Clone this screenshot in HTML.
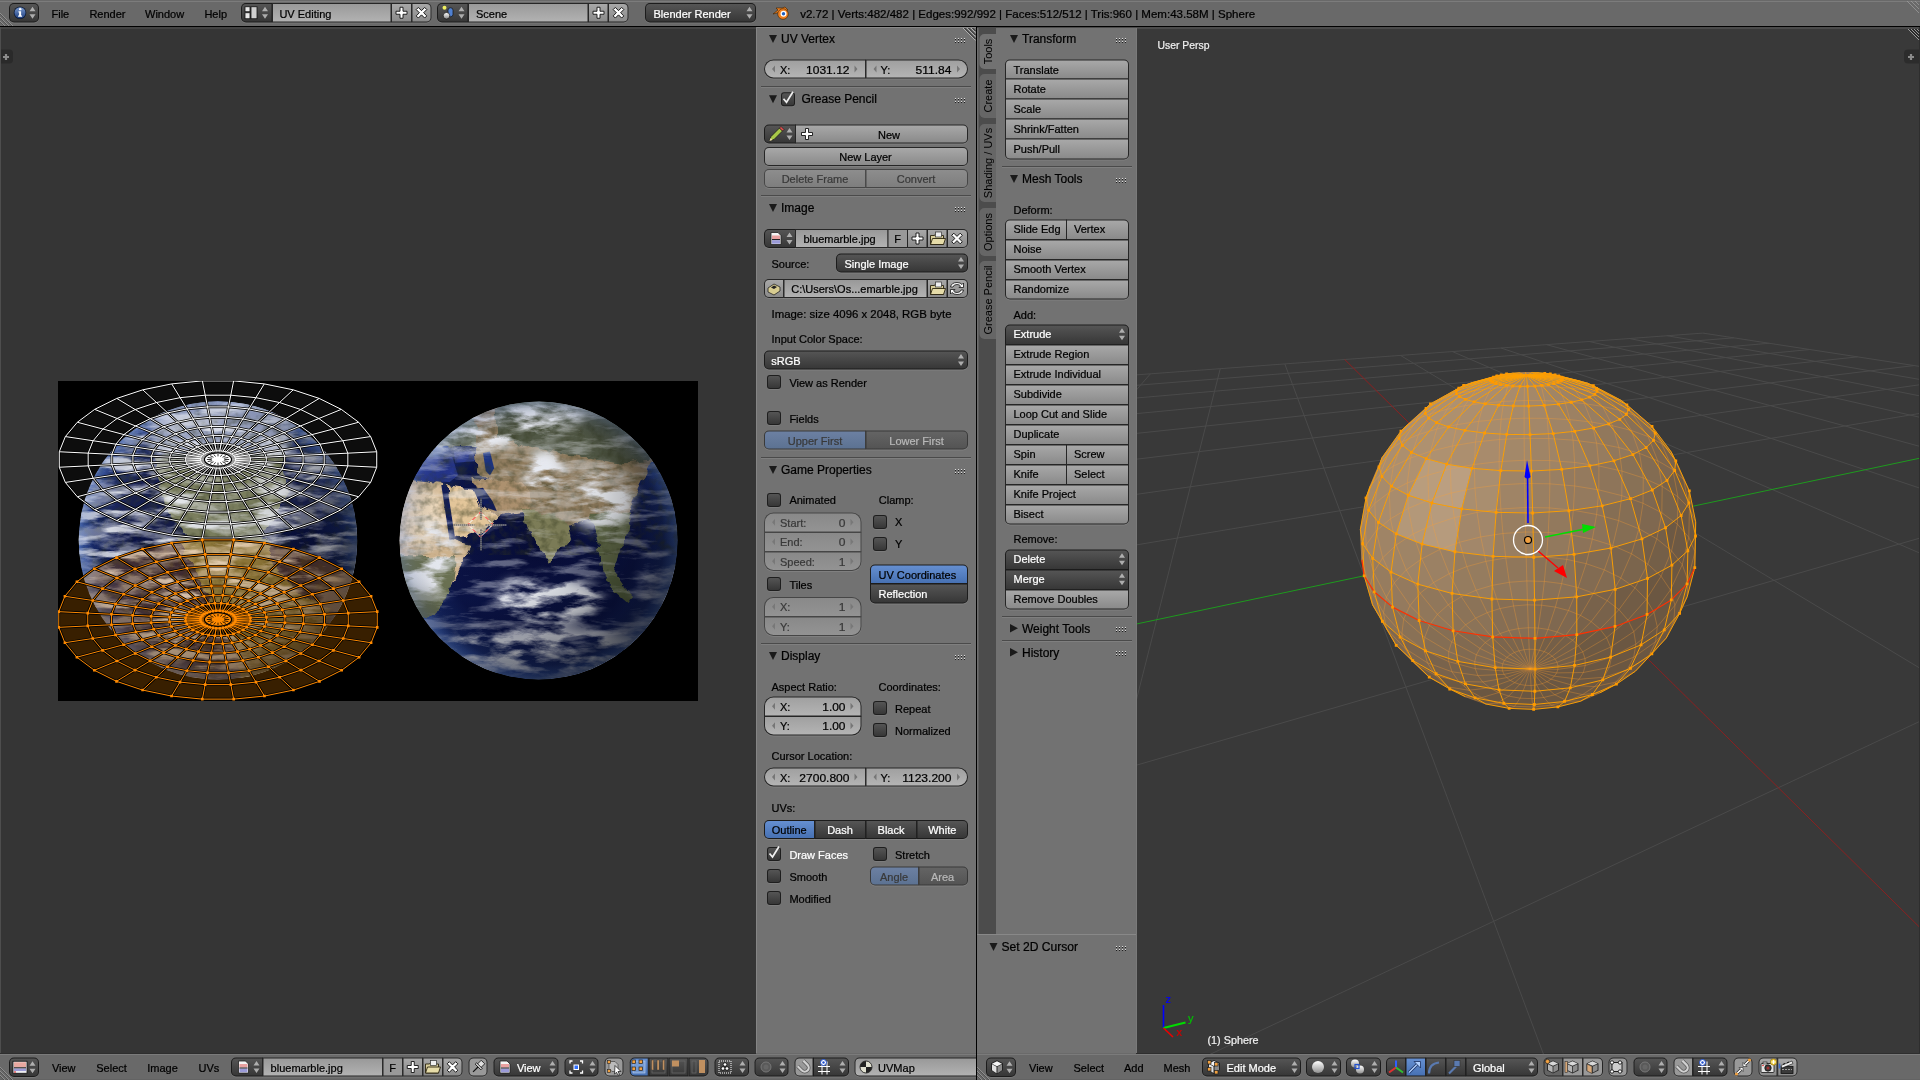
<!DOCTYPE html>
<html><head><meta charset="utf-8"><title>Blender UV Editing</title>
<style>
html,body{margin:0;padding:0;background:#000;overflow:hidden;width:1920px;height:1080px}
svg{display:block;font-family:"Liberation Sans",sans-serif;will-change:transform}
text{font-family:"Liberation Sans",sans-serif}
</style></head>
<body>
<svg width="1920" height="1080" viewBox="0 0 1920 1080">
<defs>

<radialGradient id="oceanR" cx="0.5" cy="0.5" r="0.5">
  <stop offset="0" stop-color="#070c36"/>
  <stop offset="0.7" stop-color="#0b1448"/>
  <stop offset="0.9" stop-color="#16286a"/>
  <stop offset="0.97" stop-color="#2c4a98"/>
  <stop offset="1" stop-color="#4060a8"/>
</radialGradient>
<radialGradient id="limb" cx="0.5" cy="0.5" r="0.5">
  <stop offset="0" stop-color="#000" stop-opacity="0"/>
  <stop offset="0.8" stop-color="#000" stop-opacity="0"/>
  <stop offset="0.95" stop-color="#4a68b8" stop-opacity="0.15"/>
  <stop offset="1" stop-color="#6a88d0" stop-opacity="0.3"/>
</radialGradient>
<radialGradient id="eshade" cx="0.34" cy="0.34" r="0.78" fx="0.3" fy="0.3">
  <stop offset="0" stop-color="#000" stop-opacity="0"/>
  <stop offset="0.5" stop-color="#000" stop-opacity="0.05"/>
  <stop offset="0.8" stop-color="#000" stop-opacity="0.4"/>
  <stop offset="1" stop-color="#000" stop-opacity="0.75"/>
</radialGradient>
<filter id="coast" x="-10%" y="-10%" width="120%" height="120%">
  <feTurbulence type="fractalNoise" baseFrequency="0.08" numOctaves="3" seed="5" result="t"/>
  <feDisplacementMap in="SourceGraphic" in2="t" scale="10" xChannelSelector="R" yChannelSelector="G" result="d"/>
  <feGaussianBlur in="d" stdDeviation="0.7"/>
</filter>
<filter id="cloudsA" x="0" y="0" width="1" height="1" color-interpolation-filters="sRGB">
  <feTurbulence type="fractalNoise" baseFrequency="0.025 0.07" numOctaves="5" seed="7" result="n"/>
  <feColorMatrix in="n" type="matrix" values="0 0 0 0 0.93  0 0 0 0 0.94  0 0 0 0 0.97  4.6 0 0 0 -1.95"/>
</filter>
<filter id="cloudsB" x="0" y="0" width="1" height="1" color-interpolation-filters="sRGB">
  <feTurbulence type="fractalNoise" baseFrequency="0.02 0.1" numOctaves="5" seed="21" result="n"/>
  <feColorMatrix in="n" type="matrix" values="0 0 0 0 0.93  0 0 0 0 0.94  0 0 0 0 0.97  5.0 0 0 0 -2.55"/>
</filter>
<filter id="landtex" x="0" y="0" width="1" height="1" color-interpolation-filters="sRGB">
  <feTurbulence type="fractalNoise" baseFrequency="0.12" numOctaves="3" seed="11" result="n"/>
  <feColorMatrix in="n" type="matrix" values="0 0 0 0 0.2  0 0 0 0 0.22  0 0 0 0 0.12  2.2 0 0 0 -0.9"/>
</filter>
<filter id="blur3"><feGaussianBlur stdDeviation="4"/></filter>
<filter id="blur8"><feGaussianBlur stdDeviation="6"/></filter>
<clipPath id="clipR"><circle cx="538.6" cy="540.5" r="139"/></clipPath>
<clipPath id="clipL"><circle cx="218" cy="540.5" r="139.3"/></clipPath>
<clipPath id="clipImg"><rect x="58" y="381" width="640" height="320"/></clipPath>
<mask id="cmaskR" maskUnits="userSpaceOnUse" x="399" y="401" width="280" height="280">
  <g filter="url(#blur8)">
   <ellipse cx="505" cy="428" rx="80" ry="20" fill="#fff" fill-opacity="1" transform="rotate(-12 505 428)"/>
   <ellipse cx="545" cy="478" rx="22" ry="30" fill="#fff" fill-opacity="1"/>
   <ellipse cx="602" cy="498" rx="34" ry="32" fill="#fff" fill-opacity="0.95"/>
   <ellipse cx="428" cy="560" rx="32" ry="38" fill="#fff" fill-opacity="1"/>
   <ellipse cx="548" cy="600" rx="55" ry="24" fill="#fff" fill-opacity="1"/>
   <ellipse cx="540" cy="650" rx="115" ry="24" fill="#fff" fill-opacity="0.9"/>
   <ellipse cx="660" cy="600" rx="25" ry="50" fill="#fff" fill-opacity="0.5"/>
  </g>
</mask>

<linearGradient id="lg1" x1="0" y1="0" x2="0" y2="1"><stop offset="0" stop-color="#a8a8a8"/><stop offset="1" stop-color="#8a8a8a"/></linearGradient>
<linearGradient id="lg2" x1="0" y1="0" x2="0" y2="1"><stop offset="0" stop-color="#555555"/><stop offset="1" stop-color="#373737"/></linearGradient>
<linearGradient id="lg3" x1="0" y1="0" x2="0" y2="1"><stop offset="0" stop-color="#a0a0a0"/><stop offset="1" stop-color="#b4b4b4"/></linearGradient>
<linearGradient id="lg4" x1="0" y1="0" x2="0" y2="1"><stop offset="0" stop-color="#8d8d8d"/><stop offset="1" stop-color="#7e7e7e"/></linearGradient>
<linearGradient id="lg5" x1="0" y1="0" x2="0" y2="1"><stop offset="0" stop-color="#999999"/><stop offset="1" stop-color="#b2b2b2"/></linearGradient>
<linearGradient id="lg6" x1="0" y1="0" x2="0" y2="1"><stop offset="0" stop-color="#999999"/><stop offset="1" stop-color="#999999"/></linearGradient>
<linearGradient id="lg7" x1="0" y1="0" x2="0" y2="1"><stop offset="0" stop-color="#6c80a2"/><stop offset="1" stop-color="#5c7292"/></linearGradient>
<linearGradient id="lg8" x1="0" y1="0" x2="0" y2="1"><stop offset="0" stop-color="#646464"/><stop offset="1" stop-color="#545454"/></linearGradient>
<linearGradient id="lg9" x1="0" y1="0" x2="0" y2="1"><stop offset="0" stop-color="#898989"/><stop offset="1" stop-color="#939393"/></linearGradient>
<linearGradient id="lg10" x1="0" y1="0" x2="0" y2="1"><stop offset="0" stop-color="#658fd1"/><stop offset="1" stop-color="#4771b3"/></linearGradient>
<linearGradient id="lg11" x1="0" y1="0" x2="0" y2="1"><stop offset="0" stop-color="#7a9ad0"/><stop offset="1" stop-color="#1e3f80"/></linearGradient>
<linearGradient id="lg12" x1="0" y1="0" x2="0" y2="1"><stop offset="0" stop-color="#ffffff"/><stop offset="1" stop-color="#888888"/></linearGradient>
<linearGradient id="lg13" x1="0" y1="0" x2="0" y2="1"><stop offset="0" stop-color="#ffffff"/><stop offset="1" stop-color="#909090"/></linearGradient>
<linearGradient id="lg14" x1="0" y1="0" x2="0" y2="1"><stop offset="0" stop-color="#646464"/><stop offset="1" stop-color="#646464"/></linearGradient>
</defs>
<rect x="0" y="0" width="1920" height="1080" fill="#000000" />
<rect x="0" y="0" width="1920" height="26" fill="#696969" />
<rect x="0" y="1" width="1920" height="1" fill="#7c7c7c" />
<rect x="0" y="26" width="1920" height="1" fill="#000000" />
<rect x="0" y="27" width="976" height="1027" fill="#353535" />
<rect x="0" y="27" width="756" height="2" fill="#444444" />
<rect x="756" y="27" width="220" height="1027" fill="#727272" />
<rect x="756" y="27" width="220" height="1" fill="#8a8a8a" />
<rect x="756" y="27" width="1" height="1027" fill="#858585" />
<rect x="976" y="27" width="1" height="1053" fill="#000000" />
<rect x="977" y="27" width="943" height="1027" fill="#393939" />
<rect x="977" y="27" width="943" height="2" fill="#4b4b4b" />
<rect x="0" y="1054" width="976" height="26" fill="#696969" />
<rect x="0" y="1053" width="976" height="1" fill="#2e2e2e" />
<rect x="0" y="1054" width="976" height="1" fill="#7b7b7b" />
<rect x="0" y="1079" width="976" height="1" fill="#636363" />
<rect x="977" y="1054" width="943" height="26" fill="#696969" />
<rect x="977" y="1053" width="943" height="1" fill="#2e2e2e" />
<rect x="977" y="1054" width="943" height="1" fill="#7b7b7b" />
<rect x="977" y="1079" width="943" height="1" fill="#636363" />
<rect x="756" y="1053" width="220" height="1" fill="#6a6a6a" />
<g clip-path="url(#clipImg)">
<rect x="58" y="381" width="640" height="320" fill="#000" />
<g clip-path="url(#clipL)">
<circle cx="218" cy="540.5" r="139.3" fill="url(#oceanR)"/>
<g filter="url(#coast)">
<path d="M155.3,454.1 L280.7,451.3 L287.6,491.7 L273.7,519.6 L259.8,540.5 L238.9,554.4 L218.0,557.2 L190.1,540.5 L169.2,512.6 L155.3,477.8 Z" fill="#767a58" />
<path d="M141.4,394.2 L301.6,394.2 L287.6,454.1 L155.3,456.9 Z" fill="#9aa4c4" filter="url(#blur3)"/>
<path d="M176.2,537.7 L266.8,537.7 L273.7,568.4 L294.6,589.3 L329.4,610.1 L322.5,651.9 L287.6,686.8 L245.9,686.8 L225.0,624.1 L204.1,589.3 L190.1,561.4 Z" fill="#72744e" />
</g>
<rect x="78.69999999999999" y="401.2" width="278.6" height="278.6" filter="url(#landtex)" opacity="0.45"/>
<rect x="78.69999999999999" y="401.2" width="278.6" height="278.6" filter="url(#cloudsB)" opacity="0.85" transform="translate(0,0)"/>
<rect x="78.69999999999999" y="401.2" width="278.6" height="278.6" filter="url(#cloudsA)" opacity="0.45"/>
<circle cx="218" cy="540.5" r="139.3" fill="url(#limb)"/>
<circle cx="218" cy="540.5" r="139.3" fill="url(#eshade)"/>
</g>
<g clip-path="url(#clipR)">
<circle cx="538.6" cy="540.5" r="139" fill="url(#oceanR)"/>
<g filter="url(#coast)">
<path d="M392.6,394.5 L510.8,394.5 L503.9,448.8 L473.3,446.0 L455.2,446.0 L424.6,448.8 L392.6,457.1 Z" fill="#7a8272" />
<path d="M476.1,394.5 L684.6,394.5 L684.6,443.2 L649.8,464.1 L635.9,491.9 L627.6,515.5 L622.0,537.7 L608.1,533.5 L591.4,519.6 L577.5,523.8 L562.2,526.6 L545.6,515.5 L524.7,509.9 L510.8,498.8 L496.9,484.9 L476.1,471.0 Z" fill="#927e60" />
<path d="M496.9,394.5 L684.6,394.5 L684.6,454.3 L622.0,464.1 L566.4,454.3 L496.9,440.4 Z" fill="#525a46" />
<path d="M473.3,477.9 L524.7,482.1 L531.6,509.9 L498.3,516.9 L490.0,509.9 L480.2,498.8 Z" fill="#ae9270" />
<path d="M392.6,477.9 L424.6,482.1 L442.7,484.9 L452.4,540.5 L470.5,546.1 L462.2,561.4 L452.4,582.2 L430.2,617.0 L392.6,623.9 Z" fill="#d4b892" />
<path d="M392.6,482.1 L438.5,487.7 L446.9,526.6 L427.4,543.3 L392.6,547.5 Z" fill="#f0dcc0" filter="url(#blur3)"/>
<path d="M392.6,554.4 L455.2,557.2 L452.4,582.2 L434.4,617.0 L392.6,623.9 Z" fill="#6e7454" />
<path d="M446.9,484.9 L473.3,489.1 L480.2,505.8 L490.0,509.9 L498.3,516.9 L485.8,529.4 L469.1,534.9 L452.4,539.1 L448.2,512.7 Z" fill="#e6c89c" />
<path d="M520.5,507.1 L563.6,518.3 L569.2,537.7 L555.3,554.4 L549.7,564.1 L541.4,551.6 L527.5,529.4 Z" fill="#80805a" />
<path d="M591.4,512.7 L630.3,512.7 L627.6,533.5 L619.2,554.4 L615.1,575.2 L624.8,589.1 L615.1,593.3 L601.1,568.3 L597.0,540.5 Z" fill="#5e6846" />
<path d="M608.1,571.1 L633.1,596.1 L627.6,603.0 L603.9,582.2 Z" fill="#56623f" />
</g>
<path d="M392.6,457.1 L452.4,457.1 L458.0,475.2 L449.6,482.1 L424.6,480.7 L392.6,476.6 Z" fill="#26368e" />
<path d="M453.8,451.5 L473.3,451.5 L474.7,461.3 L455.2,462.7 Z" fill="#2a3a90" />
<path d="M483.0,452.9 L490.0,451.5 L494.1,468.2 L490.0,475.2 L485.8,471.0 Z" fill="#1c3480" />
<path d="M441.3,484.9 L446.9,484.9 L455.2,539.1 L449.6,540.5 Z" fill="#101c5a" />
<path d="M473.3,489.1 L483.0,487.7 L492.7,501.6 L496.9,511.3 L488.6,508.5 L478.8,501.6 Z" fill="#101c5a" />
<rect x="399.6" y="401.5" width="278" height="152.9" filter="url(#landtex)" opacity="0.5"/>
<g mask="url(#cmaskR)"><rect x="399.6" y="401.5" width="278" height="278" filter="url(#cloudsA)"/></g>
<rect x="399.6" y="401.5" width="278" height="278" filter="url(#cloudsB)" opacity="0.4"/>
<circle cx="538.6" cy="540.5" r="139" fill="url(#limb)"/>
<circle cx="538.6" cy="540.5" r="139" fill="url(#eshade)"/>
</g>
<path d="M376.73,467.24 L370.63,482.43 L358.67,496.74 L341.30,509.62 L319.19,520.57 L293.19,529.17 L264.30,535.10 L233.63,538.12 L202.37,538.12 L171.70,535.10 L142.81,529.17 L116.81,520.57 L94.70,509.62 L77.33,496.74 L65.37,482.43 L59.27,467.24 L59.27,451.76 L65.37,436.57 L77.33,422.26 L94.70,409.38 L116.81,398.43 L142.81,389.83 L171.70,383.90 L202.37,380.88 L233.63,380.88 L264.30,383.90 L293.19,389.83 L319.19,398.43 L341.30,409.38 L358.67,422.26 L370.63,436.57 L376.73,451.76 Z" fill="#ffffff" fill-opacity="0.05"/>
<path d="M376.73,467.24 L370.63,482.43 L358.67,496.74 L341.30,509.62 L319.19,520.57 L293.19,529.17 L264.30,535.10 L233.63,538.12 L202.37,538.12 L171.70,535.10 L142.81,529.17 L116.81,520.57 L94.70,509.62 L77.33,496.74 L65.37,482.43 L59.27,467.24 L59.27,451.76 L65.37,436.57 L77.33,422.26 L94.70,409.38 L116.81,398.43 L142.81,389.83 L171.70,383.90 L202.37,380.88 L233.63,380.88 L264.30,383.90 L293.19,389.83 L319.19,398.43 L341.30,409.38 L358.67,422.26 L370.63,436.57 L376.73,451.76 Z M347.84,465.83 L342.85,478.26 L333.07,489.96 L318.86,500.50 L300.77,509.45 L279.50,516.49 L255.87,521.34 L230.79,523.81 L205.21,523.81 L180.13,521.34 L156.50,516.49 L135.23,509.45 L117.14,500.50 L102.93,489.96 L93.15,478.26 L88.16,465.83 L88.16,453.17 L93.15,440.74 L102.93,429.04 L117.14,418.50 L135.23,409.55 L156.50,402.51 L180.13,397.66 L205.21,395.19 L230.79,395.19 L255.87,397.66 L279.50,402.51 L300.77,409.55 L318.86,418.50 L333.07,429.04 L342.85,440.74 L347.84,453.17 Z M324.19,464.68 L320.11,474.84 L312.11,484.41 L300.48,493.03 L285.69,500.35 L268.30,506.11 L248.97,510.08 L228.46,512.10 L207.54,512.10 L187.03,510.08 L167.70,506.11 L150.31,500.35 L135.52,493.03 L123.89,484.41 L115.89,474.84 L111.81,464.68 L111.81,454.32 L115.89,444.16 L123.89,434.59 L135.52,425.97 L150.31,418.65 L167.70,412.89 L187.03,408.92 L207.54,406.90 L228.46,406.90 L248.97,408.92 L268.30,412.89 L285.69,418.65 L300.48,425.97 L312.11,434.59 L320.11,444.16 L324.19,454.32 Z M303.08,463.65 L299.81,471.79 L293.40,479.46 L284.09,486.36 L272.24,492.23 L258.30,496.84 L242.82,500.02 L226.38,501.64 L209.62,501.64 L193.18,500.02 L177.70,496.84 L163.76,492.23 L151.91,486.36 L142.60,479.46 L136.19,471.79 L132.92,463.65 L132.92,455.35 L136.19,447.21 L142.60,439.54 L151.91,432.64 L163.76,426.77 L177.70,422.16 L193.18,418.98 L209.62,417.36 L226.38,417.36 L242.82,418.98 L258.30,422.16 L272.24,426.77 L284.09,432.64 L293.40,439.54 L299.81,447.21 L303.08,455.35 Z M284.67,462.75 L282.11,469.13 L277.08,475.14 L269.78,480.55 L260.50,485.15 L249.58,488.76 L237.45,491.25 L224.57,492.52 L211.43,492.52 L198.55,491.25 L186.42,488.76 L175.50,485.15 L166.22,480.55 L158.92,475.14 L153.89,469.13 L151.33,462.75 L151.33,456.25 L153.89,449.87 L158.92,443.86 L166.22,438.45 L175.50,433.85 L186.42,430.24 L198.55,427.75 L211.43,426.48 L224.57,426.48 L237.45,427.75 L249.58,430.24 L260.50,433.85 L269.78,438.45 L277.08,443.86 L282.11,449.87 L284.67,456.25 Z M266.25,461.85 L264.40,466.47 L260.76,470.82 L255.48,474.74 L248.76,478.06 L240.86,480.68 L232.08,482.48 L222.75,483.40 L213.25,483.40 L203.92,482.48 L195.14,480.68 L187.24,478.06 L180.52,474.74 L175.24,470.82 L171.60,466.47 L169.75,461.85 L169.75,457.15 L171.60,452.53 L175.24,448.18 L180.52,444.26 L187.24,440.94 L195.14,438.32 L203.92,436.52 L213.25,435.60 L222.75,435.60 L232.08,436.52 L240.86,438.32 L248.76,440.94 L255.48,444.26 L260.76,448.18 L264.40,452.53 L266.25,457.15 Z M250.38,461.08 L249.14,464.18 L246.70,467.10 L243.15,469.72 L238.64,471.96 L233.34,473.71 L227.45,474.92 L221.19,475.54 L214.81,475.54 L208.55,474.92 L202.66,473.71 L197.36,471.96 L192.85,469.72 L189.30,467.10 L186.86,464.18 L185.62,461.08 L185.62,457.92 L186.86,454.82 L189.30,451.90 L192.85,449.28 L197.36,447.04 L202.66,445.29 L208.55,444.08 L214.81,443.46 L221.19,443.46 L227.45,444.08 L233.34,445.29 L238.64,447.04 L243.15,449.28 L246.70,451.90 L249.14,454.82 L250.38,457.92 Z M235.46,460.35 L234.79,462.02 L233.47,463.60 L231.56,465.01 L229.13,466.22 L226.27,467.16 L223.09,467.82 L219.72,468.15 L216.28,468.15 L212.91,467.82 L209.73,467.16 L206.87,466.22 L204.44,465.01 L202.53,463.60 L201.21,462.02 L200.54,460.35 L200.54,458.65 L201.21,456.98 L202.53,455.40 L204.44,453.99 L206.87,452.78 L209.73,451.84 L212.91,451.18 L216.28,450.85 L219.72,450.85 L223.09,451.18 L226.27,451.84 L229.13,452.78 L231.56,453.99 L233.47,455.40 L234.79,456.98 L235.46,458.65 Z M376.73,467.24 L235.46,460.35 M370.63,482.43 L234.79,462.02 M358.67,496.74 L233.47,463.60 M341.30,509.62 L231.56,465.01 M319.19,520.57 L229.13,466.22 M293.19,529.17 L226.27,467.16 M264.30,535.10 L223.09,467.82 M233.63,538.12 L219.72,468.15 M202.37,538.12 L216.28,468.15 M171.70,535.10 L212.91,467.82 M142.81,529.17 L209.73,467.16 M116.81,520.57 L206.87,466.22 M94.70,509.62 L204.44,465.01 M77.33,496.74 L202.53,463.60 M65.37,482.43 L201.21,462.02 M59.27,467.24 L200.54,460.35 M59.27,451.76 L200.54,458.65 M65.37,436.57 L201.21,456.98 M77.33,422.26 L202.53,455.40 M94.70,409.38 L204.44,453.99 M116.81,398.43 L206.87,452.78 M142.81,389.83 L209.73,451.84 M171.70,383.90 L212.91,451.18 M202.37,380.88 L216.28,450.85 M233.63,380.88 L219.72,450.85 M264.30,383.90 L223.09,451.18 M293.19,389.83 L226.27,451.84 M319.19,398.43 L229.13,452.78 M341.30,409.38 L231.56,453.99 M358.67,422.26 L233.47,455.40 M370.63,436.57 L234.79,456.98 M376.73,451.76 L235.46,458.65 M249.90,459.50 L230.76,459.50 M249.75,461.05 L230.70,460.12 M249.29,462.58 L230.51,460.73 M248.53,464.09 L230.21,461.33 M247.47,465.55 L229.79,461.92 M246.13,466.95 L229.25,462.48 M244.52,468.28 L228.61,463.01 M242.66,469.52 L227.86,463.51 M240.56,470.67 L227.02,463.97 M238.24,471.71 L226.09,464.39 M235.72,472.64 L225.09,464.75 M233.04,473.43 L224.02,465.07 M230.21,474.10 L222.88,465.34 M227.26,474.62 L221.70,465.55 M224.22,475.00 L220.49,465.70 M221.13,475.22 L219.25,465.79 M218.00,475.30 L218.00,465.82 M214.87,475.22 L216.75,465.79 M211.78,475.00 L215.51,465.70 M208.74,474.62 L214.30,465.55 M205.79,474.10 L213.12,465.34 M202.96,473.43 L211.98,465.07 M200.28,472.64 L210.91,464.75 M197.76,471.71 L209.91,464.39 M195.44,470.67 L208.98,463.97 M193.34,469.52 L208.14,463.51 M191.48,468.28 L207.39,463.01 M189.87,466.95 L206.75,462.48 M188.53,465.55 L206.21,461.92 M187.47,464.09 L205.79,461.33 M186.71,462.58 L205.49,460.73 M186.25,461.05 L205.30,460.12 M186.10,459.50 L205.24,459.50 M186.25,457.95 L205.30,458.88 M186.71,456.42 L205.49,458.27 M187.47,454.91 L205.79,457.67 M188.53,453.45 L206.21,457.08 M189.87,452.05 L206.75,456.52 M191.48,450.72 L207.39,455.99 M193.34,449.48 L208.14,455.49 M195.44,448.33 L208.98,455.03 M197.76,447.29 L209.91,454.61 M200.28,446.36 L210.91,454.25 M202.96,445.57 L211.98,453.93 M205.79,444.90 L213.12,453.66 M208.74,444.38 L214.30,453.45 M211.78,444.00 L215.51,453.30 M214.87,443.78 L216.75,453.21 M218.00,443.70 L218.00,453.18 M221.13,443.78 L219.25,453.21 M224.22,444.00 L220.49,453.30 M227.26,444.38 L221.70,453.45 M230.21,444.90 L222.88,453.66 M233.04,445.57 L224.02,453.93 M235.72,446.36 L225.09,454.25 M238.24,447.29 L226.09,454.61 M240.56,448.33 L227.02,455.03 M242.66,449.48 L227.86,455.49 M244.52,450.72 L228.61,455.99 M246.13,452.05 L229.25,456.52 M247.47,453.45 L229.79,457.08 M248.53,454.91 L230.21,457.67 M249.29,456.42 L230.51,458.27 M249.75,457.95 L230.70,458.88" fill="none" stroke="#000" stroke-width="2.6" stroke-linejoin="round"/>
<path d="M376.73,467.24 L370.63,482.43 L358.67,496.74 L341.30,509.62 L319.19,520.57 L293.19,529.17 L264.30,535.10 L233.63,538.12 L202.37,538.12 L171.70,535.10 L142.81,529.17 L116.81,520.57 L94.70,509.62 L77.33,496.74 L65.37,482.43 L59.27,467.24 L59.27,451.76 L65.37,436.57 L77.33,422.26 L94.70,409.38 L116.81,398.43 L142.81,389.83 L171.70,383.90 L202.37,380.88 L233.63,380.88 L264.30,383.90 L293.19,389.83 L319.19,398.43 L341.30,409.38 L358.67,422.26 L370.63,436.57 L376.73,451.76 Z M347.84,465.83 L342.85,478.26 L333.07,489.96 L318.86,500.50 L300.77,509.45 L279.50,516.49 L255.87,521.34 L230.79,523.81 L205.21,523.81 L180.13,521.34 L156.50,516.49 L135.23,509.45 L117.14,500.50 L102.93,489.96 L93.15,478.26 L88.16,465.83 L88.16,453.17 L93.15,440.74 L102.93,429.04 L117.14,418.50 L135.23,409.55 L156.50,402.51 L180.13,397.66 L205.21,395.19 L230.79,395.19 L255.87,397.66 L279.50,402.51 L300.77,409.55 L318.86,418.50 L333.07,429.04 L342.85,440.74 L347.84,453.17 Z M324.19,464.68 L320.11,474.84 L312.11,484.41 L300.48,493.03 L285.69,500.35 L268.30,506.11 L248.97,510.08 L228.46,512.10 L207.54,512.10 L187.03,510.08 L167.70,506.11 L150.31,500.35 L135.52,493.03 L123.89,484.41 L115.89,474.84 L111.81,464.68 L111.81,454.32 L115.89,444.16 L123.89,434.59 L135.52,425.97 L150.31,418.65 L167.70,412.89 L187.03,408.92 L207.54,406.90 L228.46,406.90 L248.97,408.92 L268.30,412.89 L285.69,418.65 L300.48,425.97 L312.11,434.59 L320.11,444.16 L324.19,454.32 Z M303.08,463.65 L299.81,471.79 L293.40,479.46 L284.09,486.36 L272.24,492.23 L258.30,496.84 L242.82,500.02 L226.38,501.64 L209.62,501.64 L193.18,500.02 L177.70,496.84 L163.76,492.23 L151.91,486.36 L142.60,479.46 L136.19,471.79 L132.92,463.65 L132.92,455.35 L136.19,447.21 L142.60,439.54 L151.91,432.64 L163.76,426.77 L177.70,422.16 L193.18,418.98 L209.62,417.36 L226.38,417.36 L242.82,418.98 L258.30,422.16 L272.24,426.77 L284.09,432.64 L293.40,439.54 L299.81,447.21 L303.08,455.35 Z M284.67,462.75 L282.11,469.13 L277.08,475.14 L269.78,480.55 L260.50,485.15 L249.58,488.76 L237.45,491.25 L224.57,492.52 L211.43,492.52 L198.55,491.25 L186.42,488.76 L175.50,485.15 L166.22,480.55 L158.92,475.14 L153.89,469.13 L151.33,462.75 L151.33,456.25 L153.89,449.87 L158.92,443.86 L166.22,438.45 L175.50,433.85 L186.42,430.24 L198.55,427.75 L211.43,426.48 L224.57,426.48 L237.45,427.75 L249.58,430.24 L260.50,433.85 L269.78,438.45 L277.08,443.86 L282.11,449.87 L284.67,456.25 Z M266.25,461.85 L264.40,466.47 L260.76,470.82 L255.48,474.74 L248.76,478.06 L240.86,480.68 L232.08,482.48 L222.75,483.40 L213.25,483.40 L203.92,482.48 L195.14,480.68 L187.24,478.06 L180.52,474.74 L175.24,470.82 L171.60,466.47 L169.75,461.85 L169.75,457.15 L171.60,452.53 L175.24,448.18 L180.52,444.26 L187.24,440.94 L195.14,438.32 L203.92,436.52 L213.25,435.60 L222.75,435.60 L232.08,436.52 L240.86,438.32 L248.76,440.94 L255.48,444.26 L260.76,448.18 L264.40,452.53 L266.25,457.15 Z M250.38,461.08 L249.14,464.18 L246.70,467.10 L243.15,469.72 L238.64,471.96 L233.34,473.71 L227.45,474.92 L221.19,475.54 L214.81,475.54 L208.55,474.92 L202.66,473.71 L197.36,471.96 L192.85,469.72 L189.30,467.10 L186.86,464.18 L185.62,461.08 L185.62,457.92 L186.86,454.82 L189.30,451.90 L192.85,449.28 L197.36,447.04 L202.66,445.29 L208.55,444.08 L214.81,443.46 L221.19,443.46 L227.45,444.08 L233.34,445.29 L238.64,447.04 L243.15,449.28 L246.70,451.90 L249.14,454.82 L250.38,457.92 Z M235.46,460.35 L234.79,462.02 L233.47,463.60 L231.56,465.01 L229.13,466.22 L226.27,467.16 L223.09,467.82 L219.72,468.15 L216.28,468.15 L212.91,467.82 L209.73,467.16 L206.87,466.22 L204.44,465.01 L202.53,463.60 L201.21,462.02 L200.54,460.35 L200.54,458.65 L201.21,456.98 L202.53,455.40 L204.44,453.99 L206.87,452.78 L209.73,451.84 L212.91,451.18 L216.28,450.85 L219.72,450.85 L223.09,451.18 L226.27,451.84 L229.13,452.78 L231.56,453.99 L233.47,455.40 L234.79,456.98 L235.46,458.65 Z M376.73,467.24 L235.46,460.35 M370.63,482.43 L234.79,462.02 M358.67,496.74 L233.47,463.60 M341.30,509.62 L231.56,465.01 M319.19,520.57 L229.13,466.22 M293.19,529.17 L226.27,467.16 M264.30,535.10 L223.09,467.82 M233.63,538.12 L219.72,468.15 M202.37,538.12 L216.28,468.15 M171.70,535.10 L212.91,467.82 M142.81,529.17 L209.73,467.16 M116.81,520.57 L206.87,466.22 M94.70,509.62 L204.44,465.01 M77.33,496.74 L202.53,463.60 M65.37,482.43 L201.21,462.02 M59.27,467.24 L200.54,460.35 M59.27,451.76 L200.54,458.65 M65.37,436.57 L201.21,456.98 M77.33,422.26 L202.53,455.40 M94.70,409.38 L204.44,453.99 M116.81,398.43 L206.87,452.78 M142.81,389.83 L209.73,451.84 M171.70,383.90 L212.91,451.18 M202.37,380.88 L216.28,450.85 M233.63,380.88 L219.72,450.85 M264.30,383.90 L223.09,451.18 M293.19,389.83 L226.27,451.84 M319.19,398.43 L229.13,452.78 M341.30,409.38 L231.56,453.99 M358.67,422.26 L233.47,455.40 M370.63,436.57 L234.79,456.98 M376.73,451.76 L235.46,458.65" fill="none" stroke="#ffffff" stroke-width="1" stroke-linejoin="round"/>
<path d="M249.90,459.50 L230.76,459.50 M249.75,461.05 L230.70,460.12 M249.29,462.58 L230.51,460.73 M248.53,464.09 L230.21,461.33 M247.47,465.55 L229.79,461.92 M246.13,466.95 L229.25,462.48 M244.52,468.28 L228.61,463.01 M242.66,469.52 L227.86,463.51 M240.56,470.67 L227.02,463.97 M238.24,471.71 L226.09,464.39 M235.72,472.64 L225.09,464.75 M233.04,473.43 L224.02,465.07 M230.21,474.10 L222.88,465.34 M227.26,474.62 L221.70,465.55 M224.22,475.00 L220.49,465.70 M221.13,475.22 L219.25,465.79 M218.00,475.30 L218.00,465.82 M214.87,475.22 L216.75,465.79 M211.78,475.00 L215.51,465.70 M208.74,474.62 L214.30,465.55 M205.79,474.10 L213.12,465.34 M202.96,473.43 L211.98,465.07 M200.28,472.64 L210.91,464.75 M197.76,471.71 L209.91,464.39 M195.44,470.67 L208.98,463.97 M193.34,469.52 L208.14,463.51 M191.48,468.28 L207.39,463.01 M189.87,466.95 L206.75,462.48 M188.53,465.55 L206.21,461.92 M187.47,464.09 L205.79,461.33 M186.71,462.58 L205.49,460.73 M186.25,461.05 L205.30,460.12 M186.10,459.50 L205.24,459.50 M186.25,457.95 L205.30,458.88 M186.71,456.42 L205.49,458.27 M187.47,454.91 L205.79,457.67 M188.53,453.45 L206.21,457.08 M189.87,452.05 L206.75,456.52 M191.48,450.72 L207.39,455.99 M193.34,449.48 L208.14,455.49 M195.44,448.33 L208.98,455.03 M197.76,447.29 L209.91,454.61 M200.28,446.36 L210.91,454.25 M202.96,445.57 L211.98,453.93 M205.79,444.90 L213.12,453.66 M208.74,444.38 L214.30,453.45 M211.78,444.00 L215.51,453.30 M214.87,443.78 L216.75,453.21 M218.00,443.70 L218.00,453.18 M221.13,443.78 L219.25,453.21 M224.22,444.00 L220.49,453.30 M227.26,444.38 L221.70,453.45 M230.21,444.90 L222.88,453.66 M233.04,445.57 L224.02,453.93 M235.72,446.36 L225.09,454.25 M238.24,447.29 L226.09,454.61 M240.56,448.33 L227.02,455.03 M242.66,449.48 L227.86,455.49 M244.52,450.72 L228.61,455.99 M246.13,452.05 L229.25,456.52 M247.47,453.45 L229.79,457.08 M248.53,454.91 L230.21,457.67 M249.29,456.42 L230.51,458.27 M249.75,457.95 L230.70,458.88" fill="none" stroke="#ffffff" stroke-width="0.6"/>
<ellipse cx="218" cy="459.5" rx="13.557500000000001" ry="6.715000000000001" fill="#ffffff" stroke="#000" stroke-width="1.2"/>
<path d="M229.16,459.50 L224.38,459.50 M228.32,461.62 L223.89,460.71 M225.89,463.41 L222.51,461.73 M222.27,464.61 L220.44,462.42 M218.00,465.03 L218.00,462.66 M213.73,464.61 L215.56,462.42 M210.11,463.41 L213.49,461.73 M207.68,461.62 L212.11,460.71 M206.84,459.50 L211.62,459.50 M207.68,457.38 L212.11,458.29 M210.11,455.59 L213.49,457.27 M213.73,454.39 L215.56,456.58 M218.00,453.97 L218.00,456.34 M222.27,454.39 L220.44,456.58 M225.89,455.59 L222.51,457.27 M228.32,457.38 L223.89,458.29" stroke="#000" stroke-width="0.8"/>
<path d="M377.23,627.34 L371.11,642.72 L359.11,657.21 L341.68,670.25 L319.50,681.34 L293.42,690.05 L264.45,696.06 L233.68,699.11 L202.32,699.11 L171.55,696.06 L142.58,690.05 L116.50,681.34 L94.32,670.25 L76.89,657.21 L64.89,642.72 L58.77,627.34 L58.77,611.66 L64.89,596.28 L76.89,581.79 L94.32,568.75 L116.50,557.66 L142.58,548.95 L171.55,542.94 L202.32,539.89 L233.68,539.89 L264.45,542.94 L293.42,548.95 L319.50,557.66 L341.68,568.75 L359.11,581.79 L371.11,596.28 L377.23,611.66 Z" fill="#ff8c00" fill-opacity="0.22"/>
<path d="M377.23,627.34 L371.11,642.72 L359.11,657.21 L341.68,670.25 L319.50,681.34 L293.42,690.05 L264.45,696.06 L233.68,699.11 L202.32,699.11 L171.55,696.06 L142.58,690.05 L116.50,681.34 L94.32,670.25 L76.89,657.21 L64.89,642.72 L58.77,627.34 L58.77,611.66 L64.89,596.28 L76.89,581.79 L94.32,568.75 L116.50,557.66 L142.58,548.95 L171.55,542.94 L202.32,539.89 L233.68,539.89 L264.45,542.94 L293.42,548.95 L319.50,557.66 L341.68,568.75 L359.11,581.79 L371.11,596.28 L377.23,611.66 Z M348.25,625.91 L343.24,638.50 L333.43,650.35 L319.17,661.01 L301.03,670.09 L279.70,677.21 L255.99,682.12 L230.83,684.62 L205.17,684.62 L180.01,682.12 L156.30,677.21 L134.97,670.09 L116.83,661.01 L102.57,650.35 L92.76,638.50 L87.75,625.91 L87.75,613.09 L92.76,600.50 L102.57,588.65 L116.83,577.99 L134.97,568.91 L156.30,561.79 L180.01,556.88 L205.17,554.38 L230.83,554.38 L255.99,556.88 L279.70,561.79 L301.03,568.91 L319.17,577.99 L333.43,588.65 L343.24,600.50 L348.25,613.09 Z M324.52,624.75 L320.43,635.04 L312.40,644.73 L300.74,653.45 L285.91,660.87 L268.46,666.70 L249.07,670.72 L228.49,672.76 L207.51,672.76 L186.93,670.72 L167.54,666.70 L150.09,660.87 L135.26,653.45 L123.60,644.73 L115.57,635.04 L111.48,624.75 L111.48,614.25 L115.57,603.96 L123.60,594.27 L135.26,585.55 L150.09,578.13 L167.54,572.30 L186.93,568.28 L207.51,566.24 L228.49,566.24 L249.07,568.28 L268.46,572.30 L285.91,578.13 L300.74,585.55 L312.40,594.27 L320.43,603.96 L324.52,614.25 Z M303.35,623.70 L300.07,631.95 L293.63,639.71 L284.29,646.70 L272.41,652.65 L258.43,657.32 L242.89,660.53 L226.41,662.17 L209.59,662.17 L193.11,660.53 L177.57,657.32 L163.59,652.65 L151.71,646.70 L142.37,639.71 L135.93,631.95 L132.65,623.70 L132.65,615.30 L135.93,607.05 L142.37,599.29 L151.71,592.30 L163.59,586.35 L177.57,581.68 L193.11,578.47 L209.59,576.83 L226.41,576.83 L242.89,578.47 L258.43,581.68 L272.41,586.35 L284.29,592.30 L293.63,599.29 L300.07,607.05 L303.35,615.30 Z M284.88,622.79 L282.31,629.25 L277.27,635.34 L269.95,640.82 L260.63,645.47 L249.68,649.13 L237.51,651.65 L224.59,652.94 L211.41,652.94 L198.49,651.65 L186.32,649.13 L175.37,645.47 L166.05,640.82 L158.73,635.34 L153.69,629.25 L151.12,622.79 L151.12,616.21 L153.69,609.75 L158.73,603.66 L166.05,598.18 L175.37,593.53 L186.32,589.87 L198.49,587.35 L211.41,586.06 L224.59,586.06 L237.51,587.35 L249.68,589.87 L260.63,593.53 L269.95,598.18 L277.27,603.66 L282.31,609.75 L284.88,616.21 Z M266.41,621.88 L264.55,626.56 L260.90,630.96 L255.60,634.93 L248.86,638.30 L240.93,640.95 L232.12,642.77 L222.77,643.70 L213.23,643.70 L203.88,642.77 L195.07,640.95 L187.14,638.30 L180.40,634.93 L175.10,630.96 L171.45,626.56 L169.59,621.88 L169.59,617.12 L171.45,612.44 L175.10,608.04 L180.40,604.07 L187.14,600.70 L195.07,598.05 L203.88,596.23 L213.23,595.30 L222.77,595.30 L232.12,596.23 L240.93,598.05 L248.86,600.70 L255.60,604.07 L260.90,608.04 L264.55,612.44 L266.41,617.12 Z M250.48,621.10 L249.23,624.24 L246.79,627.19 L243.23,629.85 L238.71,632.12 L233.39,633.89 L227.47,635.12 L221.20,635.74 L214.80,635.74 L208.53,635.12 L202.61,633.89 L197.29,632.12 L192.77,629.85 L189.21,627.19 L186.77,624.24 L185.52,621.10 L185.52,617.90 L186.77,614.76 L189.21,611.81 L192.77,609.15 L197.29,606.88 L202.61,605.11 L208.53,603.88 L214.80,603.26 L221.20,603.26 L227.47,603.88 L233.39,605.11 L238.71,606.88 L243.23,609.15 L246.79,611.81 L249.23,614.76 L250.48,617.90 Z M235.52,620.36 L234.84,622.05 L233.52,623.65 L231.60,625.08 L229.17,626.30 L226.30,627.26 L223.11,627.92 L219.73,628.26 L216.27,628.26 L212.89,627.92 L209.70,627.26 L206.83,626.30 L204.40,625.08 L202.48,623.65 L201.16,622.05 L200.48,620.36 L200.48,618.64 L201.16,616.95 L202.48,615.35 L204.40,613.92 L206.83,612.70 L209.70,611.74 L212.89,611.08 L216.27,610.74 L219.73,610.74 L223.11,611.08 L226.30,611.74 L229.17,612.70 L231.60,613.92 L233.52,615.35 L234.84,616.95 L235.52,618.64 Z M377.23,627.34 L235.52,620.36 M371.11,642.72 L234.84,622.05 M359.11,657.21 L233.52,623.65 M341.68,670.25 L231.60,625.08 M319.50,681.34 L229.17,626.30 M293.42,690.05 L226.30,627.26 M264.45,696.06 L223.11,627.92 M233.68,699.11 L219.73,628.26 M202.32,699.11 L216.27,628.26 M171.55,696.06 L212.89,627.92 M142.58,690.05 L209.70,627.26 M116.50,681.34 L206.83,626.30 M94.32,670.25 L204.40,625.08 M76.89,657.21 L202.48,623.65 M64.89,642.72 L201.16,622.05 M58.77,627.34 L200.48,620.36 M58.77,611.66 L200.48,618.64 M64.89,596.28 L201.16,616.95 M76.89,581.79 L202.48,615.35 M94.32,568.75 L204.40,613.92 M116.50,557.66 L206.83,612.70 M142.58,548.95 L209.70,611.74 M171.55,542.94 L212.89,611.08 M202.32,539.89 L216.27,610.74 M233.68,539.89 L219.73,610.74 M264.45,542.94 L223.11,611.08 M293.42,548.95 L226.30,611.74 M319.50,557.66 L229.17,612.70 M341.68,568.75 L231.60,613.92 M359.11,581.79 L233.52,615.35 M371.11,596.28 L234.84,616.95 M377.23,611.66 L235.52,618.64 M250.00,619.50 L230.80,619.50 M249.85,621.07 L230.74,620.13 M249.39,622.62 L230.55,620.75 M248.62,624.14 L230.25,621.36 M247.56,625.62 L229.83,621.95 M246.22,627.04 L229.29,622.52 M244.61,628.39 L228.64,623.06 M242.74,629.65 L227.89,623.56 M240.63,630.81 L227.05,624.03 M238.30,631.87 L226.12,624.45 M235.78,632.80 L225.11,624.82 M233.08,633.61 L224.03,625.14 M230.25,634.28 L222.90,625.41 M227.29,634.81 L221.72,625.62 M224.24,635.19 L220.50,625.78 M221.14,635.42 L219.25,625.87 M218.00,635.50 L218.00,625.90 M214.86,635.42 L216.75,625.87 M211.76,635.19 L215.50,625.78 M208.71,634.81 L214.28,625.62 M205.75,634.28 L213.10,625.41 M202.92,633.61 L211.97,625.14 M200.22,632.80 L210.89,624.82 M197.70,631.87 L209.88,624.45 M195.37,630.81 L208.95,624.03 M193.26,629.65 L208.11,623.56 M191.39,628.39 L207.36,623.06 M189.78,627.04 L206.71,622.52 M188.44,625.62 L206.17,621.95 M187.38,624.14 L205.75,621.36 M186.61,622.62 L205.45,620.75 M186.15,621.07 L205.26,620.13 M186.00,619.50 L205.20,619.50 M186.15,617.93 L205.26,618.87 M186.61,616.38 L205.45,618.25 M187.38,614.86 L205.75,617.64 M188.44,613.38 L206.17,617.05 M189.78,611.96 L206.71,616.48 M191.39,610.61 L207.36,615.94 M193.26,609.35 L208.11,615.44 M195.37,608.19 L208.95,614.97 M197.70,607.13 L209.88,614.55 M200.22,606.20 L210.89,614.18 M202.92,605.39 L211.97,613.86 M205.75,604.72 L213.10,613.59 M208.71,604.19 L214.28,613.38 M211.76,603.81 L215.50,613.22 M214.86,603.58 L216.75,613.13 M218.00,603.50 L218.00,613.10 M221.14,603.58 L219.25,613.13 M224.24,603.81 L220.50,613.22 M227.29,604.19 L221.72,613.38 M230.25,604.72 L222.90,613.59 M233.08,605.39 L224.03,613.86 M235.78,606.20 L225.11,614.18 M238.30,607.13 L226.12,614.55 M240.63,608.19 L227.05,614.97 M242.74,609.35 L227.89,615.44 M244.61,610.61 L228.64,615.94 M246.22,611.96 L229.29,616.48 M247.56,613.38 L229.83,617.05 M248.62,614.86 L230.25,617.64 M249.39,616.38 L230.55,618.25 M249.85,617.93 L230.74,618.87" fill="none" stroke="#000" stroke-width="2.6" stroke-linejoin="round"/>
<path d="M377.23,627.34 L371.11,642.72 L359.11,657.21 L341.68,670.25 L319.50,681.34 L293.42,690.05 L264.45,696.06 L233.68,699.11 L202.32,699.11 L171.55,696.06 L142.58,690.05 L116.50,681.34 L94.32,670.25 L76.89,657.21 L64.89,642.72 L58.77,627.34 L58.77,611.66 L64.89,596.28 L76.89,581.79 L94.32,568.75 L116.50,557.66 L142.58,548.95 L171.55,542.94 L202.32,539.89 L233.68,539.89 L264.45,542.94 L293.42,548.95 L319.50,557.66 L341.68,568.75 L359.11,581.79 L371.11,596.28 L377.23,611.66 Z M348.25,625.91 L343.24,638.50 L333.43,650.35 L319.17,661.01 L301.03,670.09 L279.70,677.21 L255.99,682.12 L230.83,684.62 L205.17,684.62 L180.01,682.12 L156.30,677.21 L134.97,670.09 L116.83,661.01 L102.57,650.35 L92.76,638.50 L87.75,625.91 L87.75,613.09 L92.76,600.50 L102.57,588.65 L116.83,577.99 L134.97,568.91 L156.30,561.79 L180.01,556.88 L205.17,554.38 L230.83,554.38 L255.99,556.88 L279.70,561.79 L301.03,568.91 L319.17,577.99 L333.43,588.65 L343.24,600.50 L348.25,613.09 Z M324.52,624.75 L320.43,635.04 L312.40,644.73 L300.74,653.45 L285.91,660.87 L268.46,666.70 L249.07,670.72 L228.49,672.76 L207.51,672.76 L186.93,670.72 L167.54,666.70 L150.09,660.87 L135.26,653.45 L123.60,644.73 L115.57,635.04 L111.48,624.75 L111.48,614.25 L115.57,603.96 L123.60,594.27 L135.26,585.55 L150.09,578.13 L167.54,572.30 L186.93,568.28 L207.51,566.24 L228.49,566.24 L249.07,568.28 L268.46,572.30 L285.91,578.13 L300.74,585.55 L312.40,594.27 L320.43,603.96 L324.52,614.25 Z M303.35,623.70 L300.07,631.95 L293.63,639.71 L284.29,646.70 L272.41,652.65 L258.43,657.32 L242.89,660.53 L226.41,662.17 L209.59,662.17 L193.11,660.53 L177.57,657.32 L163.59,652.65 L151.71,646.70 L142.37,639.71 L135.93,631.95 L132.65,623.70 L132.65,615.30 L135.93,607.05 L142.37,599.29 L151.71,592.30 L163.59,586.35 L177.57,581.68 L193.11,578.47 L209.59,576.83 L226.41,576.83 L242.89,578.47 L258.43,581.68 L272.41,586.35 L284.29,592.30 L293.63,599.29 L300.07,607.05 L303.35,615.30 Z M284.88,622.79 L282.31,629.25 L277.27,635.34 L269.95,640.82 L260.63,645.47 L249.68,649.13 L237.51,651.65 L224.59,652.94 L211.41,652.94 L198.49,651.65 L186.32,649.13 L175.37,645.47 L166.05,640.82 L158.73,635.34 L153.69,629.25 L151.12,622.79 L151.12,616.21 L153.69,609.75 L158.73,603.66 L166.05,598.18 L175.37,593.53 L186.32,589.87 L198.49,587.35 L211.41,586.06 L224.59,586.06 L237.51,587.35 L249.68,589.87 L260.63,593.53 L269.95,598.18 L277.27,603.66 L282.31,609.75 L284.88,616.21 Z M266.41,621.88 L264.55,626.56 L260.90,630.96 L255.60,634.93 L248.86,638.30 L240.93,640.95 L232.12,642.77 L222.77,643.70 L213.23,643.70 L203.88,642.77 L195.07,640.95 L187.14,638.30 L180.40,634.93 L175.10,630.96 L171.45,626.56 L169.59,621.88 L169.59,617.12 L171.45,612.44 L175.10,608.04 L180.40,604.07 L187.14,600.70 L195.07,598.05 L203.88,596.23 L213.23,595.30 L222.77,595.30 L232.12,596.23 L240.93,598.05 L248.86,600.70 L255.60,604.07 L260.90,608.04 L264.55,612.44 L266.41,617.12 Z M250.48,621.10 L249.23,624.24 L246.79,627.19 L243.23,629.85 L238.71,632.12 L233.39,633.89 L227.47,635.12 L221.20,635.74 L214.80,635.74 L208.53,635.12 L202.61,633.89 L197.29,632.12 L192.77,629.85 L189.21,627.19 L186.77,624.24 L185.52,621.10 L185.52,617.90 L186.77,614.76 L189.21,611.81 L192.77,609.15 L197.29,606.88 L202.61,605.11 L208.53,603.88 L214.80,603.26 L221.20,603.26 L227.47,603.88 L233.39,605.11 L238.71,606.88 L243.23,609.15 L246.79,611.81 L249.23,614.76 L250.48,617.90 Z M235.52,620.36 L234.84,622.05 L233.52,623.65 L231.60,625.08 L229.17,626.30 L226.30,627.26 L223.11,627.92 L219.73,628.26 L216.27,628.26 L212.89,627.92 L209.70,627.26 L206.83,626.30 L204.40,625.08 L202.48,623.65 L201.16,622.05 L200.48,620.36 L200.48,618.64 L201.16,616.95 L202.48,615.35 L204.40,613.92 L206.83,612.70 L209.70,611.74 L212.89,611.08 L216.27,610.74 L219.73,610.74 L223.11,611.08 L226.30,611.74 L229.17,612.70 L231.60,613.92 L233.52,615.35 L234.84,616.95 L235.52,618.64 Z M377.23,627.34 L235.52,620.36 M371.11,642.72 L234.84,622.05 M359.11,657.21 L233.52,623.65 M341.68,670.25 L231.60,625.08 M319.50,681.34 L229.17,626.30 M293.42,690.05 L226.30,627.26 M264.45,696.06 L223.11,627.92 M233.68,699.11 L219.73,628.26 M202.32,699.11 L216.27,628.26 M171.55,696.06 L212.89,627.92 M142.58,690.05 L209.70,627.26 M116.50,681.34 L206.83,626.30 M94.32,670.25 L204.40,625.08 M76.89,657.21 L202.48,623.65 M64.89,642.72 L201.16,622.05 M58.77,627.34 L200.48,620.36 M58.77,611.66 L200.48,618.64 M64.89,596.28 L201.16,616.95 M76.89,581.79 L202.48,615.35 M94.32,568.75 L204.40,613.92 M116.50,557.66 L206.83,612.70 M142.58,548.95 L209.70,611.74 M171.55,542.94 L212.89,611.08 M202.32,539.89 L216.27,610.74 M233.68,539.89 L219.73,610.74 M264.45,542.94 L223.11,611.08 M293.42,548.95 L226.30,611.74 M319.50,557.66 L229.17,612.70 M341.68,568.75 L231.60,613.92 M359.11,581.79 L233.52,615.35 M371.11,596.28 L234.84,616.95 M377.23,611.66 L235.52,618.64" fill="none" stroke="#ff8a00" stroke-width="1" stroke-linejoin="round"/>
<path d="M250.00,619.50 L230.80,619.50 M249.85,621.07 L230.74,620.13 M249.39,622.62 L230.55,620.75 M248.62,624.14 L230.25,621.36 M247.56,625.62 L229.83,621.95 M246.22,627.04 L229.29,622.52 M244.61,628.39 L228.64,623.06 M242.74,629.65 L227.89,623.56 M240.63,630.81 L227.05,624.03 M238.30,631.87 L226.12,624.45 M235.78,632.80 L225.11,624.82 M233.08,633.61 L224.03,625.14 M230.25,634.28 L222.90,625.41 M227.29,634.81 L221.72,625.62 M224.24,635.19 L220.50,625.78 M221.14,635.42 L219.25,625.87 M218.00,635.50 L218.00,625.90 M214.86,635.42 L216.75,625.87 M211.76,635.19 L215.50,625.78 M208.71,634.81 L214.28,625.62 M205.75,634.28 L213.10,625.41 M202.92,633.61 L211.97,625.14 M200.22,632.80 L210.89,624.82 M197.70,631.87 L209.88,624.45 M195.37,630.81 L208.95,624.03 M193.26,629.65 L208.11,623.56 M191.39,628.39 L207.36,623.06 M189.78,627.04 L206.71,622.52 M188.44,625.62 L206.17,621.95 M187.38,624.14 L205.75,621.36 M186.61,622.62 L205.45,620.75 M186.15,621.07 L205.26,620.13 M186.00,619.50 L205.20,619.50 M186.15,617.93 L205.26,618.87 M186.61,616.38 L205.45,618.25 M187.38,614.86 L205.75,617.64 M188.44,613.38 L206.17,617.05 M189.78,611.96 L206.71,616.48 M191.39,610.61 L207.36,615.94 M193.26,609.35 L208.11,615.44 M195.37,608.19 L208.95,614.97 M197.70,607.13 L209.88,614.55 M200.22,606.20 L210.89,614.18 M202.92,605.39 L211.97,613.86 M205.75,604.72 L213.10,613.59 M208.71,604.19 L214.28,613.38 M211.76,603.81 L215.50,613.22 M214.86,603.58 L216.75,613.13 M218.00,603.50 L218.00,613.10 M221.14,603.58 L219.25,613.13 M224.24,603.81 L220.50,613.22 M227.29,604.19 L221.72,613.38 M230.25,604.72 L222.90,613.59 M233.08,605.39 L224.03,613.86 M235.78,606.20 L225.11,614.18 M238.30,607.13 L226.12,614.55 M240.63,608.19 L227.05,614.97 M242.74,609.35 L227.89,615.44 M244.61,610.61 L228.64,615.94 M246.22,611.96 L229.29,616.48 M247.56,613.38 L229.83,617.05 M248.62,614.86 L230.25,617.64 M249.39,616.38 L230.55,618.25 M249.85,617.93 L230.74,618.87" fill="none" stroke="#ff8a00" stroke-width="0.6"/>
<ellipse cx="218" cy="619.5" rx="13.600000000000001" ry="6.800000000000001" fill="#ff8a00" stroke="#000" stroke-width="1.2"/>
<path d="M229.20,619.50 L224.40,619.50 M228.35,621.64 L223.91,620.72 M225.92,623.46 L222.53,621.76 M222.29,624.67 L220.45,622.46 M218.00,625.10 L218.00,622.70 M213.71,624.67 L215.55,622.46 M210.08,623.46 L213.47,621.76 M207.65,621.64 L212.09,620.72 M206.80,619.50 L211.60,619.50 M207.65,617.36 L212.09,618.28 M210.08,615.54 L213.47,617.24 M213.71,614.33 L215.55,616.54 M218.00,613.90 L218.00,616.30 M222.29,614.33 L220.45,616.54 M225.92,615.54 L222.53,617.24 M228.35,617.36 L223.91,618.28" stroke="#000" stroke-width="0.8"/>
<path d="M375.93,626.04 h2.6 v2.6 h-2.6 Z M369.81,641.42 h2.6 v2.6 h-2.6 Z M357.81,655.91 h2.6 v2.6 h-2.6 Z M340.38,668.95 h2.6 v2.6 h-2.6 Z M318.20,680.04 h2.6 v2.6 h-2.6 Z M292.12,688.75 h2.6 v2.6 h-2.6 Z M263.15,694.76 h2.6 v2.6 h-2.6 Z M232.38,697.81 h2.6 v2.6 h-2.6 Z M201.02,697.81 h2.6 v2.6 h-2.6 Z M170.25,694.76 h2.6 v2.6 h-2.6 Z M141.28,688.75 h2.6 v2.6 h-2.6 Z M115.20,680.04 h2.6 v2.6 h-2.6 Z M93.02,668.95 h2.6 v2.6 h-2.6 Z M75.59,655.91 h2.6 v2.6 h-2.6 Z M63.59,641.42 h2.6 v2.6 h-2.6 Z M57.47,626.04 h2.6 v2.6 h-2.6 Z M57.47,610.36 h2.6 v2.6 h-2.6 Z M63.59,594.98 h2.6 v2.6 h-2.6 Z M75.59,580.49 h2.6 v2.6 h-2.6 Z M93.02,567.45 h2.6 v2.6 h-2.6 Z M115.20,556.36 h2.6 v2.6 h-2.6 Z M141.28,547.65 h2.6 v2.6 h-2.6 Z M170.25,541.64 h2.6 v2.6 h-2.6 Z M201.02,538.59 h2.6 v2.6 h-2.6 Z M232.38,538.59 h2.6 v2.6 h-2.6 Z M263.15,541.64 h2.6 v2.6 h-2.6 Z M292.12,547.65 h2.6 v2.6 h-2.6 Z M318.20,556.36 h2.6 v2.6 h-2.6 Z M340.38,567.45 h2.6 v2.6 h-2.6 Z M357.81,580.49 h2.6 v2.6 h-2.6 Z M369.81,594.98 h2.6 v2.6 h-2.6 Z M375.93,610.36 h2.6 v2.6 h-2.6 Z M346.95,624.61 h2.6 v2.6 h-2.6 Z M341.94,637.20 h2.6 v2.6 h-2.6 Z M332.13,649.05 h2.6 v2.6 h-2.6 Z M317.87,659.71 h2.6 v2.6 h-2.6 Z M299.73,668.79 h2.6 v2.6 h-2.6 Z M278.40,675.91 h2.6 v2.6 h-2.6 Z M254.69,680.82 h2.6 v2.6 h-2.6 Z M229.53,683.32 h2.6 v2.6 h-2.6 Z M203.87,683.32 h2.6 v2.6 h-2.6 Z M178.71,680.82 h2.6 v2.6 h-2.6 Z M155.00,675.91 h2.6 v2.6 h-2.6 Z M133.67,668.79 h2.6 v2.6 h-2.6 Z M115.53,659.71 h2.6 v2.6 h-2.6 Z M101.27,649.05 h2.6 v2.6 h-2.6 Z M91.46,637.20 h2.6 v2.6 h-2.6 Z M86.45,624.61 h2.6 v2.6 h-2.6 Z M86.45,611.79 h2.6 v2.6 h-2.6 Z M91.46,599.20 h2.6 v2.6 h-2.6 Z M101.27,587.35 h2.6 v2.6 h-2.6 Z M115.53,576.69 h2.6 v2.6 h-2.6 Z M133.67,567.61 h2.6 v2.6 h-2.6 Z M155.00,560.49 h2.6 v2.6 h-2.6 Z M178.71,555.58 h2.6 v2.6 h-2.6 Z M203.87,553.08 h2.6 v2.6 h-2.6 Z M229.53,553.08 h2.6 v2.6 h-2.6 Z M254.69,555.58 h2.6 v2.6 h-2.6 Z M278.40,560.49 h2.6 v2.6 h-2.6 Z M299.73,567.61 h2.6 v2.6 h-2.6 Z M317.87,576.69 h2.6 v2.6 h-2.6 Z M332.13,587.35 h2.6 v2.6 h-2.6 Z M341.94,599.20 h2.6 v2.6 h-2.6 Z M346.95,611.79 h2.6 v2.6 h-2.6 Z M323.22,623.45 h2.6 v2.6 h-2.6 Z M319.13,633.74 h2.6 v2.6 h-2.6 Z M311.10,643.43 h2.6 v2.6 h-2.6 Z M299.44,652.15 h2.6 v2.6 h-2.6 Z M284.61,659.57 h2.6 v2.6 h-2.6 Z M267.16,665.40 h2.6 v2.6 h-2.6 Z M247.77,669.42 h2.6 v2.6 h-2.6 Z M227.19,671.46 h2.6 v2.6 h-2.6 Z M206.21,671.46 h2.6 v2.6 h-2.6 Z M185.63,669.42 h2.6 v2.6 h-2.6 Z M166.24,665.40 h2.6 v2.6 h-2.6 Z M148.79,659.57 h2.6 v2.6 h-2.6 Z M133.96,652.15 h2.6 v2.6 h-2.6 Z M122.30,643.43 h2.6 v2.6 h-2.6 Z M114.27,633.74 h2.6 v2.6 h-2.6 Z M110.18,623.45 h2.6 v2.6 h-2.6 Z M110.18,612.95 h2.6 v2.6 h-2.6 Z M114.27,602.66 h2.6 v2.6 h-2.6 Z M122.30,592.97 h2.6 v2.6 h-2.6 Z M133.96,584.25 h2.6 v2.6 h-2.6 Z M148.79,576.83 h2.6 v2.6 h-2.6 Z M166.24,571.00 h2.6 v2.6 h-2.6 Z M185.63,566.98 h2.6 v2.6 h-2.6 Z M206.21,564.94 h2.6 v2.6 h-2.6 Z M227.19,564.94 h2.6 v2.6 h-2.6 Z M247.77,566.98 h2.6 v2.6 h-2.6 Z M267.16,571.00 h2.6 v2.6 h-2.6 Z M284.61,576.83 h2.6 v2.6 h-2.6 Z M299.44,584.25 h2.6 v2.6 h-2.6 Z M311.10,592.97 h2.6 v2.6 h-2.6 Z M319.13,602.66 h2.6 v2.6 h-2.6 Z M323.22,612.95 h2.6 v2.6 h-2.6 Z M302.05,622.40 h2.6 v2.6 h-2.6 Z M298.77,630.65 h2.6 v2.6 h-2.6 Z M292.33,638.41 h2.6 v2.6 h-2.6 Z M282.99,645.40 h2.6 v2.6 h-2.6 Z M271.11,651.35 h2.6 v2.6 h-2.6 Z M257.13,656.02 h2.6 v2.6 h-2.6 Z M241.59,659.23 h2.6 v2.6 h-2.6 Z M225.11,660.87 h2.6 v2.6 h-2.6 Z M208.29,660.87 h2.6 v2.6 h-2.6 Z M191.81,659.23 h2.6 v2.6 h-2.6 Z M176.27,656.02 h2.6 v2.6 h-2.6 Z M162.29,651.35 h2.6 v2.6 h-2.6 Z M150.41,645.40 h2.6 v2.6 h-2.6 Z M141.07,638.41 h2.6 v2.6 h-2.6 Z M134.63,630.65 h2.6 v2.6 h-2.6 Z M131.35,622.40 h2.6 v2.6 h-2.6 Z M131.35,614.00 h2.6 v2.6 h-2.6 Z M134.63,605.75 h2.6 v2.6 h-2.6 Z M141.07,597.99 h2.6 v2.6 h-2.6 Z M150.41,591.00 h2.6 v2.6 h-2.6 Z M162.29,585.05 h2.6 v2.6 h-2.6 Z M176.27,580.38 h2.6 v2.6 h-2.6 Z M191.81,577.17 h2.6 v2.6 h-2.6 Z M208.29,575.53 h2.6 v2.6 h-2.6 Z M225.11,575.53 h2.6 v2.6 h-2.6 Z M241.59,577.17 h2.6 v2.6 h-2.6 Z M257.13,580.38 h2.6 v2.6 h-2.6 Z M271.11,585.05 h2.6 v2.6 h-2.6 Z M282.99,591.00 h2.6 v2.6 h-2.6 Z M292.33,597.99 h2.6 v2.6 h-2.6 Z M298.77,605.75 h2.6 v2.6 h-2.6 Z M302.05,614.00 h2.6 v2.6 h-2.6 Z M283.58,621.49 h2.6 v2.6 h-2.6 Z M281.01,627.95 h2.6 v2.6 h-2.6 Z M275.97,634.04 h2.6 v2.6 h-2.6 Z M268.65,639.52 h2.6 v2.6 h-2.6 Z M259.33,644.17 h2.6 v2.6 h-2.6 Z M248.38,647.83 h2.6 v2.6 h-2.6 Z M236.21,650.35 h2.6 v2.6 h-2.6 Z M223.29,651.64 h2.6 v2.6 h-2.6 Z M210.11,651.64 h2.6 v2.6 h-2.6 Z M197.19,650.35 h2.6 v2.6 h-2.6 Z M185.02,647.83 h2.6 v2.6 h-2.6 Z M174.07,644.17 h2.6 v2.6 h-2.6 Z M164.75,639.52 h2.6 v2.6 h-2.6 Z M157.43,634.04 h2.6 v2.6 h-2.6 Z M152.39,627.95 h2.6 v2.6 h-2.6 Z M149.82,621.49 h2.6 v2.6 h-2.6 Z M149.82,614.91 h2.6 v2.6 h-2.6 Z M152.39,608.45 h2.6 v2.6 h-2.6 Z M157.43,602.36 h2.6 v2.6 h-2.6 Z M164.75,596.88 h2.6 v2.6 h-2.6 Z M174.07,592.23 h2.6 v2.6 h-2.6 Z M185.02,588.57 h2.6 v2.6 h-2.6 Z M197.19,586.05 h2.6 v2.6 h-2.6 Z M210.11,584.76 h2.6 v2.6 h-2.6 Z M223.29,584.76 h2.6 v2.6 h-2.6 Z M236.21,586.05 h2.6 v2.6 h-2.6 Z M248.38,588.57 h2.6 v2.6 h-2.6 Z M259.33,592.23 h2.6 v2.6 h-2.6 Z M268.65,596.88 h2.6 v2.6 h-2.6 Z M275.97,602.36 h2.6 v2.6 h-2.6 Z M281.01,608.45 h2.6 v2.6 h-2.6 Z M283.58,614.91 h2.6 v2.6 h-2.6 Z M265.11,620.58 h2.6 v2.6 h-2.6 Z M263.25,625.26 h2.6 v2.6 h-2.6 Z M259.60,629.66 h2.6 v2.6 h-2.6 Z M254.30,633.63 h2.6 v2.6 h-2.6 Z M247.56,637.00 h2.6 v2.6 h-2.6 Z M239.63,639.65 h2.6 v2.6 h-2.6 Z M230.82,641.47 h2.6 v2.6 h-2.6 Z M221.47,642.40 h2.6 v2.6 h-2.6 Z M211.93,642.40 h2.6 v2.6 h-2.6 Z M202.58,641.47 h2.6 v2.6 h-2.6 Z M193.77,639.65 h2.6 v2.6 h-2.6 Z M185.84,637.00 h2.6 v2.6 h-2.6 Z M179.10,633.63 h2.6 v2.6 h-2.6 Z M173.80,629.66 h2.6 v2.6 h-2.6 Z M170.15,625.26 h2.6 v2.6 h-2.6 Z M168.29,620.58 h2.6 v2.6 h-2.6 Z M168.29,615.82 h2.6 v2.6 h-2.6 Z M170.15,611.14 h2.6 v2.6 h-2.6 Z M173.80,606.74 h2.6 v2.6 h-2.6 Z M179.10,602.77 h2.6 v2.6 h-2.6 Z M185.84,599.40 h2.6 v2.6 h-2.6 Z M193.77,596.75 h2.6 v2.6 h-2.6 Z M202.58,594.93 h2.6 v2.6 h-2.6 Z M211.93,594.00 h2.6 v2.6 h-2.6 Z M221.47,594.00 h2.6 v2.6 h-2.6 Z M230.82,594.93 h2.6 v2.6 h-2.6 Z M239.63,596.75 h2.6 v2.6 h-2.6 Z M247.56,599.40 h2.6 v2.6 h-2.6 Z M254.30,602.77 h2.6 v2.6 h-2.6 Z M259.60,606.74 h2.6 v2.6 h-2.6 Z M263.25,611.14 h2.6 v2.6 h-2.6 Z M265.11,615.82 h2.6 v2.6 h-2.6 Z M249.18,619.80 h2.6 v2.6 h-2.6 Z M247.93,622.94 h2.6 v2.6 h-2.6 Z M245.49,625.89 h2.6 v2.6 h-2.6 Z M241.93,628.55 h2.6 v2.6 h-2.6 Z M237.41,630.82 h2.6 v2.6 h-2.6 Z M232.09,632.59 h2.6 v2.6 h-2.6 Z M226.17,633.82 h2.6 v2.6 h-2.6 Z M219.90,634.44 h2.6 v2.6 h-2.6 Z M213.50,634.44 h2.6 v2.6 h-2.6 Z M207.23,633.82 h2.6 v2.6 h-2.6 Z M201.31,632.59 h2.6 v2.6 h-2.6 Z M195.99,630.82 h2.6 v2.6 h-2.6 Z M191.47,628.55 h2.6 v2.6 h-2.6 Z M187.91,625.89 h2.6 v2.6 h-2.6 Z M185.47,622.94 h2.6 v2.6 h-2.6 Z M184.22,619.80 h2.6 v2.6 h-2.6 Z M184.22,616.60 h2.6 v2.6 h-2.6 Z M185.47,613.46 h2.6 v2.6 h-2.6 Z M187.91,610.51 h2.6 v2.6 h-2.6 Z M191.47,607.85 h2.6 v2.6 h-2.6 Z M195.99,605.58 h2.6 v2.6 h-2.6 Z M201.31,603.81 h2.6 v2.6 h-2.6 Z M207.23,602.58 h2.6 v2.6 h-2.6 Z M213.50,601.96 h2.6 v2.6 h-2.6 Z M219.90,601.96 h2.6 v2.6 h-2.6 Z M226.17,602.58 h2.6 v2.6 h-2.6 Z M232.09,603.81 h2.6 v2.6 h-2.6 Z M237.41,605.58 h2.6 v2.6 h-2.6 Z M241.93,607.85 h2.6 v2.6 h-2.6 Z M245.49,610.51 h2.6 v2.6 h-2.6 Z M247.93,613.46 h2.6 v2.6 h-2.6 Z M249.18,616.60 h2.6 v2.6 h-2.6 Z M234.22,619.06 h2.6 v2.6 h-2.6 Z M233.54,620.75 h2.6 v2.6 h-2.6 Z M232.22,622.35 h2.6 v2.6 h-2.6 Z M230.30,623.78 h2.6 v2.6 h-2.6 Z M227.87,625.00 h2.6 v2.6 h-2.6 Z M225.00,625.96 h2.6 v2.6 h-2.6 Z M221.81,626.62 h2.6 v2.6 h-2.6 Z M218.43,626.96 h2.6 v2.6 h-2.6 Z M214.97,626.96 h2.6 v2.6 h-2.6 Z M211.59,626.62 h2.6 v2.6 h-2.6 Z M208.40,625.96 h2.6 v2.6 h-2.6 Z M205.53,625.00 h2.6 v2.6 h-2.6 Z M203.10,623.78 h2.6 v2.6 h-2.6 Z M201.18,622.35 h2.6 v2.6 h-2.6 Z M199.86,620.75 h2.6 v2.6 h-2.6 Z M199.18,619.06 h2.6 v2.6 h-2.6 Z M199.18,617.34 h2.6 v2.6 h-2.6 Z M199.86,615.65 h2.6 v2.6 h-2.6 Z M201.18,614.05 h2.6 v2.6 h-2.6 Z M203.10,612.62 h2.6 v2.6 h-2.6 Z M205.53,611.40 h2.6 v2.6 h-2.6 Z M208.40,610.44 h2.6 v2.6 h-2.6 Z M211.59,609.78 h2.6 v2.6 h-2.6 Z M214.97,609.44 h2.6 v2.6 h-2.6 Z M218.43,609.44 h2.6 v2.6 h-2.6 Z M221.81,609.78 h2.6 v2.6 h-2.6 Z M225.00,610.44 h2.6 v2.6 h-2.6 Z M227.87,611.40 h2.6 v2.6 h-2.6 Z M230.30,612.62 h2.6 v2.6 h-2.6 Z M232.22,614.05 h2.6 v2.6 h-2.6 Z M233.54,615.65 h2.6 v2.6 h-2.6 Z M234.22,617.34 h2.6 v2.6 h-2.6 Z" fill="#ff8a00"/>
</g>
<path d="M480.5,512.0 L493.0,524.5 L480.5,537.0 L468.0,524.5 Z" fill="none" stroke="#ffffff" stroke-width="1"/>
<path d="M480.5,512.0 L493.0,524.5 L480.5,537.0 L468.0,524.5 Z" fill="none" stroke="#ff1010" stroke-width="1" stroke-dasharray="4.4,4.4" stroke-dashoffset="2.2"/>
<path d="M453.5,525.0 H474.5 M485.5,525.0 H506.5 M481.0,498.5 V519.5 M481.0,529.5 V550.5" stroke="#ffffff" stroke-width="1"/>
<path d="M453.5,525.0 H474.5 M485.5,525.0 H506.5 M481.0,498.5 V519.5 M481.0,529.5 V550.5" stroke="#000000" stroke-width="1.2" stroke-dasharray="1.3,0.7"/>
<rect x="0" y="27" width="1" height="1026" fill="#4e4e4e" />
<path d="M1,49.5 h8 a4,4 0 0 1 4,4 v6 a4,4 0 0 1 -4,4 h-8 Z" fill="#2a2a2a"/>
<path d="M3,57 h6 M6,54 v6" stroke="#8a8a8a" stroke-width="2.2"/>
<g>
<clipPath id="clip3d"><rect x="1137" y="28" width="783" height="1026"/></clipPath>
<g clip-path="url(#clip3d)">
<path d="M694.94,407.38 L1702.99,333.10 M694.94,407.38 L-38049.33,10540.16 M623.34,426.11 L1733.81,337.84 M803.67,399.37 L-31914.17,10463.43 M530.39,450.41 L1769.10,343.26 M902.37,392.10 L-25779.01,10386.69 M404.89,483.24 L1809.90,349.53 M992.36,385.46 L-19643.85,10309.96 M226.11,529.99 L1857.61,356.87 M1074.74,379.39 L-13508.70,10233.22 M-49.05,601.96 L1914.17,365.56 M1150.44,373.82 L-7373.54,10156.49 M-527.28,727.03 L1982.27,376.03 M1220.25,368.67 L-1238.38,10079.75 M-1564.78,998.37 L2065.85,388.88 M1284.81,363.91 L4896.78,10003.02 M-32339.25,10468.74 L2306.80,425.92 M1400.44,355.39 L17167.10,9849.54 M-18487.44,10295.49 L2489.63,454.03 M1452.40,351.56 L23302.26,9772.81 M-4635.62,10122.24 L2748.69,493.85 M1500.98,347.99 L29437.42,9696.07 M9216.19,9948.99 L3144.21,554.65 M1546.48,344.63 L35572.58,9619.34 M23068.01,9775.74 L3822.56,658.94 M1589.20,341.48 L41707.73,9542.60 M36919.82,9602.49 L5256.01,879.30 M1629.39,338.52 L47842.89,9465.87 M50771.64,9429.24 L10287.66,1652.80 M1667.25,335.73 L53978.05,9389.13 M1702.99,333.10 L60113.21,9312.40" stroke="#4a4a4a" stroke-width="1" fill="none"/>
<line x1="1344.72" y1="359.50" x2="11031.94" y2="9926.28" stroke="#8c2020" stroke-width="1"/>
<line x1="-5524.26" y1="2033.89" x2="2170.88" y2="405.03" stroke="#1e9a1e" stroke-width="1"/>
<path d="M1372.49,604.59 L1382.40,621.24 L1396.19,645.32 L1386.56,629.11 Z" fill="#7f6950" stroke="#7f6950" stroke-width="0.6"/><path d="M1396.19,645.32 L1412.76,660.56 L1429.24,677.18 L1414.34,663.43 Z" fill="#725d47" stroke="#725d47" stroke-width="0.6"/><path d="M1558.65,375.92 L1554.96,374.86 L1580.38,381.17 L1587.87,383.30 Z" fill="#957b5f" stroke="#957b5f" stroke-width="0.6"/><path d="M1430.46,403.94 L1426.03,408.49 L1400.96,431.17 L1407.41,424.66 Z" fill="#aa8d6d" stroke="#aa8d6d" stroke-width="0.6"/><path d="M1382.12,457.59 L1379.02,466.89 L1366.04,497.88 L1370.04,486.27 Z" fill="#a48869" stroke="#a48869" stroke-width="0.6"/><path d="M1496.89,375.84 L1493.50,377.03 L1463.67,385.46 L1470.63,383.06 Z" fill="#a68a6a" stroke="#a68a6a" stroke-width="0.6"/><path d="M1592.45,694.48 L1616.42,684.15 L1600.09,692.74 L1580.47,701.23 Z" fill="#6b5742" stroke="#6b5742" stroke-width="0.6"/><path d="M1360.39,529.39 L1362.68,543.77 L1364.20,575.78 L1361.85,559.87 Z" fill="#967c5f" stroke="#967c5f" stroke-width="0.6"/><path d="M1449.74,688.98 L1475.05,697.93 L1485.94,704.03 L1465.30,696.69 Z" fill="#6b5742" stroke="#6b5742" stroke-width="0.6"/><path d="M1655.27,433.17 L1652.01,426.39 L1671.11,451.80 L1675.78,460.84 Z" fill="#766049" stroke="#766049" stroke-width="0.6"/><path d="M1596.51,388.48 L1593.35,385.76 L1621.44,400.50 L1626.83,404.84 Z" fill="#8b7358" stroke="#8b7358" stroke-width="0.6"/><path d="M1561.19,377.12 L1558.65,375.92 L1587.87,383.30 L1593.35,385.76 Z" fill="#957b5f" stroke="#957b5f" stroke-width="0.6"/><path d="M1687.13,583.95 L1694.77,567.65 L1687.25,596.50 L1679.62,613.41 Z" fill="#6b5742" stroke="#6b5742" stroke-width="0.6"/><path d="M1688.84,503.02 L1689.33,490.90 L1695.67,521.75 L1695.50,536.00 Z" fill="#6b5742" stroke="#6b5742" stroke-width="0.6"/><path d="M1526.43,375.39 L1526.43,375.39 L1525.57,372.56 L1532.24,372.56 Z" fill="#a08566" stroke="#a08566" stroke-width="0.6"/><path d="M1526.43,375.39 L1526.43,375.39 L1518.93,372.79 L1525.57,372.56 Z" fill="#a08567" stroke="#a08567" stroke-width="0.6"/><path d="M1493.50,377.03 L1491.29,378.31 L1458.79,388.11 L1463.67,385.46 Z" fill="#a78b6c" stroke="#a78b6c" stroke-width="0.6"/><path d="M1526.43,375.39 L1526.43,375.39 L1532.24,372.56 L1538.72,372.80 Z" fill="#9f8466" stroke="#9f8466" stroke-width="0.6"/><path d="M1526.43,375.39 L1526.43,375.39 L1512.53,373.25 L1518.93,372.79 Z" fill="#a18667" stroke="#a18667" stroke-width="0.6"/><path d="M1458.79,388.11 L1456.33,390.94 L1426.03,408.49 L1430.46,403.94 Z" fill="#aa8e6e" stroke="#aa8e6e" stroke-width="0.6"/><path d="M1564.53,701.46 L1592.45,694.48 L1580.47,701.23 L1557.90,706.92 Z" fill="#6b5742" stroke="#6b5742" stroke-width="0.6"/><path d="M1526.43,375.39 L1526.43,375.39 L1538.72,372.80 L1544.81,373.28 Z" fill="#9f8466" stroke="#9f8466" stroke-width="0.6"/><path d="M1400.96,431.17 L1399.06,438.12 L1379.02,466.89 L1382.12,457.59 Z" fill="#a98d6d" stroke="#a98d6d" stroke-width="0.6"/><path d="M1526.43,375.39 L1526.43,375.39 L1506.59,373.92 L1512.53,373.25 Z" fill="#a28668" stroke="#a28668" stroke-width="0.6"/><path d="M1526.43,375.39 L1526.43,375.39 L1544.81,373.28 L1550.28,373.97 Z" fill="#9e8365" stroke="#9e8365" stroke-width="0.6"/><path d="M1475.05,697.93 L1503.84,703.26 L1509.16,708.37 L1485.94,704.03 Z" fill="#6b5742" stroke="#6b5742" stroke-width="0.6"/><path d="M1526.43,375.39 L1526.43,375.39 L1501.31,374.80 L1506.59,373.92 Z" fill="#a38768" stroke="#a38768" stroke-width="0.6"/><path d="M1630.46,668.24 L1651.84,653.89 L1635.27,671.30 L1616.42,684.15 Z" fill="#6b5742" stroke="#6b5742" stroke-width="0.6"/><path d="M1628.61,409.53 L1626.83,404.84 L1652.01,426.39 L1655.27,433.17 Z" fill="#826b52" stroke="#826b52" stroke-width="0.6"/><path d="M1526.43,375.39 L1526.43,375.39 L1550.28,373.97 L1554.96,374.86 Z" fill="#9e8365" stroke="#9e8365" stroke-width="0.6"/><path d="M1364.20,575.78 L1374.22,591.83 L1382.40,621.24 L1372.49,604.59 Z" fill="#8c7358" stroke="#8c7358" stroke-width="0.6"/><path d="M1526.43,375.39 L1526.43,375.39 L1496.89,375.84 L1501.31,374.80 Z" fill="#a38869" stroke="#a38869" stroke-width="0.6"/><path d="M1664.26,629.90 L1679.62,613.41 L1666.30,637.95 L1651.84,653.89 Z" fill="#6b5742" stroke="#6b5742" stroke-width="0.6"/><path d="M1366.04,497.88 L1368.54,510.09 L1362.68,543.77 L1360.39,529.39 Z" fill="#9f8466" stroke="#9f8466" stroke-width="0.6"/><path d="M1562.46,378.42 L1561.19,377.12 L1593.35,385.76 L1596.51,388.48 Z" fill="#967c5f" stroke="#967c5f" stroke-width="0.6"/><path d="M1534.34,704.48 L1564.53,701.46 L1557.90,706.92 L1533.65,709.36 Z" fill="#6b5742" stroke="#6b5742" stroke-width="0.6"/><path d="M1503.84,703.26 L1534.34,704.48 L1533.65,709.36 L1509.16,708.37 Z" fill="#6b5742" stroke="#6b5742" stroke-width="0.6"/><path d="M1526.43,375.39 L1526.43,375.39 L1554.96,374.86 L1558.65,375.92 Z" fill="#9e8365" stroke="#9e8365" stroke-width="0.6"/><path d="M1412.76,660.56 L1436.12,673.76 L1449.74,688.98 L1429.24,677.18 Z" fill="#705b45" stroke="#705b45" stroke-width="0.6"/><path d="M1526.43,375.39 L1526.43,375.39 L1493.50,377.03 L1496.89,375.84 Z" fill="#a48869" stroke="#a48869" stroke-width="0.6"/><path d="M1491.29,378.31 L1490.39,379.65 L1456.33,390.94 L1458.79,388.11 Z" fill="#a98d6c" stroke="#a98d6c" stroke-width="0.6"/><path d="M1426.03,408.49 L1425.33,413.27 L1399.06,438.12 L1400.96,431.17 Z" fill="#ac8f6f" stroke="#ac8f6f" stroke-width="0.6"/><path d="M1526.43,375.39 L1526.43,375.39 L1558.65,375.92 L1561.19,377.12 Z" fill="#9e8365" stroke="#9e8365" stroke-width="0.6"/><path d="M1674.68,470.49 L1675.78,460.84 L1689.33,490.90 L1688.84,503.02 Z" fill="#6d5944" stroke="#6d5944" stroke-width="0.6"/><path d="M1526.43,375.39 L1526.43,375.39 L1491.29,378.31 L1493.50,377.03 Z" fill="#a48969" stroke="#a48969" stroke-width="0.6"/><path d="M1382.40,621.24 L1400.11,637.02 L1412.76,660.56 L1396.19,645.32 Z" fill="#7f6850" stroke="#7f6850" stroke-width="0.6"/><path d="M1597.07,391.36 L1596.51,388.48 L1626.83,404.84 L1628.61,409.53 Z" fill="#8d7459" stroke="#8d7459" stroke-width="0.6"/><path d="M1526.43,375.39 L1526.43,375.39 L1561.19,377.12 L1562.46,378.42 Z" fill="#9e8365" stroke="#9e8365" stroke-width="0.6"/><path d="M1526.43,375.39 L1526.43,375.39 L1490.39,379.65 L1491.29,378.31 Z" fill="#a5896a" stroke="#a5896a" stroke-width="0.6"/><path d="M1687.84,550.74 L1695.50,536.00 L1694.77,567.65 L1687.13,583.95 Z" fill="#6b5742" stroke="#6b5742" stroke-width="0.6"/><path d="M1456.33,390.94 L1456.52,393.84 L1425.33,413.27 L1426.03,408.49 Z" fill="#ac8f6f" stroke="#ac8f6f" stroke-width="0.6"/><path d="M1562.35,379.77 L1562.46,378.42 L1596.51,388.48 L1597.07,391.36 Z" fill="#977d60" stroke="#977d60" stroke-width="0.6"/><path d="M1526.43,375.39 L1526.43,375.39 L1562.46,378.42 L1562.35,379.77 Z" fill="#9f8466" stroke="#9f8466" stroke-width="0.6"/><path d="M1526.43,375.39 L1526.43,375.39 L1490.87,381.00 L1490.39,379.65 Z" fill="#a5896a" stroke="#a5896a" stroke-width="0.6"/><path d="M1379.02,466.89 L1381.92,476.57 L1368.54,510.09 L1366.04,497.88 Z" fill="#a68a6a" stroke="#a68a6a" stroke-width="0.6"/><path d="M1490.39,379.65 L1490.87,381.00 L1456.52,393.84 L1456.33,390.94 Z" fill="#aa8d6d" stroke="#aa8d6d" stroke-width="0.6"/><path d="M1653.50,440.33 L1655.27,433.17 L1675.78,460.84 L1674.68,470.49 Z" fill="#79634c" stroke="#79634c" stroke-width="0.6"/><path d="M1526.43,375.39 L1526.43,375.39 L1562.35,379.77 L1560.84,381.13 Z" fill="#9f8466" stroke="#9f8466" stroke-width="0.6"/><path d="M1602.80,679.89 L1630.46,668.24 L1616.42,684.15 L1592.45,694.48 Z" fill="#6b5742" stroke="#6b5742" stroke-width="0.6"/><path d="M1526.43,375.39 L1526.43,375.39 L1492.77,382.30 L1490.87,381.00 Z" fill="#a58a6a" stroke="#a58a6a" stroke-width="0.6"/><path d="M1362.68,543.77 L1372.69,558.28 L1374.22,591.83 L1364.20,575.78 Z" fill="#967d60" stroke="#967d60" stroke-width="0.6"/><path d="M1526.43,375.39 L1526.43,375.39 L1560.84,381.13 L1557.93,382.43 Z" fill="#a08566" stroke="#a08566" stroke-width="0.6"/><path d="M1436.12,673.76 L1465.40,683.85 L1475.05,697.93 L1449.74,688.98 Z" fill="#6d5943" stroke="#6d5943" stroke-width="0.6"/><path d="M1526.43,375.39 L1526.43,375.39 L1496.04,383.50 L1492.77,382.30 Z" fill="#a68a6a" stroke="#a68a6a" stroke-width="0.6"/><path d="M1626.35,414.41 L1628.61,409.53 L1655.27,433.17 L1653.50,440.33 Z" fill="#856d54" stroke="#856d54" stroke-width="0.6"/><path d="M1560.84,381.13 L1562.35,379.77 L1597.07,391.36 L1594.83,394.31 Z" fill="#987e61" stroke="#987e61" stroke-width="0.6"/><path d="M1526.43,375.39 L1526.43,375.39 L1557.93,382.43 L1553.71,383.63 Z" fill="#a08567" stroke="#a08567" stroke-width="0.6"/><path d="M1399.06,438.12 L1402.35,445.25 L1381.92,476.57 L1379.02,466.89 Z" fill="#ab8e6e" stroke="#ab8e6e" stroke-width="0.6"/><path d="M1671.30,599.91 L1687.13,583.95 L1679.62,613.41 L1664.26,629.90 Z" fill="#6b5742" stroke="#6b5742" stroke-width="0.6"/><path d="M1526.43,375.39 L1526.43,375.39 L1500.60,384.55 L1496.04,383.50 Z" fill="#a58a6a" stroke="#a58a6a" stroke-width="0.6"/><path d="M1594.83,394.31 L1597.07,391.36 L1628.61,409.53 L1626.35,414.41 Z" fill="#8f765b" stroke="#8f765b" stroke-width="0.6"/><path d="M1490.87,381.00 L1492.77,382.30 L1459.54,396.71 L1456.52,393.84 Z" fill="#ab8e6e" stroke="#ab8e6e" stroke-width="0.6"/><path d="M1526.43,375.39 L1526.43,375.39 L1553.71,383.63 L1548.32,384.65 Z" fill="#a18667" stroke="#a18667" stroke-width="0.6"/><path d="M1681.14,515.52 L1688.84,503.02 L1695.50,536.00 L1687.84,550.74 Z" fill="#6b5742" stroke="#6b5742" stroke-width="0.6"/><path d="M1641.06,644.85 L1664.26,629.90 L1651.84,653.89 L1630.46,668.24 Z" fill="#6b5742" stroke="#6b5742" stroke-width="0.6"/><path d="M1526.43,375.39 L1526.43,375.39 L1506.27,385.38 L1500.60,384.55 Z" fill="#a5896a" stroke="#a5896a" stroke-width="0.6"/><path d="M1526.43,375.39 L1526.43,375.39 L1548.32,384.65 L1541.96,385.47 Z" fill="#a28668" stroke="#a28668" stroke-width="0.6"/><path d="M1425.33,413.27 L1428.76,418.08 L1402.35,445.25 L1399.06,438.12 Z" fill="#ad9070" stroke="#ad9070" stroke-width="0.6"/><path d="M1526.43,375.39 L1526.43,375.39 L1512.84,385.97 L1506.27,385.38 Z" fill="#a5896a" stroke="#a5896a" stroke-width="0.6"/><path d="M1456.52,393.84 L1459.54,396.71 L1428.76,418.08 L1425.33,413.27 Z" fill="#ad906f" stroke="#ad906f" stroke-width="0.6"/><path d="M1526.43,375.39 L1526.43,375.39 L1541.96,385.47 L1534.92,386.03 Z" fill="#a38768" stroke="#a38768" stroke-width="0.6"/><path d="M1526.43,375.39 L1526.43,375.39 L1520.02,386.29 L1512.84,385.97 Z" fill="#a48969" stroke="#a48969" stroke-width="0.6"/><path d="M1526.43,375.39 L1526.43,375.39 L1534.92,386.03 L1527.49,386.30 Z" fill="#a38869" stroke="#a38869" stroke-width="0.6"/><path d="M1526.43,375.39 L1526.43,375.39 L1527.49,386.30 L1520.02,386.29 Z" fill="#a48869" stroke="#a48869" stroke-width="0.6"/><path d="M1570.25,687.82 L1602.80,679.89 L1592.45,694.48 L1564.53,701.46 Z" fill="#6b5742" stroke="#6b5742" stroke-width="0.6"/><path d="M1374.22,591.83 L1392.53,607.10 L1400.11,637.02 L1382.40,621.24 Z" fill="#8b7358" stroke="#8b7358" stroke-width="0.6"/><path d="M1400.11,637.02 L1425.54,650.78 L1436.12,673.76 L1412.76,660.56 Z" fill="#7d664e" stroke="#7d664e" stroke-width="0.6"/><path d="M1465.40,683.85 L1499.04,689.89 L1503.84,703.26 L1475.05,697.93 Z" fill="#6b5742" stroke="#6b5742" stroke-width="0.6"/><path d="M1557.93,382.43 L1560.84,381.13 L1594.83,394.31 L1589.70,397.20 Z" fill="#9a7f62" stroke="#9a7f62" stroke-width="0.6"/><path d="M1368.54,510.09 L1378.44,522.34 L1372.69,558.28 L1362.68,543.77 Z" fill="#a08466" stroke="#a08466" stroke-width="0.6"/><path d="M1492.77,382.30 L1496.04,383.50 L1465.44,399.42 L1459.54,396.71 Z" fill="#ab8e6e" stroke="#ab8e6e" stroke-width="0.6"/><path d="M1667.03,480.37 L1674.68,470.49 L1688.84,503.02 L1681.14,515.52 Z" fill="#735e47" stroke="#735e47" stroke-width="0.6"/><path d="M1534.83,691.27 L1570.25,687.82 L1564.53,701.46 L1534.34,704.48 Z" fill="#6b5742" stroke="#6b5742" stroke-width="0.6"/><path d="M1499.04,689.89 L1534.83,691.27 L1534.34,704.48 L1503.84,703.26 Z" fill="#6b5742" stroke="#6b5742" stroke-width="0.6"/><path d="M1589.70,397.20 L1594.83,394.31 L1626.35,414.41 L1619.77,419.28 Z" fill="#92795d" stroke="#92795d" stroke-width="0.6"/><path d="M1553.71,383.63 L1557.93,382.43 L1589.70,397.20 L1581.75,399.89 Z" fill="#9c8163" stroke="#9c8163" stroke-width="0.6"/><path d="M1671.92,565.21 L1687.84,550.74 L1687.13,583.95 L1671.30,599.91 Z" fill="#6b5742" stroke="#6b5742" stroke-width="0.6"/><path d="M1646.14,447.58 L1653.50,440.33 L1674.68,470.49 L1667.03,480.37 Z" fill="#7e674f" stroke="#7e674f" stroke-width="0.6"/><path d="M1496.04,383.50 L1500.60,384.55 L1474.13,401.82 L1465.44,399.42 Z" fill="#ab8e6e" stroke="#ab8e6e" stroke-width="0.6"/><path d="M1381.92,476.57 L1391.53,486.20 L1378.44,522.34 L1368.54,510.09 Z" fill="#a78b6b" stroke="#a78b6b" stroke-width="0.6"/><path d="M1619.77,419.28 L1626.35,414.41 L1653.50,440.33 L1646.14,447.58 Z" fill="#887056" stroke="#887056" stroke-width="0.6"/><path d="M1459.54,396.71 L1465.44,399.42 L1436.55,422.71 L1428.76,418.08 Z" fill="#ae9170" stroke="#ae9170" stroke-width="0.6"/><path d="M1610.63,657.09 L1641.06,644.85 L1630.46,668.24 L1602.80,679.89 Z" fill="#6b5742" stroke="#6b5742" stroke-width="0.6"/><path d="M1372.69,558.28 L1391.06,572.08 L1392.53,607.10 L1374.22,591.83 Z" fill="#967c5f" stroke="#967c5f" stroke-width="0.6"/><path d="M1402.35,445.25 L1411.32,452.25 L1391.53,486.20 L1381.92,476.57 Z" fill="#ac8f6e" stroke="#ac8f6e" stroke-width="0.6"/><path d="M1428.76,418.08 L1436.55,422.71 L1411.32,452.25 L1402.35,445.25 Z" fill="#ae9170" stroke="#ae9170" stroke-width="0.6"/><path d="M1548.32,384.65 L1553.71,383.63 L1581.75,399.89 L1571.18,402.24 Z" fill="#9e8365" stroke="#9e8365" stroke-width="0.6"/><path d="M1647.05,614.47 L1671.30,599.91 L1664.26,629.90 L1641.06,644.85 Z" fill="#6b5742" stroke="#6b5742" stroke-width="0.6"/><path d="M1425.54,650.78 L1457.82,661.36 L1465.40,683.85 L1436.12,673.76 Z" fill="#79634c" stroke="#79634c" stroke-width="0.6"/><path d="M1500.60,384.55 L1506.27,385.38 L1485.34,403.79 L1474.13,401.82 Z" fill="#aa8d6d" stroke="#aa8d6d" stroke-width="0.6"/><path d="M1581.75,399.89 L1589.70,397.20 L1619.77,419.28 L1608.79,423.89 Z" fill="#957b5f" stroke="#957b5f" stroke-width="0.6"/><path d="M1392.53,607.10 L1419.13,620.48 L1425.54,650.78 L1400.11,637.02 Z" fill="#897156" stroke="#897156" stroke-width="0.6"/><path d="M1541.96,385.47 L1548.32,384.65 L1571.18,402.24 L1558.42,404.12 Z" fill="#a08566" stroke="#a08566" stroke-width="0.6"/><path d="M1665.56,527.75 L1681.14,515.52 L1687.84,550.74 L1671.92,565.21 Z" fill="#6d5944" stroke="#6d5944" stroke-width="0.6"/><path d="M1506.27,385.38 L1512.84,385.97 L1498.61,405.20 L1485.34,403.79 Z" fill="#a98d6d" stroke="#a98d6d" stroke-width="0.6"/><path d="M1465.44,399.42 L1474.13,401.82 L1448.71,426.92 L1436.55,422.71 Z" fill="#ad906f" stroke="#ad906f" stroke-width="0.6"/><path d="M1534.92,386.03 L1541.96,385.47 L1558.42,404.12 L1544.03,405.42 Z" fill="#a28768" stroke="#a28768" stroke-width="0.6"/><path d="M1512.84,385.97 L1520.02,386.29 L1513.32,405.97 L1498.61,405.20 Z" fill="#a88b6c" stroke="#a88b6c" stroke-width="0.6"/><path d="M1574.52,665.47 L1610.63,657.09 L1602.80,679.89 L1570.25,687.82 Z" fill="#6b5742" stroke="#6b5742" stroke-width="0.6"/><path d="M1527.49,386.30 L1534.92,386.03 L1544.03,405.42 L1528.73,406.05 Z" fill="#a48869" stroke="#a48869" stroke-width="0.6"/><path d="M1378.44,522.34 L1396.31,533.94 L1391.06,572.08 L1372.69,558.28 Z" fill="#9f8466" stroke="#9f8466" stroke-width="0.6"/><path d="M1520.02,386.29 L1527.49,386.30 L1528.73,406.05 L1513.32,405.97 Z" fill="#a68a6a" stroke="#a68a6a" stroke-width="0.6"/><path d="M1457.82,661.36 L1495.18,667.71 L1499.04,689.89 L1465.40,683.85 Z" fill="#756049" stroke="#756049" stroke-width="0.6"/><path d="M1608.79,423.89 L1619.77,419.28 L1646.14,447.58 L1632.91,454.54 Z" fill="#8d7459" stroke="#8d7459" stroke-width="0.6"/><path d="M1652.30,489.98 L1667.03,480.37 L1681.14,515.52 L1665.56,527.75 Z" fill="#78634b" stroke="#78634b" stroke-width="0.6"/><path d="M1632.91,454.54 L1646.14,447.58 L1667.03,480.37 L1652.30,489.98 Z" fill="#836c52" stroke="#836c52" stroke-width="0.6"/><path d="M1571.18,402.24 L1581.75,399.89 L1608.79,423.89 L1593.61,427.98 Z" fill="#987e61" stroke="#987e61" stroke-width="0.6"/><path d="M1647.51,578.43 L1671.92,565.21 L1671.30,599.91 L1647.05,614.47 Z" fill="#6b5742" stroke="#6b5742" stroke-width="0.6"/><path d="M1535.07,669.14 L1574.52,665.47 L1570.25,687.82 L1534.83,691.27 Z" fill="#6b5742" stroke="#6b5742" stroke-width="0.6"/><path d="M1436.55,422.71 L1448.71,426.92 L1426.17,458.70 L1411.32,452.25 Z" fill="#ae9170" stroke="#ae9170" stroke-width="0.6"/><path d="M1495.18,667.71 L1535.07,669.14 L1534.83,691.27 L1499.04,689.89 Z" fill="#6f5b45" stroke="#6f5b45" stroke-width="0.6"/><path d="M1391.53,486.20 L1408.26,495.23 L1396.31,533.94 L1378.44,522.34 Z" fill="#a88c6d" stroke="#a88c6d" stroke-width="0.6"/><path d="M1474.13,401.82 L1485.34,403.79 L1464.95,430.43 L1448.71,426.92 Z" fill="#ac8f6f" stroke="#ac8f6f" stroke-width="0.6"/><path d="M1615.02,626.45 L1647.05,614.47 L1641.06,644.85 L1610.63,657.09 Z" fill="#6b5742" stroke="#6b5742" stroke-width="0.6"/><path d="M1411.32,452.25 L1426.17,458.70 L1408.26,495.23 L1391.53,486.20 Z" fill="#ae9171" stroke="#ae9171" stroke-width="0.6"/><path d="M1391.06,572.08 L1417.81,584.16 L1419.13,620.48 L1392.53,607.10 Z" fill="#947a5e" stroke="#947a5e" stroke-width="0.6"/><path d="M1419.13,620.48 L1453.14,630.78 L1457.82,661.36 L1425.54,650.78 Z" fill="#856e54" stroke="#856e54" stroke-width="0.6"/><path d="M1558.42,404.12 L1571.18,402.24 L1593.61,427.98 L1574.78,431.28 Z" fill="#9c8163" stroke="#9c8163" stroke-width="0.6"/><path d="M1485.34,403.79 L1498.61,405.20 L1484.62,433.01 L1464.95,430.43 Z" fill="#ab8e6e" stroke="#ab8e6e" stroke-width="0.6"/><path d="M1593.61,427.98 L1608.79,423.89 L1632.91,454.54 L1613.92,460.79 Z" fill="#91785c" stroke="#91785c" stroke-width="0.6"/><path d="M1641.95,538.90 L1665.56,527.75 L1671.92,565.21 L1647.51,578.43 Z" fill="#745f48" stroke="#745f48" stroke-width="0.6"/><path d="M1448.71,426.92 L1464.95,430.43 L1446.65,464.20 L1426.17,458.70 Z" fill="#ae9170" stroke="#ae9170" stroke-width="0.6"/><path d="M1544.03,405.42 L1558.42,404.12 L1574.78,431.28 L1553.20,433.56 Z" fill="#9f8466" stroke="#9f8466" stroke-width="0.6"/><path d="M1576.82,634.69 L1615.02,626.45 L1610.63,657.09 L1574.52,665.47 Z" fill="#6d5943" stroke="#6d5943" stroke-width="0.6"/><path d="M1498.61,405.20 L1513.32,405.97 L1506.75,434.45 L1484.62,433.01 Z" fill="#a88c6c" stroke="#a88c6c" stroke-width="0.6"/><path d="M1396.31,533.94 L1422.11,544.04 L1417.81,584.16 L1391.06,572.08 Z" fill="#9e8466" stroke="#9e8466" stroke-width="0.6"/><path d="M1613.92,460.79 L1632.91,454.54 L1652.30,489.98 L1630.48,498.68 Z" fill="#887156" stroke="#887156" stroke-width="0.6"/><path d="M1630.48,498.68 L1652.30,489.98 L1665.56,527.75 L1641.95,538.90 Z" fill="#7f6850" stroke="#7f6850" stroke-width="0.6"/><path d="M1453.14,630.78 L1492.68,636.96 L1495.18,667.71 L1457.82,661.36 Z" fill="#816a51" stroke="#816a51" stroke-width="0.6"/><path d="M1528.73,406.05 L1544.03,405.42 L1553.20,433.56 L1530.07,434.64 Z" fill="#a38768" stroke="#a38768" stroke-width="0.6"/><path d="M1513.32,405.97 L1528.73,406.05 L1530.07,434.64 L1506.75,434.45 Z" fill="#a68a6a" stroke="#a68a6a" stroke-width="0.6"/><path d="M1615.24,589.32 L1647.51,578.43 L1647.05,614.47 L1615.02,626.45 Z" fill="#715c46" stroke="#715c46" stroke-width="0.6"/><path d="M1426.17,458.70 L1446.65,464.20 L1431.96,503.01 L1408.26,495.23 Z" fill="#b99d7d" stroke="#b99d7d" stroke-width="0.6"/><path d="M1408.26,495.23 L1431.96,503.01 L1422.11,544.04 L1396.31,533.94 Z" fill="#b39879" stroke="#b39879" stroke-width="0.6"/><path d="M1417.81,584.16 L1452.06,593.46 L1453.14,630.78 L1419.13,620.48 Z" fill="#90775b" stroke="#90775b" stroke-width="0.6"/><path d="M1534.98,638.32 L1576.82,634.69 L1574.52,665.47 L1535.07,669.14 Z" fill="#745f48" stroke="#745f48" stroke-width="0.6"/><path d="M1574.78,431.28 L1593.61,427.98 L1613.92,460.79 L1589.81,465.88 Z" fill="#967c5f" stroke="#967c5f" stroke-width="0.6"/><path d="M1492.68,636.96 L1534.98,638.32 L1535.07,669.14 L1495.18,667.71 Z" fill="#7b654d" stroke="#7b654d" stroke-width="0.6"/><path d="M1464.95,430.43 L1484.62,433.01 L1471.98,468.30 L1446.65,464.20 Z" fill="#ac8f6f" stroke="#ac8f6f" stroke-width="0.6"/><path d="M1610.93,548.07 L1641.95,538.90 L1647.51,578.43 L1615.24,589.32 Z" fill="#7b654d" stroke="#7b654d" stroke-width="0.6"/><path d="M1553.20,433.56 L1574.78,431.28 L1589.81,465.88 L1561.75,469.40 Z" fill="#9a8063" stroke="#9a8063" stroke-width="0.6"/><path d="M1589.81,465.88 L1613.92,460.79 L1630.48,498.68 L1602.22,505.81 Z" fill="#8e755a" stroke="#8e755a" stroke-width="0.6"/><path d="M1576.73,596.84 L1615.24,589.32 L1615.02,626.45 L1576.82,634.69 Z" fill="#78624b" stroke="#78624b" stroke-width="0.6"/><path d="M1422.11,544.04 L1454.96,551.77 L1452.06,593.46 L1417.81,584.16 Z" fill="#9b8164" stroke="#9b8164" stroke-width="0.6"/><path d="M1484.62,433.01 L1506.75,434.45 L1500.83,470.65 L1471.98,468.30 Z" fill="#a88b6c" stroke="#a88b6c" stroke-width="0.6"/><path d="M1602.22,505.81 L1630.48,498.68 L1641.95,538.90 L1610.93,548.07 Z" fill="#856e54" stroke="#856e54" stroke-width="0.6"/><path d="M1452.06,593.46 L1491.90,599.01 L1492.68,636.96 L1453.14,630.78 Z" fill="#8b7358" stroke="#8b7358" stroke-width="0.6"/><path d="M1446.65,464.20 L1471.98,468.30 L1461.78,508.91 L1431.96,503.01 Z" fill="#bb9f81" stroke="#bb9f81" stroke-width="0.6"/><path d="M1530.07,434.64 L1553.20,433.56 L1561.75,469.40 L1531.43,471.04 Z" fill="#9f8466" stroke="#9f8466" stroke-width="0.6"/><path d="M1506.75,434.45 L1530.07,434.64 L1531.43,471.04 L1500.83,470.65 Z" fill="#a38869" stroke="#a38869" stroke-width="0.6"/><path d="M1431.96,503.01 L1461.78,508.91 L1454.96,551.77 L1422.11,544.04 Z" fill="#b69b7d" stroke="#b69b7d" stroke-width="0.6"/><path d="M1534.55,600.19 L1576.73,596.84 L1576.82,634.69 L1534.98,638.32 Z" fill="#7f6850" stroke="#7f6850" stroke-width="0.6"/><path d="M1491.90,599.01 L1534.55,600.19 L1534.98,638.32 L1492.68,636.96 Z" fill="#866e54" stroke="#866e54" stroke-width="0.6"/><path d="M1561.75,469.40 L1589.81,465.88 L1602.22,505.81 L1568.92,510.73 Z" fill="#947a5e" stroke="#947a5e" stroke-width="0.6"/><path d="M1574.06,554.41 L1610.93,548.07 L1615.24,589.32 L1576.73,596.84 Z" fill="#826b52" stroke="#826b52" stroke-width="0.6"/><path d="M1471.98,468.30 L1500.83,470.65 L1496.12,512.36 L1461.78,508.91 Z" fill="#a98e6f" stroke="#a98e6f" stroke-width="0.6"/><path d="M1454.96,551.77 L1493.05,556.35 L1491.90,599.01 L1452.06,593.46 Z" fill="#957c5f" stroke="#957c5f" stroke-width="0.6"/><path d="M1568.92,510.73 L1602.22,505.81 L1610.93,548.07 L1574.06,554.41 Z" fill="#8c7359" stroke="#8c7359" stroke-width="0.6"/><path d="M1531.43,471.04 L1561.75,469.40 L1568.92,510.73 L1532.70,512.99 Z" fill="#997f62" stroke="#997f62" stroke-width="0.6"/><path d="M1461.78,508.91 L1496.12,512.36 L1493.05,556.35 L1454.96,551.77 Z" fill="#a2876a" stroke="#a2876a" stroke-width="0.6"/><path d="M1500.83,470.65 L1531.43,471.04 L1532.70,512.99 L1496.12,512.36 Z" fill="#9f8466" stroke="#9f8466" stroke-width="0.6"/><path d="M1533.77,557.27 L1574.06,554.41 L1576.73,596.84 L1534.55,600.19 Z" fill="#897157" stroke="#897157" stroke-width="0.6"/><path d="M1493.05,556.35 L1533.77,557.27 L1534.55,600.19 L1491.90,599.01 Z" fill="#90775b" stroke="#90775b" stroke-width="0.6"/><path d="M1532.70,512.99 L1568.92,510.73 L1574.06,554.41 L1533.77,557.27 Z" fill="#92795d" stroke="#92795d" stroke-width="0.6"/><path d="M1496.12,512.36 L1532.70,512.99 L1533.77,557.27 L1493.05,556.35 Z" fill="#987e61" stroke="#987e61" stroke-width="0.6"/>
<path d="M1574.63,462.43 L1549.66,460.55 M1657.31,626.78 L1635.86,644.15 M1557.90,706.92 L1550.83,705.19 M1547.98,629.48 L1539.53,650.22 M1532.83,707.00 L1531.94,698.65 M1582.72,651.85 L1557.03,662.31 M1514.73,682.68 L1530.10,668.76 M1573.06,440.13 L1574.63,462.43 M1621.79,495.65 L1618.65,520.61 M1461.28,596.67 L1475.62,618.13 M1485.94,704.03 L1497.37,703.06 M1396.19,645.32 L1414.34,663.43 M1396.22,544.96 L1406.29,569.95 M1646.31,599.41 L1635.03,587.82 M1544.71,400.68 L1547.14,418.33 M1583.31,672.50 L1556.65,672.88 M1603.69,677.31 L1579.15,679.24 M1506.89,657.39 L1530.10,668.76 M1550.83,705.19 L1543.67,697.49 M1661.58,443.63 L1648.10,436.52 M1695.67,521.75 L1689.43,508.54 M1450.45,468.99 L1451.14,493.06 M1449.21,573.68 L1433.45,582.60 M1448.69,661.65 L1475.19,668.61 M1518.47,628.56 L1524.00,649.70 M1647.81,564.06 L1635.03,587.82 M1599.97,629.08 L1591.16,621.60 M1524.00,649.70 L1530.10,668.76 M1489.68,687.81 L1510.32,680.39 M1475.55,442.03 L1474.36,464.48 M1481.81,697.59 L1498.49,692.60 M1643.30,477.95 L1643.00,503.28 M1407.29,482.92 L1389.31,492.34 M1566.76,559.40 L1561.64,583.62 M1549.66,460.55 L1549.84,483.83 M1601.87,393.31 L1588.71,390.60 M1492.03,637.64 L1510.29,654.69 M1508.79,696.13 L1520.12,698.18 M1655.63,641.78 L1633.75,657.10 M1477.09,512.36 L1480.77,536.91 M1569.84,419.63 L1573.06,440.13 M1610.53,647.09 L1585.02,658.53 M1677.39,524.14 L1661.81,512.78 M1633.77,631.65 L1627.95,620.05 M1439.62,549.59 L1421.66,558.83 M1474.72,661.61 L1502.11,667.37 M1587.87,383.30 L1580.38,381.17 M1635.03,587.82 L1618.94,609.65 M1485.25,642.62 L1506.89,657.39 M1451.14,493.06 L1428.73,499.84 M1528.35,627.72 L1529.20,649.24 M1410.59,458.04 L1407.29,482.92 M1525.30,685.32 L1530.10,668.76 M1573.35,510.22 L1570.68,534.82 M1648.10,436.52 L1657.74,460.77 M1477.09,512.36 L1454.22,517.64 M1526.16,556.57 L1505.78,558.01 M1557.14,632.03 L1544.30,651.64 M1476.36,654.80 L1474.72,661.61 M1627.95,620.05 L1606.56,637.65 M1491.10,388.32 L1475.49,390.27 M1524.12,418.19 L1501.15,419.19 M1588.71,390.60 L1573.96,388.54 M1448.29,686.93 L1465.30,696.69 M1437.37,614.39 L1429.37,625.32 M1514.73,682.68 L1519.79,684.35 M1573.06,440.13 L1548.77,438.53 M1682.25,564.70 L1671.60,550.88 M1573.35,510.22 L1549.37,507.92 M1556.65,672.88 L1557.86,669.36 M1544.39,581.40 L1526.83,580.96 M1502.94,533.48 L1505.78,558.01 M1512.61,377.08 L1500.69,377.96 M1364.82,515.77 L1360.39,529.39 M1598.89,465.94 L1574.63,462.43 M1594.68,686.58 L1572.84,685.39 M1414.34,663.43 L1429.24,677.18 M1661.05,576.18 L1646.31,599.41 M1474.36,464.48 L1474.92,488.08 M1564.88,401.67 L1569.84,419.63 M1394.25,582.82 L1386.36,597.23 M1389.31,492.34 L1390.41,518.86 M1677.91,496.72 L1662.22,486.50 M1482.73,682.01 L1506.75,677.58 M1647.81,564.06 L1631.47,553.80 M1457.02,424.62 L1436.78,429.06 M1503.76,401.41 L1483.78,403.13 M1671.11,451.80 L1661.58,443.63 M1418.46,434.62 L1410.59,458.04 M1508.93,630.52 L1500.02,633.57 M1505.78,558.01 L1509.33,582.28 M1635.27,671.30 L1648.37,656.88 M1438.13,399.75 L1417.69,418.76 M1579.15,679.24 L1583.31,672.50 M1564.88,401.67 L1544.71,400.68 M1591.79,422.08 L1596.60,443.13 M1646.31,599.41 L1627.95,620.05 M1544.30,651.64 L1530.10,668.76 M1571.23,379.40 L1560.76,378.05 M1410.59,458.04 L1393.31,466.17 M1661.58,443.63 L1672.73,469.54 M1541.43,386.43 L1544.71,400.68 M1604.34,569.87 L1586.15,563.68 M1543.67,697.49 L1554.73,694.78 M1627.11,669.96 L1603.69,677.31 M1497.37,703.06 L1514.68,706.27 M1541.61,605.20 L1538.29,628.03 M1510.29,654.69 L1530.10,668.76 M1360.39,529.39 L1361.85,559.87 M1682.25,564.70 L1670.40,590.01 M1607.29,600.68 L1591.16,621.60 M1491.10,388.32 L1483.78,403.13 M1508.79,696.13 L1519.79,684.35 M1525.58,531.98 L1526.16,556.57 M1542.08,683.71 L1530.10,668.76 M1556.65,672.88 L1530.10,668.76 M1502.94,533.48 L1480.77,536.91 M1593.53,593.30 L1580.52,615.37 M1591.16,621.60 L1572.70,640.24 M1549.32,377.13 L1558.05,387.15 M1475.19,668.61 L1477.86,675.51 M1564.60,690.67 L1546.96,681.75 M1558.05,387.15 L1564.88,401.67 M1403.68,619.08 L1424.72,637.30 M1520.12,698.18 L1525.30,685.32 M1546.96,681.75 L1530.10,668.76 M1510.32,680.39 L1514.73,682.68 M1448.67,651.55 L1448.69,661.65 M1436.78,429.06 L1430.50,451.30 M1612.77,545.50 L1604.34,569.87 M1615.82,682.08 L1594.68,686.58 M1561.64,583.62 L1544.39,581.40 M1544.81,373.28 L1560.76,378.05 M1633.14,414.75 L1648.10,436.52 M1394.25,582.82 L1410.01,605.50 M1526.16,556.57 L1526.83,580.96 M1396.22,544.96 L1382.72,557.79 M1382.12,457.59 L1370.04,486.27 M1633.77,631.65 L1610.53,647.09 M1611.54,657.10 L1585.26,665.50 M1457.46,632.91 L1479.94,648.40 M1587.87,383.30 L1612.95,396.62 M1501.15,419.19 L1499.64,439.48 M1549.37,507.92 L1548.29,532.43 M1612.95,396.62 L1633.14,414.75 M1489.49,379.27 L1479.36,380.98 M1567.68,700.98 L1582.53,694.63 M1524.12,418.19 L1524.17,438.32 M1438.13,399.75 L1430.46,403.94 M1506.89,657.39 L1504.33,660.47 M1503.76,401.41 L1501.15,419.19 M1560.76,378.05 L1573.96,388.54 M1635.86,644.15 L1633.77,631.65 M1580.52,615.37 L1568.46,610.52 M1554.73,694.78 L1542.08,683.71 M1524.21,400.59 L1503.76,401.41 M1465.30,696.69 L1485.94,704.03 M1466.85,566.58 L1449.21,573.68 M1506.75,677.58 L1530.10,668.76 M1499.14,461.57 L1474.36,464.48 M1549.37,507.92 L1525.08,507.51 M1413.15,533.95 L1421.66,558.83 M1544.30,651.64 L1539.53,650.22 M1644.39,420.20 L1661.58,443.63 M1541.43,386.43 L1524.47,386.39 M1643.00,503.28 L1621.79,495.65 M1512.61,377.08 L1507.56,387.02 M1414.34,663.43 L1435.58,675.42 M1507.56,387.02 L1503.76,401.41 M1374.82,503.33 L1364.82,515.77 M1405.28,648.64 L1414.34,663.43 M1448.53,396.03 L1431.08,413.60 M1386.36,597.23 L1383.51,612.84 M1644.39,420.20 L1633.14,414.75 M1555.08,659.05 L1530.10,668.76 M1510.29,654.69 L1506.89,657.39 M1662.22,486.50 L1643.30,477.95 M1514.68,706.27 L1532.83,707.00 M1476.14,590.17 L1487.23,612.64 M1633.75,657.10 L1635.86,644.15 M1386.56,629.11 L1405.28,648.64 M1531.94,698.65 L1543.67,697.49 M1557.86,669.36 L1557.97,665.79 M1485.86,561.35 L1466.85,566.58 M1555.36,607.11 L1547.98,629.48 M1648.37,656.88 L1655.63,641.78 M1370.04,486.27 L1364.82,515.77 M1458.72,681.47 L1468.75,690.24 M1478.64,421.34 L1457.02,424.62 M1525.57,372.56 L1524.92,376.65 M1546.96,681.75 L1551.11,679.21 M1369.84,588.01 L1372.49,604.59 M1547.14,418.33 L1524.12,418.19 M1538.29,628.03 L1528.35,627.72 M1459.50,542.28 L1466.85,566.58 M1487.23,612.64 L1475.62,618.13 M1549.84,483.83 L1549.37,507.92 M1620.82,577.93 L1604.34,569.87 M1361.85,559.87 L1369.84,588.01 M1565.47,635.65 L1557.14,632.03 M1573.96,388.54 L1584.28,403.58 M1479.36,380.98 L1461.15,392.85 M1585.26,665.50 L1585.02,658.53 M1612.95,396.62 L1601.87,393.31 M1550.28,373.97 L1571.23,379.40 M1401.89,633.63 L1405.28,648.64 M1423.95,649.98 L1448.69,661.65 M1631.50,430.53 L1612.52,425.72 M1524.21,400.59 L1524.12,418.19 M1390.32,448.99 L1379.48,475.62 M1474.92,488.08 L1451.14,493.06 M1492.30,585.36 L1500.01,608.55 M1550.83,705.19 L1567.68,700.98 M1427.90,475.13 L1407.29,482.92 M1661.05,576.18 L1647.81,564.06 M1468.75,690.24 L1489.68,687.81 M1502.71,663.84 L1502.11,667.37 M1689.43,508.54 L1688.81,537.25 M1657.74,460.77 L1662.22,486.50 M1688.81,537.25 L1682.25,564.70 M1506.75,677.58 L1510.32,680.39 M1430.50,451.30 L1427.90,475.13 M1427.48,662.88 L1452.01,671.78 M1578.16,587.59 L1561.64,583.62 M1574.63,462.43 L1574.70,485.96 M1475.62,618.13 L1492.03,637.64 M1572.84,685.39 L1579.15,679.24 M1479.94,648.40 L1476.36,654.80 M1527.56,604.80 L1513.57,605.93 M1548.29,532.43 L1546.62,557.03 M1643.00,503.28 L1638.96,528.75 M1656.87,538.86 L1647.81,564.06 M1596.60,443.13 L1573.06,440.13 M1557.03,662.31 L1530.10,668.76 M1437.37,614.39 L1457.46,632.91 M1465.56,624.93 L1485.25,642.62 M1687.82,580.05 L1674.95,605.25 M1555.08,659.05 L1552.23,656.13 M1580.38,381.17 L1571.23,379.40 M1544.39,581.40 L1541.61,605.20 M1612.52,425.72 L1591.79,422.08 M1386.56,629.11 L1396.19,645.32 M1695.67,521.75 L1694.98,551.89 M1653.98,612.50 L1646.31,599.41 M1568.46,610.52 L1557.14,632.03 M1694.98,551.89 L1687.82,580.05 M1390.41,518.86 L1396.22,544.96 M1594.68,686.58 L1603.69,677.31 M1461.15,392.85 L1446.95,409.24 M1448.19,604.78 L1437.37,614.39 M1670.40,590.01 L1653.98,612.50 M1513.57,605.93 L1518.47,628.56 M1687.82,580.05 L1682.25,564.70 M1369.84,588.01 L1383.51,612.84 M1502.11,667.37 L1530.10,668.76 M1407.41,424.66 L1390.32,448.99 M1585.02,658.53 L1557.97,665.79 M1621.97,471.10 L1598.89,465.94 M1459.50,542.28 L1439.62,549.59 M1499.64,439.48 L1499.14,461.57 M1549.84,483.83 L1524.67,483.48 M1465.30,696.69 L1481.81,697.59 M1524.92,376.65 L1524.47,386.39 M1529.20,649.24 L1530.10,668.76 M1573.96,388.54 L1558.05,387.15 M1579.15,679.24 L1554.38,676.21 M1405.28,648.64 L1427.48,662.88 M1525.58,531.98 L1502.94,533.48 M1621.79,495.65 L1598.84,489.89 M1542.08,683.71 L1546.96,681.75 M1498.49,692.60 L1508.79,696.13 M1451.70,641.86 L1448.67,651.55 M1586.15,563.68 L1578.16,587.59 M1618.94,609.65 L1607.29,600.68 M1574.70,485.96 L1573.35,510.22 M1533.65,709.36 L1532.83,707.00 M1633.14,414.75 L1618.96,410.14 M1474.92,488.08 L1477.09,512.36 M1666.30,637.95 L1648.37,656.88 M1572.70,640.24 L1565.47,635.65 M1558.05,387.15 L1541.43,386.43 M1408.25,508.45 L1390.41,518.86 M1448.67,651.55 L1474.72,661.61 M1476.36,654.80 L1502.71,663.84 M1502.71,663.84 L1530.10,668.76 M1657.74,460.77 L1639.55,453.44 M1688.81,537.25 L1677.39,524.14 M1430.50,451.30 L1410.59,458.04 M1662.22,486.50 L1661.81,512.78 M1689.33,490.90 L1683.61,479.64 M1448.29,686.93 L1468.75,690.24 M1524.00,649.70 L1519.00,650.79 M1500.69,377.96 L1489.49,379.27 M1600.09,692.74 L1615.82,682.08 M1500.02,633.57 L1514.37,652.47 M1548.29,532.43 L1525.58,531.98 M1514.37,652.47 L1530.10,668.76 M1596.60,443.13 L1598.89,465.94 M1546.62,557.03 L1526.16,556.57 M1506.59,373.92 L1489.49,379.27 M1390.41,518.86 L1376.06,531.03 M1672.73,469.54 L1677.91,496.72 M1565.47,635.65 L1548.59,653.63 M1670.40,590.01 L1661.05,576.18 M1413.15,533.95 L1396.22,544.96 M1591.16,621.60 L1580.52,615.37 M1525.30,685.32 L1531.02,685.53 M1429.37,625.32 L1424.72,637.30 M1509.33,582.28 L1492.30,585.36 M1502.11,667.37 L1502.58,670.93 M1448.53,396.03 L1438.13,399.75 M1514.68,706.27 L1520.12,698.18 M1407.29,482.92 L1408.25,508.45 M1379.48,475.62 L1370.04,486.27 M1499.64,439.48 L1475.55,442.03 M1481.81,697.59 L1497.37,703.06 M1582.53,694.63 L1564.60,690.67 M1524.36,460.27 L1499.14,461.57 M1519.79,684.35 L1525.30,685.32 M1446.95,409.24 L1431.08,413.60 M1480.77,536.91 L1459.50,542.28 M1526.83,580.96 L1509.33,582.28 M1452.01,671.78 L1458.72,681.47 M1499.14,461.57 L1499.56,484.90 M1504.14,674.38 L1530.10,668.76 M1532.24,372.56 L1537.26,376.66 M1584.28,403.58 L1591.79,422.08 M1666.30,637.95 L1673.84,621.45 M1408.25,508.45 L1413.15,533.95 M1525.57,372.56 L1518.93,372.79 M1477.86,675.51 L1504.14,674.38 M1485.25,642.62 L1479.94,648.40 M1500.85,508.99 L1502.94,533.48 M1584.28,403.58 L1564.88,401.67 M1631.47,553.80 L1612.77,545.50 M1547.98,629.48 L1538.29,628.03 M1514.37,652.47 L1510.29,654.69 M1420.16,593.26 L1410.01,605.50 M1583.31,672.50 L1585.26,665.50 M1598.84,489.89 L1596.60,514.44 M1648.37,656.88 L1627.11,669.96 M1598.89,465.94 L1598.84,489.89 M1537.26,376.66 L1524.92,376.65 M1402.72,441.29 L1390.32,448.99 M1656.87,538.86 L1638.96,528.75 M1599.97,629.08 L1578.53,645.69 M1534.44,649.41 L1530.10,668.76 M1671.60,550.88 L1661.05,576.18 M1410.01,605.50 L1429.37,625.32 M1569.84,419.63 L1547.14,418.33 M1383.51,612.84 L1386.56,629.11 M1474.72,661.61 L1475.19,668.61 M1500.01,608.55 L1487.23,612.64 M1677.91,496.72 L1677.39,524.14 M1364.82,515.77 L1366.18,544.80 M1461.15,392.85 L1448.53,396.03 M1366.18,544.80 L1373.59,572.24 M1557.03,662.31 L1555.08,659.05 M1603.69,677.31 L1609.31,667.32 M1671.11,451.80 L1683.61,479.64 M1635.86,644.15 L1611.54,657.10 M1508.93,630.52 L1519.00,650.79 M1543.67,697.49 L1536.69,684.99 M1379.48,475.62 L1374.82,503.33 M1532.83,707.00 L1550.83,705.19 M1635.27,671.30 L1615.82,682.08 M1621.44,400.50 L1644.39,420.20 M1446.95,409.24 L1436.78,429.06 M1466.85,566.58 L1476.14,590.17 M1536.69,684.99 L1530.10,668.76 M1557.97,665.79 L1530.10,668.76 M1694.98,551.89 L1688.81,537.25 M1519.79,684.35 L1530.10,668.76 M1480.77,536.91 L1485.86,561.35 M1606.56,637.65 L1582.72,651.85 M1502.58,670.93 L1530.10,668.76 M1457.02,424.62 L1452.35,445.96 M1382.72,557.79 L1394.25,582.82 M1532.24,372.56 L1525.57,372.56 M1600.09,692.74 L1582.53,694.63 M1449.21,573.68 L1461.28,596.67 M1452.35,445.96 L1450.45,468.99 M1499.56,484.90 L1500.85,508.99 M1580.47,701.23 L1600.09,692.74 M1406.29,569.95 L1420.16,593.26 M1609.31,667.32 L1583.31,672.50 M1546.62,557.03 L1544.39,581.40 M1468.75,690.24 L1481.81,697.59 M1374.82,503.33 L1376.06,531.03 M1479.94,648.40 L1504.33,660.47 M1612.77,545.50 L1592.33,539.17 M1524.17,438.32 L1524.36,460.27 M1557.14,632.03 L1547.98,629.48 M1448.69,661.65 L1452.01,671.78 M1604.34,569.87 L1593.53,593.30 M1627.95,620.05 L1618.94,609.65 M1373.59,572.24 L1386.36,597.23 M1570.68,534.82 L1566.76,559.40 M1529.20,649.24 L1524.00,649.70 M1531.94,698.65 L1531.02,685.53 M1382.72,557.79 L1373.59,572.24 M1485.86,561.35 L1492.30,585.36 M1500.85,508.99 L1477.09,512.36 M1424.72,637.30 L1423.95,649.98 M1631.47,553.80 L1620.82,577.93 M1567.68,700.98 L1554.73,694.78 M1687.25,596.50 L1673.84,621.45 M1525.08,507.51 L1525.58,531.98 M1612.52,425.72 L1618.95,447.56 M1618.95,447.56 L1621.97,471.10 M1574.70,485.96 L1549.84,483.83 M1465.56,624.93 L1457.46,632.91 M1541.61,605.20 L1527.56,604.80 M1653.98,612.50 L1633.77,631.65 M1478.64,421.34 L1475.55,442.03 M1524.36,460.27 L1524.67,483.48 M1598.84,489.89 L1574.70,485.96 M1373.59,572.24 L1369.84,588.01 M1602.48,406.41 L1584.28,403.58 M1657.31,626.78 L1653.98,612.50 M1610.53,647.09 L1606.56,637.65 M1694.77,567.65 L1694.98,551.89 M1461.28,596.67 L1448.19,604.78 M1547.14,418.33 L1548.77,438.53 M1674.95,605.25 L1657.31,626.78 M1538.29,628.03 L1534.44,649.41 M1475.19,668.61 L1502.58,670.93 M1687.25,596.50 L1687.82,580.05 M1474.36,464.48 L1450.45,468.99 M1525.08,507.51 L1500.85,508.99 M1620.82,577.93 L1607.29,600.68 M1433.45,582.60 L1420.16,593.26 M1524.47,386.39 L1524.21,400.59 M1534.44,649.41 L1529.20,649.24 M1561.64,583.62 L1555.36,607.11 M1482.73,682.01 L1489.68,687.81 M1383.51,612.84 L1401.89,633.63 M1631.50,430.53 L1639.55,453.44 M1418.46,434.62 L1402.72,441.29 M1450.45,468.99 L1427.90,475.13 M1507.56,387.02 L1491.10,388.32 M1366.18,544.80 L1361.85,559.87 M1435.58,675.42 L1448.29,686.93 M1588.71,390.60 L1602.48,406.41 M1596.60,514.44 L1573.35,510.22 M1498.49,692.60 L1514.73,682.68 M1552.23,656.13 L1548.59,653.63 M1417.69,418.76 L1407.41,424.66 M1591.79,422.08 L1569.84,419.63 M1643.30,477.95 L1621.97,471.10 M1618.94,609.65 L1599.97,629.08 M1489.68,687.81 L1498.49,692.60 M1566.76,559.40 L1546.62,557.03 M1421.66,558.83 L1433.45,582.60 M1557.97,665.79 L1557.03,662.31 M1672.73,469.54 L1657.74,460.77 M1578.53,645.69 L1572.70,640.24 M1492.03,637.64 L1485.25,642.62 M1655.63,641.78 L1657.31,626.78 M1458.72,681.47 L1482.73,682.01 M1428.73,499.84 L1432.71,524.83 M1452.35,445.96 L1430.50,451.30 M1499.56,484.90 L1474.92,488.08 M1406.29,569.95 L1394.25,582.82 M1551.11,679.21 L1554.38,676.21 M1504.14,674.38 L1506.75,677.58 M1464.69,405.75 L1446.95,409.24 M1528.35,627.72 L1518.47,628.56 M1570.68,534.82 L1548.29,532.43 M1593.53,593.30 L1578.16,587.59 M1564.60,690.67 L1572.84,685.39 M1618.96,410.14 L1602.48,406.41 M1548.77,438.53 L1549.66,460.55 M1633.75,657.10 L1609.31,667.32 M1448.19,604.78 L1465.56,624.93 M1618.95,447.56 L1596.60,443.13 M1602.48,406.41 L1612.52,425.72 M1430.46,403.94 L1407.41,424.66 M1548.59,653.63 L1530.10,668.76 M1571.23,379.40 L1588.71,390.60 M1536.69,684.99 L1542.08,683.71 M1674.95,605.25 L1670.40,590.01 M1519.00,650.79 L1514.37,652.47 M1689.43,508.54 L1677.91,496.72 M1580.47,701.23 L1567.68,700.98 M1509.33,582.28 L1513.57,605.93 M1436.78,429.06 L1418.46,434.62 M1527.56,604.80 L1528.35,627.72 M1661.81,512.78 L1656.87,538.86 M1393.31,466.17 L1389.31,492.34 M1475.49,390.27 L1464.69,405.75 M1683.61,479.64 L1689.43,508.54 M1518.47,628.56 L1508.93,630.52 M1512.53,373.25 L1500.69,377.96 M1596.60,514.44 L1592.33,539.17 M1554.38,676.21 L1530.10,668.76 M1580.52,615.37 L1565.47,635.65 M1572.70,640.24 L1552.23,656.13 M1552.23,656.13 L1530.10,668.76 M1401.89,633.63 L1423.95,649.98 M1538.72,372.80 L1549.32,377.13 M1427.90,475.13 L1428.73,499.84 M1376.06,531.03 L1366.18,544.80 M1457.46,632.91 L1451.70,641.86 M1497.37,703.06 L1508.79,696.13 M1417.69,418.76 L1402.72,441.29 M1500.69,377.96 L1491.10,388.32 M1424.72,637.30 L1448.67,651.55 M1428.73,499.84 L1408.25,508.45 M1585.26,665.50 L1557.86,669.36 M1578.16,587.59 L1568.46,610.52 M1464.69,405.75 L1457.02,424.62 M1671.60,550.88 L1656.87,538.86 M1433.45,582.60 L1448.19,604.78 M1572.84,685.39 L1551.11,679.21 M1551.11,679.21 L1530.10,668.76 M1489.49,379.27 L1475.49,390.27 M1452.01,671.78 L1477.86,675.51 M1618.96,410.14 L1631.50,430.53 M1611.54,657.10 L1610.53,647.09 M1621.44,400.50 L1612.95,396.62 M1524.67,483.48 L1499.56,484.90 M1420.16,593.26 L1437.37,614.39 M1476.14,590.17 L1461.28,596.67 M1451.70,641.86 L1476.36,654.80 M1580.38,381.17 L1601.87,393.31 M1470.63,383.06 L1463.67,385.46 M1601.87,393.31 L1618.96,410.14 M1548.77,438.53 L1524.17,438.32 M1502.58,670.93 L1504.14,674.38 M1537.26,376.66 L1541.43,386.43 M1607.29,600.68 L1593.53,593.30 M1592.33,539.17 L1586.15,563.68 M1677.39,524.14 L1671.60,550.88 M1432.71,524.83 L1439.62,549.59 M1548.59,653.63 L1544.30,651.64 M1483.78,403.13 L1478.64,421.34 M1487.23,612.64 L1500.02,633.57 M1524.17,438.32 L1499.64,439.48 M1519.00,650.79 L1530.10,668.76 M1639.55,453.44 L1618.95,447.56 M1661.81,512.78 L1643.00,503.28 M1513.57,605.93 L1500.01,608.55 M1393.31,466.17 L1379.48,475.62 M1549.32,377.13 L1537.26,376.66 M1504.33,660.47 L1530.10,668.76 M1475.49,390.27 L1461.15,392.85 M1683.61,479.64 L1672.73,469.54 M1389.31,492.34 L1374.82,503.33 M1432.71,524.83 L1413.15,533.95 M1652.01,426.39 L1644.39,420.20 M1673.84,621.45 L1674.95,605.25 M1479.36,380.98 L1470.63,383.06 M1483.78,403.13 L1464.69,405.75 M1615.82,682.08 L1627.11,669.96 M1386.36,597.23 L1403.68,619.08 M1526.83,580.96 L1527.56,604.80 M1582.72,651.85 L1578.53,645.69 M1554.38,676.21 L1556.65,672.88 M1539.53,650.22 L1530.10,668.76 M1429.24,677.18 L1448.29,686.93 M1505.78,558.01 L1485.86,561.35 M1557.86,669.36 L1530.10,668.76 M1531.02,685.53 L1536.69,684.99 M1463.67,385.46 L1438.13,399.75 M1492.30,585.36 L1476.14,590.17 M1500.01,608.55 L1508.93,630.52 M1376.06,531.03 L1382.72,557.79 M1524.47,386.39 L1507.56,387.02 M1549.66,460.55 L1524.36,460.27 M1427.48,662.88 L1435.58,675.42 M1560.76,378.05 L1549.32,377.13 M1618.65,520.61 L1596.60,514.44 M1554.73,694.78 L1564.60,690.67 M1501.31,374.80 L1479.36,380.98 M1609.31,667.32 L1611.54,657.10 M1635.03,587.82 L1620.82,577.93 M1431.08,413.60 L1418.46,434.62 M1627.11,669.96 L1633.75,657.10 M1518.93,372.79 L1512.61,377.08 M1410.01,605.50 L1403.68,619.08 M1524.67,483.48 L1525.08,507.51 M1648.10,436.52 L1631.50,430.53 M1402.72,441.29 L1393.31,466.17 M1421.66,558.83 L1406.29,569.95 M1431.08,413.60 L1417.69,418.76 M1544.71,400.68 L1524.21,400.59 M1592.33,539.17 L1570.68,534.82 M1509.16,708.37 L1514.68,706.27 M1403.68,619.08 L1401.89,633.63 M1520.12,698.18 L1531.94,698.65 M1429.37,625.32 L1451.70,641.86 M1639.55,453.44 L1643.30,477.95 M1585.02,658.53 L1582.72,651.85 M1475.62,618.13 L1465.56,624.93 M1477.86,675.51 L1482.73,682.01 M1475.55,442.03 L1452.35,445.96 M1454.22,517.64 L1459.50,542.28 M1504.33,660.47 L1502.71,663.84 M1435.58,675.42 L1458.72,681.47 M1524.92,376.65 L1512.61,377.08 M1673.84,621.45 L1655.63,641.78 M1501.15,419.19 L1478.64,421.34 M1638.96,528.75 L1631.47,553.80 M1539.53,650.22 L1534.44,649.41 M1586.15,563.68 L1566.76,559.40 M1470.63,383.06 L1448.53,396.03 M1439.62,549.59 L1449.21,573.68 M1578.53,645.69 L1555.08,659.05 M1531.02,685.53 L1530.10,668.76 M1454.22,517.64 L1432.71,524.83 M1582.53,694.63 L1594.68,686.58 M1500.02,633.57 L1492.03,637.64 M1568.46,610.52 L1555.36,607.11 M1618.65,520.61 L1612.77,545.50 M1451.14,493.06 L1454.22,517.64 M1423.95,649.98 L1427.48,662.88 M1390.32,448.99 L1382.12,457.59 M1638.96,528.75 L1618.65,520.61 M1621.97,471.10 L1621.79,495.65 M1510.32,680.39 L1530.10,668.76 M1555.36,607.11 L1541.61,605.20 M1372.49,604.59 L1386.56,629.11 M1606.56,637.65 L1599.97,629.08" stroke="#ffa030" stroke-opacity="0.45" stroke-width="0.7" fill="none"/>
<path d="M1671.92,565.21 L1671.30,599.91 M1526.43,375.39 L1501.31,374.80 M1426.17,458.70 L1408.26,495.23 M1608.79,423.89 L1632.91,454.54 M1372.49,604.59 L1382.40,621.24 M1675.78,460.84 L1689.33,490.90 M1458.79,388.11 L1456.33,390.94 M1626.83,404.84 L1652.01,426.39 M1619.77,419.28 L1626.35,414.41 M1689.33,490.90 L1695.67,521.75 M1592.45,694.48 L1616.42,684.15 M1526.43,375.39 L1550.28,373.97 M1364.20,575.78 L1372.49,604.59 M1399.06,438.12 L1379.02,466.89 M1366.04,497.88 L1368.54,510.09 M1446.65,464.20 L1471.98,468.30 M1602.80,679.89 L1592.45,694.48 M1520.02,386.29 L1513.32,405.97 M1602.22,505.81 L1630.48,498.68 M1564.53,701.46 L1592.45,694.48 M1695.50,536.00 L1695.67,521.75 M1655.27,433.17 L1652.01,426.39 M1399.06,438.12 L1402.35,445.25 M1674.68,470.49 L1688.84,503.02 M1533.65,709.36 L1557.90,706.92 M1560.84,381.13 L1562.35,379.77 M1548.32,384.65 L1553.71,383.63 M1630.46,668.24 L1651.84,653.89 M1425.33,413.27 L1428.76,418.08 M1533.77,557.27 L1574.06,554.41 M1558.42,404.12 L1571.18,402.24 M1526.43,375.39 L1493.50,377.03 M1498.61,405.20 L1513.32,405.97 M1496.12,512.36 L1532.70,512.99 M1396.19,645.32 L1412.76,660.56 M1362.68,543.77 L1364.20,575.78 M1526.43,375.39 L1553.71,383.63 M1526.43,375.39 L1506.59,373.92 M1396.31,533.94 L1422.11,544.04 M1626.83,404.84 L1621.44,400.50 M1501.31,374.80 L1496.89,375.84 M1544.81,373.28 L1538.72,372.80 M1491.90,599.01 L1534.55,600.19 M1531.43,471.04 L1561.75,469.40 M1641.95,538.90 L1647.51,578.43 M1419.13,620.48 L1425.54,650.78 M1530.07,434.64 L1531.43,471.04 M1520.02,386.29 L1527.49,386.30 M1655.27,433.17 L1675.78,460.84 M1571.18,402.24 L1593.61,427.98 M1381.92,476.57 L1391.53,486.20 M1597.07,391.36 L1628.61,409.53 M1465.44,399.42 L1474.13,401.82 M1422.11,544.04 L1417.81,584.16 M1496.04,383.50 L1465.44,399.42 M1576.73,596.84 L1576.82,634.69 M1613.92,460.79 L1630.48,498.68 M1576.82,634.69 L1574.52,665.47 M1526.43,375.39 L1554.96,374.86 M1391.06,572.08 L1392.53,607.10 M1628.61,409.53 L1655.27,433.17 M1425.54,650.78 L1436.12,673.76 M1526.43,375.39 L1490.87,381.00 M1465.40,683.85 L1499.04,689.89 M1589.70,397.20 L1594.83,394.31 M1417.81,584.16 L1419.13,620.48 M1544.03,405.42 L1558.42,404.12 M1558.65,375.92 L1587.87,383.30 M1408.26,495.23 L1396.31,533.94 M1396.31,533.94 L1391.06,572.08 M1526.43,375.39 L1492.77,382.30 M1464.95,430.43 L1446.65,464.20 M1534.55,600.19 L1534.98,638.32 M1526.43,375.39 L1496.89,375.84 M1594.83,394.31 L1626.35,414.41 M1526.43,375.39 L1512.53,373.25 M1531.43,471.04 L1532.70,512.99 M1400.11,637.02 L1412.76,660.56 M1641.95,538.90 L1665.56,527.75 M1608.79,423.89 L1619.77,419.28 M1561.19,377.12 L1593.35,385.76 M1490.39,379.65 L1456.33,390.94 M1647.51,578.43 L1671.92,565.21 M1530.07,434.64 L1553.20,433.56 M1391.53,486.20 L1378.44,522.34 M1526.43,375.39 L1538.72,372.80 M1400.11,637.02 L1425.54,650.78 M1499.04,689.89 L1534.83,691.27 M1503.84,703.26 L1509.16,708.37 M1448.71,426.92 L1464.95,430.43 M1422.11,544.04 L1454.96,551.77 M1593.35,385.76 L1621.44,400.50 M1541.96,385.47 L1558.42,404.12 M1496.12,512.36 L1493.05,556.35 M1496.04,383.50 L1500.60,384.55 M1493.05,556.35 L1491.90,599.01 M1602.80,679.89 L1630.46,668.24 M1613.92,460.79 L1632.91,454.54 M1589.81,465.88 L1602.22,505.81 M1465.40,683.85 L1475.05,697.93 M1491.29,378.31 L1490.39,379.65 M1534.98,638.32 L1535.07,669.14 M1425.54,650.78 L1457.82,661.36 M1558.65,375.92 L1554.96,374.86 M1630.48,498.68 L1641.95,538.90 M1688.84,503.02 L1689.33,490.90 M1464.95,430.43 L1484.62,433.01 M1581.75,399.89 L1589.70,397.20 M1589.81,465.88 L1613.92,460.79 M1526.43,375.39 L1506.27,385.38 M1667.03,480.37 L1674.68,470.49 M1452.06,593.46 L1491.90,599.01 M1378.44,522.34 L1372.69,558.28 M1518.93,372.79 L1512.53,373.25 M1526.43,375.39 L1562.46,378.42 M1512.84,385.97 L1520.02,386.29 M1400.96,431.17 L1399.06,438.12 M1490.39,379.65 L1490.87,381.00 M1671.30,599.91 L1664.26,629.90 M1532.70,512.99 L1568.92,510.73 M1379.02,466.89 L1381.92,476.57 M1509.16,708.37 L1533.65,709.36 M1626.35,414.41 L1653.50,440.33 M1448.71,426.92 L1426.17,458.70 M1616.42,684.15 L1600.09,692.74 M1541.96,385.47 L1548.32,384.65 M1493.05,556.35 L1533.77,557.27 M1568.92,510.73 L1602.22,505.81 M1491.29,378.31 L1458.79,388.11 M1526.43,375.39 L1500.60,384.55 M1500.83,470.65 L1496.12,512.36 M1688.84,503.02 L1695.50,536.00 M1641.06,644.85 L1630.46,668.24 M1526.43,375.39 L1532.24,372.56 M1592.45,694.48 L1580.47,701.23 M1475.05,697.93 L1485.94,704.03 M1647.51,578.43 L1647.05,614.47 M1456.33,390.94 L1426.03,408.49 M1628.61,409.53 L1626.83,404.84 M1602.22,505.81 L1610.93,548.07 M1500.83,470.65 L1531.43,471.04 M1461.78,508.91 L1454.96,551.77 M1610.93,548.07 L1615.24,589.32 M1378.44,522.34 L1396.31,533.94 M1400.96,431.17 L1382.12,457.59 M1506.75,434.45 L1500.83,470.65 M1695.50,536.00 L1694.77,567.65 M1615.24,589.32 L1647.51,578.43 M1407.41,424.66 L1400.96,431.17 M1512.84,385.97 L1498.61,405.20 M1653.50,440.33 L1674.68,470.49 M1610.63,657.09 L1602.80,679.89 M1381.92,476.57 L1368.54,510.09 M1534.34,704.48 L1564.53,701.46 M1675.78,460.84 L1671.11,451.80 M1535.07,669.14 L1534.83,691.27 M1459.54,396.71 L1465.44,399.42 M1576.73,596.84 L1615.24,589.32 M1534.83,691.27 L1534.34,704.48 M1471.98,468.30 L1461.78,508.91 M1626.35,414.41 L1628.61,409.53 M1562.46,378.42 L1596.51,388.48 M1492.77,382.30 L1459.54,396.71 M1426.03,408.49 L1400.96,431.17 M1653.50,440.33 L1655.27,433.17 M1610.63,657.09 L1641.06,644.85 M1498.61,405.20 L1484.62,433.01 M1484.62,433.01 L1471.98,468.30 M1570.25,687.82 L1564.53,701.46 M1535.07,669.14 L1574.52,665.47 M1561.19,377.12 L1558.65,375.92 M1471.98,468.30 L1500.83,470.65 M1436.55,422.71 L1411.32,452.25 M1513.32,405.97 L1506.75,434.45 M1652.30,489.98 L1667.03,480.37 M1526.43,375.39 L1548.32,384.65 M1458.79,388.11 L1430.46,403.94 M1490.87,381.00 L1456.52,393.84 M1564.53,701.46 L1557.90,706.92 M1528.73,406.05 L1544.03,405.42 M1561.75,469.40 L1568.92,510.73 M1651.84,653.89 L1635.27,671.30 M1456.52,393.84 L1459.54,396.71 M1610.93,548.07 L1641.95,538.90 M1506.75,434.45 L1530.07,434.64 M1534.92,386.03 L1544.03,405.42 M1593.61,427.98 L1613.92,460.79 M1449.74,688.98 L1475.05,697.93 M1474.13,401.82 L1485.34,403.79 M1562.46,378.42 L1561.19,377.12 M1492.77,382.30 L1496.04,383.50 M1426.03,408.49 L1425.33,413.27 M1431.96,503.01 L1461.78,508.91 M1372.69,558.28 L1391.06,572.08 M1671.92,565.21 L1687.84,550.74 M1561.75,469.40 L1589.81,465.88 M1558.42,404.12 L1574.78,431.28 M1485.94,704.03 L1509.16,708.37 M1574.78,431.28 L1589.81,465.88 M1436.55,422.71 L1448.71,426.92 M1492.68,636.96 L1495.18,667.71 M1694.77,567.65 L1687.25,596.50 M1506.59,373.92 L1501.31,374.80 M1392.53,607.10 L1400.11,637.02 M1596.51,388.48 L1593.35,385.76 M1667.03,480.37 L1681.14,515.52 M1526.43,375.39 L1558.65,375.92 M1557.90,706.92 L1580.47,701.23 M1526.43,375.39 L1562.35,379.77 M1526.43,375.39 L1541.96,385.47 M1641.06,644.85 L1664.26,629.90 M1495.18,667.71 L1499.04,689.89 M1457.82,661.36 L1495.18,667.71 M1570.25,687.82 L1602.80,679.89 M1491.90,599.01 L1492.68,636.96 M1652.30,489.98 L1665.56,527.75 M1593.61,427.98 L1608.79,423.89 M1493.50,377.03 L1463.67,385.46 M1526.43,375.39 L1518.93,372.79 M1544.03,405.42 L1553.20,433.56 M1619.77,419.28 L1646.14,447.58 M1465.44,399.42 L1436.55,422.71 M1495.18,667.71 L1535.07,669.14 M1557.93,382.43 L1589.70,397.20 M1632.91,454.54 L1652.30,489.98 M1430.46,403.94 L1426.03,408.49 M1553.71,383.63 L1581.75,399.89 M1526.43,375.39 L1527.49,386.30 M1362.68,543.77 L1372.69,558.28 M1527.49,386.30 L1528.73,406.05 M1534.83,691.27 L1570.25,687.82 M1646.14,447.58 L1667.03,480.37 M1454.96,551.77 L1452.06,593.46 M1411.32,452.25 L1391.53,486.20 M1632.91,454.54 L1646.14,447.58 M1589.70,397.20 L1619.77,419.28 M1484.62,433.01 L1506.75,434.45 M1512.53,373.25 L1506.59,373.92 M1412.76,660.56 L1436.12,673.76 M1368.54,510.09 L1362.68,543.77 M1646.14,447.58 L1653.50,440.33 M1436.12,673.76 L1449.74,688.98 M1485.34,403.79 L1498.61,405.20 M1411.32,452.25 L1426.17,458.70 M1457.82,661.36 L1465.40,683.85 M1372.69,558.28 L1374.22,591.83 M1490.87,381.00 L1492.77,382.30 M1554.96,374.86 L1550.28,373.97 M1597.07,391.36 L1596.51,388.48 M1370.04,486.27 L1366.04,497.88 M1493.50,377.03 L1491.29,378.31 M1651.84,653.89 L1666.30,637.95 M1463.67,385.46 L1458.79,388.11 M1674.68,470.49 L1675.78,460.84 M1687.84,550.74 L1695.50,536.00 M1574.52,665.47 L1610.63,657.09 M1360.39,529.39 L1362.68,543.77 M1429.24,677.18 L1449.74,688.98 M1550.28,373.97 L1544.81,373.28 M1647.05,614.47 L1641.06,644.85 M1557.93,382.43 L1560.84,381.13 M1553.20,433.56 L1574.78,431.28 M1408.26,495.23 L1431.96,503.01 M1581.75,399.89 L1608.79,423.89 M1574.06,554.41 L1576.73,596.84 M1526.43,375.39 L1520.02,386.29 M1534.92,386.03 L1541.96,385.47 M1615.24,589.32 L1615.02,626.45 M1616.42,684.15 L1635.27,671.30 M1452.06,593.46 L1453.14,630.78 M1615.02,626.45 L1610.63,657.09 M1503.84,703.26 L1534.34,704.48 M1412.76,660.56 L1429.24,677.18 M1368.54,510.09 L1378.44,522.34 M1402.35,445.25 L1381.92,476.57 M1574.52,665.47 L1570.25,687.82 M1574.78,431.28 L1593.61,427.98 M1534.34,704.48 L1533.65,709.36 M1459.54,396.71 L1428.76,418.08 M1568.92,510.73 L1574.06,554.41 M1526.43,375.39 L1490.39,379.65 M1449.74,688.98 L1465.30,696.69 M1532.70,512.99 L1533.77,557.27 M1402.35,445.25 L1411.32,452.25 M1379.02,466.89 L1366.04,497.88 M1526.43,375.39 L1512.84,385.97 M1554.96,374.86 L1580.38,381.17 M1553.20,433.56 L1561.75,469.40 M1526.43,375.39 L1525.57,372.56 M1679.62,613.41 L1666.30,637.95 M1428.76,418.08 L1402.35,445.25 M1431.96,503.01 L1422.11,544.04 M1382.40,621.24 L1396.19,645.32 M1456.33,390.94 L1456.52,393.84 M1562.35,379.77 L1597.07,391.36 M1366.04,497.88 L1360.39,529.39 M1526.43,375.39 L1544.81,373.28 M1391.06,572.08 L1417.81,584.16 M1526.43,375.39 L1491.29,378.31 M1679.62,613.41 L1687.25,596.50 M1382.40,621.24 L1400.11,637.02 M1499.04,689.89 L1503.84,703.26 M1630.48,498.68 L1652.30,489.98 M1446.65,464.20 L1431.96,503.01 M1596.51,388.48 L1626.83,404.84 M1652.01,426.39 L1671.11,451.80 M1506.27,385.38 L1485.34,403.79 M1526.43,375.39 L1560.84,381.13 M1560.84,381.13 L1594.83,394.31 M1687.13,583.95 L1679.62,613.41 M1534.55,600.19 L1576.73,596.84 M1594.83,394.31 L1597.07,391.36 M1533.77,557.27 L1534.55,600.19 M1553.71,383.63 L1557.93,382.43 M1527.49,386.30 L1534.92,386.03 M1665.56,527.75 L1681.14,515.52 M1681.14,515.52 L1687.84,550.74 M1500.60,384.55 L1474.13,401.82 M1454.96,551.77 L1493.05,556.35 M1436.12,673.76 L1465.40,683.85 M1538.72,372.80 L1532.24,372.56 M1548.32,384.65 L1571.18,402.24 M1496.89,375.84 L1470.63,383.06 M1391.53,486.20 L1408.26,495.23 M1571.18,402.24 L1581.75,399.89 M1500.60,384.55 L1506.27,385.38 M1428.76,418.08 L1436.55,422.71 M1664.26,629.90 L1679.62,613.41 M1574.06,554.41 L1610.93,548.07 M1593.35,385.76 L1587.87,383.30 M1562.35,379.77 L1562.46,378.42 M1426.17,458.70 L1446.65,464.20 M1417.81,584.16 L1452.06,593.46 M1475.05,697.93 L1503.84,703.26 M1506.27,385.38 L1512.84,385.97 M1528.73,406.05 L1530.07,434.64 M1526.43,375.39 L1561.19,377.12 M1456.52,393.84 L1425.33,413.27 M1461.78,508.91 L1496.12,512.36 M1453.14,630.78 L1457.82,661.36 M1382.12,457.59 L1379.02,466.89 M1485.34,403.79 L1464.95,430.43 M1374.22,591.83 L1382.40,621.24 M1526.43,375.39 L1557.93,382.43 M1526.43,375.39 L1534.92,386.03 M1526.43,375.39 L1496.04,383.50 M1665.56,527.75 L1671.92,565.21 M1681.14,515.52 L1688.84,503.02 M1496.89,375.84 L1493.50,377.03 M1513.32,405.97 L1528.73,406.05 M1664.26,629.90 L1651.84,653.89 M1687.84,550.74 L1687.13,583.95 M1474.13,401.82 L1448.71,426.92 M1630.46,668.24 L1616.42,684.15 M1425.33,413.27 L1399.06,438.12" stroke="#ffa000" stroke-width="0.95" fill="none"/>
<path d="M1576.82,634.69 L1615.02,626.45 M1374.22,591.83 L1392.53,607.10 M1364.20,575.78 L1374.22,591.83 M1687.13,583.95 L1694.77,567.65 M1534.98,638.32 L1576.82,634.69 M1361.85,559.87 L1364.20,575.78 M1392.53,607.10 L1419.13,620.48 M1419.13,620.48 L1453.14,630.78 M1671.30,599.91 L1687.13,583.95 M1492.68,636.96 L1534.98,638.32 M1647.05,614.47 L1671.30,599.91 M1453.14,630.78 L1492.68,636.96 M1615.02,626.45 L1647.05,614.47" stroke="#ff3000" stroke-width="1.2" fill="none"/>
<path d="M1525.03,373.99 h2.8 v2.8 h-2.8 Z M1540.56,384.07 h2.8 v2.8 h-2.8 Z M1546.92,383.25 h2.8 v2.8 h-2.8 Z M1552.31,382.23 h2.8 v2.8 h-2.8 Z M1556.53,381.03 h2.8 v2.8 h-2.8 Z M1559.44,379.73 h2.8 v2.8 h-2.8 Z M1560.95,378.37 h2.8 v2.8 h-2.8 Z M1561.06,377.02 h2.8 v2.8 h-2.8 Z M1559.79,375.72 h2.8 v2.8 h-2.8 Z M1557.25,374.52 h2.8 v2.8 h-2.8 Z M1553.56,373.46 h2.8 v2.8 h-2.8 Z M1548.88,372.57 h2.8 v2.8 h-2.8 Z M1543.41,371.88 h2.8 v2.8 h-2.8 Z M1505.19,372.52 h2.8 v2.8 h-2.8 Z M1499.91,373.40 h2.8 v2.8 h-2.8 Z M1495.49,374.44 h2.8 v2.8 h-2.8 Z M1492.10,375.63 h2.8 v2.8 h-2.8 Z M1489.89,376.91 h2.8 v2.8 h-2.8 Z M1488.99,378.25 h2.8 v2.8 h-2.8 Z M1489.47,379.60 h2.8 v2.8 h-2.8 Z M1491.37,380.90 h2.8 v2.8 h-2.8 Z M1494.64,382.10 h2.8 v2.8 h-2.8 Z M1499.20,383.15 h2.8 v2.8 h-2.8 Z M1504.87,383.98 h2.8 v2.8 h-2.8 Z M1511.44,384.57 h2.8 v2.8 h-2.8 Z M1518.62,384.89 h2.8 v2.8 h-2.8 Z M1526.09,384.90 h2.8 v2.8 h-2.8 Z M1533.52,384.63 h2.8 v2.8 h-2.8 Z M1557.02,402.72 h2.8 v2.8 h-2.8 Z M1569.78,400.84 h2.8 v2.8 h-2.8 Z M1580.35,398.49 h2.8 v2.8 h-2.8 Z M1588.30,395.80 h2.8 v2.8 h-2.8 Z M1593.43,392.91 h2.8 v2.8 h-2.8 Z M1595.67,389.96 h2.8 v2.8 h-2.8 Z M1595.11,387.08 h2.8 v2.8 h-2.8 Z M1591.95,384.36 h2.8 v2.8 h-2.8 Z M1462.27,384.06 h2.8 v2.8 h-2.8 Z M1457.39,386.71 h2.8 v2.8 h-2.8 Z M1454.93,389.54 h2.8 v2.8 h-2.8 Z M1455.12,392.44 h2.8 v2.8 h-2.8 Z M1458.14,395.31 h2.8 v2.8 h-2.8 Z M1464.04,398.02 h2.8 v2.8 h-2.8 Z M1472.73,400.42 h2.8 v2.8 h-2.8 Z M1483.94,402.39 h2.8 v2.8 h-2.8 Z M1497.21,403.80 h2.8 v2.8 h-2.8 Z M1511.92,404.57 h2.8 v2.8 h-2.8 Z M1527.33,404.65 h2.8 v2.8 h-2.8 Z M1542.63,404.02 h2.8 v2.8 h-2.8 Z M1573.38,429.88 h2.8 v2.8 h-2.8 Z M1592.21,426.58 h2.8 v2.8 h-2.8 Z M1607.39,422.49 h2.8 v2.8 h-2.8 Z M1618.37,417.88 h2.8 v2.8 h-2.8 Z M1624.95,413.01 h2.8 v2.8 h-2.8 Z M1627.21,408.13 h2.8 v2.8 h-2.8 Z M1625.43,403.44 h2.8 v2.8 h-2.8 Z M1429.06,402.54 h2.8 v2.8 h-2.8 Z M1424.63,407.09 h2.8 v2.8 h-2.8 Z M1423.93,411.87 h2.8 v2.8 h-2.8 Z M1427.36,416.68 h2.8 v2.8 h-2.8 Z M1435.15,421.31 h2.8 v2.8 h-2.8 Z M1447.31,425.52 h2.8 v2.8 h-2.8 Z M1463.55,429.03 h2.8 v2.8 h-2.8 Z M1483.22,431.61 h2.8 v2.8 h-2.8 Z M1505.35,433.05 h2.8 v2.8 h-2.8 Z M1528.67,433.24 h2.8 v2.8 h-2.8 Z M1551.80,432.16 h2.8 v2.8 h-2.8 Z M1588.41,464.48 h2.8 v2.8 h-2.8 Z M1612.52,459.39 h2.8 v2.8 h-2.8 Z M1631.51,453.14 h2.8 v2.8 h-2.8 Z M1644.74,446.18 h2.8 v2.8 h-2.8 Z M1652.10,438.93 h2.8 v2.8 h-2.8 Z M1653.87,431.77 h2.8 v2.8 h-2.8 Z M1650.61,424.99 h2.8 v2.8 h-2.8 Z M1399.56,429.77 h2.8 v2.8 h-2.8 Z M1397.66,436.72 h2.8 v2.8 h-2.8 Z M1400.95,443.85 h2.8 v2.8 h-2.8 Z M1409.92,450.85 h2.8 v2.8 h-2.8 Z M1424.77,457.30 h2.8 v2.8 h-2.8 Z M1445.25,462.80 h2.8 v2.8 h-2.8 Z M1470.58,466.90 h2.8 v2.8 h-2.8 Z M1499.43,469.25 h2.8 v2.8 h-2.8 Z M1530.03,469.64 h2.8 v2.8 h-2.8 Z M1560.35,468.00 h2.8 v2.8 h-2.8 Z M1600.82,504.41 h2.8 v2.8 h-2.8 Z M1629.08,497.28 h2.8 v2.8 h-2.8 Z M1650.90,488.58 h2.8 v2.8 h-2.8 Z M1665.63,478.97 h2.8 v2.8 h-2.8 Z M1673.28,469.09 h2.8 v2.8 h-2.8 Z M1674.38,459.44 h2.8 v2.8 h-2.8 Z M1377.62,465.49 h2.8 v2.8 h-2.8 Z M1380.52,475.17 h2.8 v2.8 h-2.8 Z M1390.13,484.80 h2.8 v2.8 h-2.8 Z M1406.86,493.83 h2.8 v2.8 h-2.8 Z M1430.56,501.61 h2.8 v2.8 h-2.8 Z M1460.38,507.51 h2.8 v2.8 h-2.8 Z M1494.72,510.96 h2.8 v2.8 h-2.8 Z M1531.30,511.59 h2.8 v2.8 h-2.8 Z M1567.52,509.33 h2.8 v2.8 h-2.8 Z M1609.53,546.67 h2.8 v2.8 h-2.8 Z M1640.55,537.50 h2.8 v2.8 h-2.8 Z M1664.16,526.35 h2.8 v2.8 h-2.8 Z M1679.74,514.12 h2.8 v2.8 h-2.8 Z M1687.44,501.62 h2.8 v2.8 h-2.8 Z M1687.93,489.50 h2.8 v2.8 h-2.8 Z M1364.64,496.48 h2.8 v2.8 h-2.8 Z M1367.14,508.69 h2.8 v2.8 h-2.8 Z M1377.04,520.94 h2.8 v2.8 h-2.8 Z M1394.91,532.54 h2.8 v2.8 h-2.8 Z M1420.71,542.64 h2.8 v2.8 h-2.8 Z M1453.56,550.37 h2.8 v2.8 h-2.8 Z M1491.65,554.95 h2.8 v2.8 h-2.8 Z M1532.37,555.87 h2.8 v2.8 h-2.8 Z M1572.66,553.01 h2.8 v2.8 h-2.8 Z M1613.84,587.92 h2.8 v2.8 h-2.8 Z M1646.11,577.03 h2.8 v2.8 h-2.8 Z M1670.52,563.81 h2.8 v2.8 h-2.8 Z M1686.44,549.34 h2.8 v2.8 h-2.8 Z M1694.10,534.60 h2.8 v2.8 h-2.8 Z M1361.28,542.37 h2.8 v2.8 h-2.8 Z M1371.29,556.88 h2.8 v2.8 h-2.8 Z M1389.66,570.68 h2.8 v2.8 h-2.8 Z M1416.41,582.76 h2.8 v2.8 h-2.8 Z M1450.66,592.06 h2.8 v2.8 h-2.8 Z M1490.50,597.61 h2.8 v2.8 h-2.8 Z M1533.15,598.79 h2.8 v2.8 h-2.8 Z M1575.33,595.44 h2.8 v2.8 h-2.8 Z M1613.62,625.05 h2.8 v2.8 h-2.8 Z M1645.65,613.07 h2.8 v2.8 h-2.8 Z M1669.90,598.51 h2.8 v2.8 h-2.8 Z M1685.73,582.55 h2.8 v2.8 h-2.8 Z M1693.37,566.25 h2.8 v2.8 h-2.8 Z M1362.80,574.38 h2.8 v2.8 h-2.8 Z M1372.82,590.43 h2.8 v2.8 h-2.8 Z M1391.13,605.70 h2.8 v2.8 h-2.8 Z M1417.73,619.08 h2.8 v2.8 h-2.8 Z M1451.74,629.38 h2.8 v2.8 h-2.8 Z M1491.28,635.56 h2.8 v2.8 h-2.8 Z M1533.58,636.92 h2.8 v2.8 h-2.8 Z M1575.42,633.29 h2.8 v2.8 h-2.8 Z M1609.23,655.69 h2.8 v2.8 h-2.8 Z M1639.66,643.45 h2.8 v2.8 h-2.8 Z M1662.86,628.50 h2.8 v2.8 h-2.8 Z M1678.22,612.01 h2.8 v2.8 h-2.8 Z M1381.00,619.84 h2.8 v2.8 h-2.8 Z M1398.71,635.62 h2.8 v2.8 h-2.8 Z M1424.14,649.38 h2.8 v2.8 h-2.8 Z M1456.42,659.96 h2.8 v2.8 h-2.8 Z M1493.78,666.31 h2.8 v2.8 h-2.8 Z M1533.67,667.74 h2.8 v2.8 h-2.8 Z M1573.12,664.07 h2.8 v2.8 h-2.8 Z M1601.40,678.49 h2.8 v2.8 h-2.8 Z M1629.06,666.84 h2.8 v2.8 h-2.8 Z M1650.44,652.49 h2.8 v2.8 h-2.8 Z M1394.79,643.92 h2.8 v2.8 h-2.8 Z M1411.36,659.16 h2.8 v2.8 h-2.8 Z M1434.72,672.36 h2.8 v2.8 h-2.8 Z M1464.00,682.45 h2.8 v2.8 h-2.8 Z M1497.64,688.49 h2.8 v2.8 h-2.8 Z M1533.43,689.87 h2.8 v2.8 h-2.8 Z M1568.85,686.42 h2.8 v2.8 h-2.8 Z M1591.05,693.08 h2.8 v2.8 h-2.8 Z M1615.02,682.75 h2.8 v2.8 h-2.8 Z M1427.84,675.78 h2.8 v2.8 h-2.8 Z M1448.34,687.58 h2.8 v2.8 h-2.8 Z M1473.65,696.53 h2.8 v2.8 h-2.8 Z M1502.44,701.86 h2.8 v2.8 h-2.8 Z M1532.94,703.08 h2.8 v2.8 h-2.8 Z M1563.13,700.06 h2.8 v2.8 h-2.8 Z M1507.76,706.97 h2.8 v2.8 h-2.8 Z M1532.25,707.96 h2.8 v2.8 h-2.8 Z M1556.50,705.52 h2.8 v2.8 h-2.8 Z" fill="#ff9a00"/>
<line x1="1528" y1="523" x2="1527.5" y2="470" stroke="#0000ff" stroke-width="1.6"/>
<path d="M1524.5,477 L1527,460 L1530.5,477 Q1527.5,480 1524.5,477 Z" fill="#0000ff"/>
<line x1="1545" y1="537" x2="1585" y2="529" stroke="#00dd00" stroke-width="1.3"/>
<path d="M1582,524 L1596,527 L1583,533 Z" fill="#00dd00"/>
<line x1="1537" y1="550" x2="1558" y2="568" stroke="#ff0000" stroke-width="1.3"/>
<path d="M1554,571 L1567,578 L1563,565 Z" fill="#ff0000"/>
<circle cx="1528" cy="540" r="14.5" fill="none" stroke="#ffffff" stroke-width="1.3"/>
<circle cx="1528" cy="540" r="3.5" fill="#f0a040" stroke="#000" stroke-width="1.2"/>
</g>
<text x="1157.5" y="49" font-size="11" fill="#f0f0f0" stroke="#f0f0f0" stroke-width="0.22" text-anchor="start" textLength="52" lengthAdjust="spacingAndGlyphs" >User Persp</text>
<text x="1207.5" y="1044" font-size="11" fill="#f0f0f0" stroke="#f0f0f0" stroke-width="0.22" text-anchor="start" textLength="51" lengthAdjust="spacingAndGlyphs" >(1) Sphere</text>
<line x1="1163.5" y1="1028" x2="1163.5" y2="1005" stroke="#0000ff" stroke-width="1.6"/>
<line x1="1163.5" y1="1028" x2="1185.5" y2="1022.5" stroke="#00dd00" stroke-width="2"/>
<line x1="1163.5" y1="1028" x2="1173.0" y2="1037" stroke="#ee0000" stroke-width="1.6"/>
<text x="1165.5" y="1003" font-size="11" fill="#0000ff" stroke="#0000ff" stroke-width="0.22" text-anchor="start" >z</text>
<text x="1188" y="1022" font-size="11" fill="#00c000" stroke="#00c000" stroke-width="0.22" text-anchor="start" >y</text>
<text x="1176.5" y="1036" font-size="11" fill="#d00000" stroke="#d00000" stroke-width="0.22" text-anchor="start" >x</text>
<rect x="1919" y="27" width="1" height="1027" fill="#2e2e2e" />
<path d="M1919,49.5 h-11 a4,4 0 0 0 -4,4 v6 a4,4 0 0 0 4,4 h11 Z" fill="#2c2c2c"/>
<path d="M1908,57 h6 M1911,54 v6" stroke="#8a8a8a" stroke-width="2.2"/>
<line x1="1908" y1="29" x2="1919" y2="40" stroke="#9a9a9a" stroke-width="1"/>
<line x1="1909.5" y1="29" x2="1919" y2="38.5" stroke="#111" stroke-width="1" stroke-opacity="0.8"/>
<line x1="1911" y1="29" x2="1919" y2="37" stroke="#9a9a9a" stroke-width="1"/>
<line x1="1912.5" y1="29" x2="1919" y2="35.5" stroke="#111" stroke-width="1" stroke-opacity="0.8"/>
<line x1="1914" y1="29" x2="1919" y2="34" stroke="#9a9a9a" stroke-width="1"/>
<line x1="1915.5" y1="29" x2="1919" y2="32.5" stroke="#111" stroke-width="1" stroke-opacity="0.8"/>
<line x1="1917" y1="29" x2="1919" y2="31" stroke="#9a9a9a" stroke-width="1"/>
<line x1="1918.5" y1="29" x2="1919" y2="29.5" stroke="#111" stroke-width="1" stroke-opacity="0.8"/>
</g>
<rect x="977" y="28" width="19" height="906" fill="#4c4c4c" />
<rect x="977" y="28" width="1.5" height="906" fill="#6e6e6e" />
<path d="M984.50,34.00 H997.50 V69.00 H984.50 A5.00,5.00 0 0 1 979.50,64.00 V39.00 A5.00,5.00 0 0 1 984.50,34.00 Z" fill="#727272"/>
<text x="0" y="0" font-size="11" fill="#000" text-anchor="middle" transform="translate(992,51.5) rotate(-90)">Tools</text>
<path d="M984.50,74.00 H997.50 V118.00 H984.50 A5.00,5.00 0 0 1 979.50,113.00 V79.00 A5.00,5.00 0 0 1 984.50,74.00 Z" fill="#666666"/>
<text x="0" y="0" font-size="11" fill="#000" text-anchor="middle" transform="translate(992,96.0) rotate(-90)">Create</text>
<path d="M984.50,124.00 H997.50 V202.00 H984.50 A5.00,5.00 0 0 1 979.50,197.00 V129.00 A5.00,5.00 0 0 1 984.50,124.00 Z" fill="#666666"/>
<text x="0" y="0" font-size="11" fill="#000" text-anchor="middle" transform="translate(992,163.0) rotate(-90)">Shading / UVs</text>
<path d="M984.50,208.00 H997.50 V256.00 H984.50 A5.00,5.00 0 0 1 979.50,251.00 V213.00 A5.00,5.00 0 0 1 984.50,208.00 Z" fill="#666666"/>
<text x="0" y="0" font-size="11" fill="#000" text-anchor="middle" transform="translate(992,232.0) rotate(-90)">Options</text>
<path d="M984.50,261.00 H997.50 V339.00 H984.50 A5.00,5.00 0 0 1 979.50,334.00 V266.00 A5.00,5.00 0 0 1 984.50,261.00 Z" fill="#666666"/>
<text x="0" y="0" font-size="11" fill="#000" text-anchor="middle" transform="translate(992,300.0) rotate(-90)">Grease Pencil</text>
<rect x="996" y="28" width="140" height="906" fill="#727272" />
<rect x="1136" y="28" width="1" height="1025" fill="#7a7a7a" />
<rect x="977" y="934" width="159" height="119" fill="#727272" />
<rect x="977" y="1053" width="159" height="1" fill="#6a6a6a" />
<rect x="977" y="934" width="159" height="1" fill="#888888" />
<path d="M989.5,943 L997.5,943 L993.5,951 Z" fill="#1a1a1a"/>
<text x="1001.5" y="951" font-size="12" fill="#000" stroke="#000" stroke-width="0.22" text-anchor="start" textLength="76.62" lengthAdjust="spacingAndGlyphs" >Set 2D Cursor</text>
<rect x="1116" y="946" width="1" height="1" fill="#dcdcdc" />
<rect x="1116" y="947" width="1" height="1" fill="#1e1e1e" />
<rect x="1116" y="949" width="1" height="1" fill="#dcdcdc" />
<rect x="1116" y="950" width="1" height="1" fill="#1e1e1e" />
<rect x="1119" y="946" width="1" height="1" fill="#dcdcdc" />
<rect x="1119" y="947" width="1" height="1" fill="#1e1e1e" />
<rect x="1119" y="949" width="1" height="1" fill="#dcdcdc" />
<rect x="1119" y="950" width="1" height="1" fill="#1e1e1e" />
<rect x="1122" y="946" width="1" height="1" fill="#dcdcdc" />
<rect x="1122" y="947" width="1" height="1" fill="#1e1e1e" />
<rect x="1122" y="949" width="1" height="1" fill="#dcdcdc" />
<rect x="1122" y="950" width="1" height="1" fill="#1e1e1e" />
<rect x="1125" y="946" width="1" height="1" fill="#dcdcdc" />
<rect x="1125" y="947" width="1" height="1" fill="#1e1e1e" />
<rect x="1125" y="949" width="1" height="1" fill="#dcdcdc" />
<rect x="1125" y="950" width="1" height="1" fill="#1e1e1e" />
<path d="M1010,35 L1018,35 L1014,43 Z" fill="#1a1a1a"/>
<text x="1022" y="43" font-size="12" fill="#000" stroke="#000" stroke-width="0.22" text-anchor="start" >Transform</text>
<rect x="1116" y="38" width="1" height="1" fill="#dcdcdc" />
<rect x="1116" y="39" width="1" height="1" fill="#1e1e1e" />
<rect x="1116" y="41" width="1" height="1" fill="#dcdcdc" />
<rect x="1116" y="42" width="1" height="1" fill="#1e1e1e" />
<rect x="1119" y="38" width="1" height="1" fill="#dcdcdc" />
<rect x="1119" y="39" width="1" height="1" fill="#1e1e1e" />
<rect x="1119" y="41" width="1" height="1" fill="#dcdcdc" />
<rect x="1119" y="42" width="1" height="1" fill="#1e1e1e" />
<rect x="1122" y="38" width="1" height="1" fill="#dcdcdc" />
<rect x="1122" y="39" width="1" height="1" fill="#1e1e1e" />
<rect x="1122" y="41" width="1" height="1" fill="#dcdcdc" />
<rect x="1122" y="42" width="1" height="1" fill="#1e1e1e" />
<rect x="1125" y="38" width="1" height="1" fill="#dcdcdc" />
<rect x="1125" y="39" width="1" height="1" fill="#1e1e1e" />
<rect x="1125" y="41" width="1" height="1" fill="#dcdcdc" />
<rect x="1125" y="42" width="1" height="1" fill="#1e1e1e" />
<path d="M1010.00,59.50 H1124.00 A5.00,5.00 0 0 1 1129.00,64.50 V79.50 H1005.00 V64.50 A5.00,5.00 0 0 1 1010.00,59.50 Z" fill="#262626"/>
<path d="M1010.00,60.50 H1124.00 A4.00,4.00 0 0 1 1128.00,64.50 V78.50 H1006.00 V64.50 A4.00,4.00 0 0 1 1010.00,60.50 Z" fill="url(#lg1)"/>
<text x="1013.5" y="74" font-size="11" fill="#000000" stroke="#000000" stroke-width="0.22" text-anchor="start" >Translate</text>
<path d="M1005.00,78.50 H1129.00 V99.50 H1005.00 V78.50 Z" fill="#262626"/>
<path d="M1006.00,79.50 H1128.00 V98.50 H1006.00 V79.50 Z" fill="url(#lg1)"/>
<text x="1013.5" y="93" font-size="11" fill="#000000" stroke="#000000" stroke-width="0.22" text-anchor="start" >Rotate</text>
<path d="M1005.00,98.50 H1129.00 V119.50 H1005.00 V98.50 Z" fill="#262626"/>
<path d="M1006.00,99.50 H1128.00 V118.50 H1006.00 V99.50 Z" fill="url(#lg1)"/>
<text x="1013.5" y="113" font-size="11" fill="#000000" stroke="#000000" stroke-width="0.22" text-anchor="start" >Scale</text>
<path d="M1005.00,118.50 H1129.00 V139.50 H1005.00 V118.50 Z" fill="#262626"/>
<path d="M1006.00,119.50 H1128.00 V138.50 H1006.00 V119.50 Z" fill="url(#lg1)"/>
<text x="1013.5" y="133" font-size="11" fill="#000000" stroke="#000000" stroke-width="0.22" text-anchor="start" >Shrink/Fatten</text>
<path d="M1005.00,139.50 H1129.00 V155.50 A5.00,5.00 0 0 1 1124.00,160.50 H1010.00 A5.00,5.00 0 0 1 1005.00,155.50 V139.50 Z" fill="#ffffff" fill-opacity="0.1"/>
<path d="M1005.00,138.50 H1129.00 V154.50 A5.00,5.00 0 0 1 1124.00,159.50 H1010.00 A5.00,5.00 0 0 1 1005.00,154.50 V138.50 Z" fill="#262626"/>
<path d="M1006.00,139.50 H1128.00 V154.50 A4.00,4.00 0 0 1 1124.00,158.50 H1010.00 A4.00,4.00 0 0 1 1006.00,154.50 V139.50 Z" fill="url(#lg1)"/>
<text x="1013.5" y="153" font-size="11" fill="#000000" stroke="#000000" stroke-width="0.22" text-anchor="start" >Push/Pull</text>
<rect x="1002" y="166" width="130" height="1" fill="#4a4a4a" />
<rect x="1002" y="167" width="130" height="1" fill="#888888" fill-opacity="0.6"/>
<path d="M1010,175 L1018,175 L1014,183 Z" fill="#1a1a1a"/>
<text x="1022" y="183" font-size="12" fill="#000" stroke="#000" stroke-width="0.22" text-anchor="start" >Mesh Tools</text>
<rect x="1116" y="178" width="1" height="1" fill="#dcdcdc" />
<rect x="1116" y="179" width="1" height="1" fill="#1e1e1e" />
<rect x="1116" y="181" width="1" height="1" fill="#dcdcdc" />
<rect x="1116" y="182" width="1" height="1" fill="#1e1e1e" />
<rect x="1119" y="178" width="1" height="1" fill="#dcdcdc" />
<rect x="1119" y="179" width="1" height="1" fill="#1e1e1e" />
<rect x="1119" y="181" width="1" height="1" fill="#dcdcdc" />
<rect x="1119" y="182" width="1" height="1" fill="#1e1e1e" />
<rect x="1122" y="178" width="1" height="1" fill="#dcdcdc" />
<rect x="1122" y="179" width="1" height="1" fill="#1e1e1e" />
<rect x="1122" y="181" width="1" height="1" fill="#dcdcdc" />
<rect x="1122" y="182" width="1" height="1" fill="#1e1e1e" />
<rect x="1125" y="178" width="1" height="1" fill="#dcdcdc" />
<rect x="1125" y="179" width="1" height="1" fill="#1e1e1e" />
<rect x="1125" y="181" width="1" height="1" fill="#dcdcdc" />
<rect x="1125" y="182" width="1" height="1" fill="#1e1e1e" />
<text x="1013.5" y="214" font-size="11" fill="#000" stroke="#000" stroke-width="0.22" text-anchor="start" >Deform:</text>
<path d="M1010.00,219.50 H1067.00 V240.00 H1005.00 V224.50 A5.00,5.00 0 0 1 1010.00,219.50 Z" fill="#262626"/>
<path d="M1010.00,220.50 H1066.00 V239.00 H1006.00 V224.50 A4.00,4.00 0 0 1 1010.00,220.50 Z" fill="url(#lg1)"/>
<text x="1013.5" y="232.8" font-size="11" fill="#000000" stroke="#000000" stroke-width="0.22" text-anchor="start" >Slide Edg</text>
<path d="M1066.00,219.50 H1124.00 A5.00,5.00 0 0 1 1129.00,224.50 V240.00 H1066.00 V219.50 Z" fill="#262626"/>
<path d="M1067.00,220.50 H1124.00 A4.00,4.00 0 0 1 1128.00,224.50 V239.00 H1067.00 V220.50 Z" fill="url(#lg1)"/>
<text x="1074" y="232.8" font-size="11" fill="#000000" stroke="#000000" stroke-width="0.22" text-anchor="start" >Vertex</text>
<path d="M1005.00,239.50 H1129.00 V260.00 H1005.00 V239.50 Z" fill="#262626"/>
<path d="M1006.00,240.50 H1128.00 V259.00 H1006.00 V240.50 Z" fill="url(#lg1)"/>
<text x="1013.5" y="252.8" font-size="11" fill="#000000" stroke="#000000" stroke-width="0.22" text-anchor="start" >Noise</text>
<path d="M1005.00,259.50 H1129.00 V280.00 H1005.00 V259.50 Z" fill="#262626"/>
<path d="M1006.00,260.50 H1128.00 V279.00 H1006.00 V260.50 Z" fill="url(#lg1)"/>
<text x="1013.5" y="272.8" font-size="11" fill="#000000" stroke="#000000" stroke-width="0.22" text-anchor="start" >Smooth Vertex</text>
<path d="M1005.00,280.50 H1129.00 V295.50 A5.00,5.00 0 0 1 1124.00,300.50 H1010.00 A5.00,5.00 0 0 1 1005.00,295.50 V280.50 Z" fill="#ffffff" fill-opacity="0.1"/>
<path d="M1005.00,279.50 H1129.00 V294.50 A5.00,5.00 0 0 1 1124.00,299.50 H1010.00 A5.00,5.00 0 0 1 1005.00,294.50 V279.50 Z" fill="#262626"/>
<path d="M1006.00,280.50 H1128.00 V294.50 A4.00,4.00 0 0 1 1124.00,298.50 H1010.00 A4.00,4.00 0 0 1 1006.00,294.50 V280.50 Z" fill="url(#lg1)"/>
<text x="1013.5" y="292.8" font-size="11" fill="#000000" stroke="#000000" stroke-width="0.22" text-anchor="start" >Randomize</text>
<text x="1013.5" y="319" font-size="11" fill="#000" stroke="#000" stroke-width="0.22" text-anchor="start" >Add:</text>
<path d="M1010.00,324.50 H1124.00 A5.00,5.00 0 0 1 1129.00,329.50 V345.00 H1005.00 V329.50 A5.00,5.00 0 0 1 1010.00,324.50 Z" fill="#1c1c1c"/>
<path d="M1010.00,325.50 H1124.00 A4.00,4.00 0 0 1 1128.00,329.50 V344.00 H1006.00 V329.50 A4.00,4.00 0 0 1 1010.00,325.50 Z" fill="url(#lg2)"/>
<text x="1013.5" y="337.8" font-size="11" fill="#ffffff" stroke="#ffffff" stroke-width="0.22" text-anchor="start" >Extrude</text>
<path d="M1119,332.8 L1122,328.3 L1125,332.8 Z M1119,335.8 L1122,340.3 L1125,335.8 Z" fill="#c8c8c8" fill-opacity="0.8"/>
<path d="M1005.00,344.50 H1129.00 V365.00 H1005.00 V344.50 Z" fill="#262626"/>
<path d="M1006.00,345.50 H1128.00 V364.00 H1006.00 V345.50 Z" fill="url(#lg1)"/>
<text x="1013.5" y="357.8" font-size="11" fill="#000000" stroke="#000000" stroke-width="0.22" text-anchor="start" >Extrude Region</text>
<path d="M1005.00,364.50 H1129.00 V385.00 H1005.00 V364.50 Z" fill="#262626"/>
<path d="M1006.00,365.50 H1128.00 V384.00 H1006.00 V365.50 Z" fill="url(#lg1)"/>
<text x="1013.5" y="377.8" font-size="11" fill="#000000" stroke="#000000" stroke-width="0.22" text-anchor="start" >Extrude Individual</text>
<path d="M1005.00,384.50 H1129.00 V405.00 H1005.00 V384.50 Z" fill="#262626"/>
<path d="M1006.00,385.50 H1128.00 V404.00 H1006.00 V385.50 Z" fill="url(#lg1)"/>
<text x="1013.5" y="397.8" font-size="11" fill="#000000" stroke="#000000" stroke-width="0.22" text-anchor="start" >Subdivide</text>
<path d="M1005.00,404.50 H1129.00 V425.00 H1005.00 V404.50 Z" fill="#262626"/>
<path d="M1006.00,405.50 H1128.00 V424.00 H1006.00 V405.50 Z" fill="url(#lg1)"/>
<text x="1013.5" y="417.8" font-size="11" fill="#000000" stroke="#000000" stroke-width="0.22" text-anchor="start" >Loop Cut and Slide</text>
<path d="M1005.00,424.50 H1129.00 V445.00 H1005.00 V424.50 Z" fill="#262626"/>
<path d="M1006.00,425.50 H1128.00 V444.00 H1006.00 V425.50 Z" fill="url(#lg1)"/>
<text x="1013.5" y="437.8" font-size="11" fill="#000000" stroke="#000000" stroke-width="0.22" text-anchor="start" >Duplicate</text>
<path d="M1005.00,444.50 H1067.00 V465.00 H1005.00 V444.50 Z" fill="#262626"/>
<path d="M1006.00,445.50 H1066.00 V464.00 H1006.00 V445.50 Z" fill="url(#lg1)"/>
<text x="1013.5" y="457.8" font-size="11" fill="#000000" stroke="#000000" stroke-width="0.22" text-anchor="start" >Spin</text>
<path d="M1066.00,444.50 H1129.00 V465.00 H1066.00 V444.50 Z" fill="#262626"/>
<path d="M1067.00,445.50 H1128.00 V464.00 H1067.00 V445.50 Z" fill="url(#lg1)"/>
<text x="1074" y="457.8" font-size="11" fill="#000000" stroke="#000000" stroke-width="0.22" text-anchor="start" >Screw</text>
<path d="M1005.00,464.50 H1067.00 V485.00 H1005.00 V464.50 Z" fill="#262626"/>
<path d="M1006.00,465.50 H1066.00 V484.00 H1006.00 V465.50 Z" fill="url(#lg1)"/>
<text x="1013.5" y="477.8" font-size="11" fill="#000000" stroke="#000000" stroke-width="0.22" text-anchor="start" >Knife</text>
<path d="M1066.00,464.50 H1129.00 V485.00 H1066.00 V464.50 Z" fill="#262626"/>
<path d="M1067.00,465.50 H1128.00 V484.00 H1067.00 V465.50 Z" fill="url(#lg1)"/>
<text x="1074" y="477.8" font-size="11" fill="#000000" stroke="#000000" stroke-width="0.22" text-anchor="start" >Select</text>
<path d="M1005.00,484.50 H1129.00 V505.00 H1005.00 V484.50 Z" fill="#262626"/>
<path d="M1006.00,485.50 H1128.00 V504.00 H1006.00 V485.50 Z" fill="url(#lg1)"/>
<text x="1013.5" y="497.8" font-size="11" fill="#000000" stroke="#000000" stroke-width="0.22" text-anchor="start" >Knife Project</text>
<path d="M1005.00,505.50 H1129.00 V520.50 A5.00,5.00 0 0 1 1124.00,525.50 H1010.00 A5.00,5.00 0 0 1 1005.00,520.50 V505.50 Z" fill="#ffffff" fill-opacity="0.1"/>
<path d="M1005.00,504.50 H1129.00 V519.50 A5.00,5.00 0 0 1 1124.00,524.50 H1010.00 A5.00,5.00 0 0 1 1005.00,519.50 V504.50 Z" fill="#262626"/>
<path d="M1006.00,505.50 H1128.00 V519.50 A4.00,4.00 0 0 1 1124.00,523.50 H1010.00 A4.00,4.00 0 0 1 1006.00,519.50 V505.50 Z" fill="url(#lg1)"/>
<text x="1013.5" y="517.8" font-size="11" fill="#000000" stroke="#000000" stroke-width="0.22" text-anchor="start" >Bisect</text>
<text x="1013.5" y="543" font-size="11" fill="#000" stroke="#000" stroke-width="0.22" text-anchor="start" >Remove:</text>
<path d="M1010.00,549.50 H1124.00 A5.00,5.00 0 0 1 1129.00,554.50 V570.00 H1005.00 V554.50 A5.00,5.00 0 0 1 1010.00,549.50 Z" fill="#1c1c1c"/>
<path d="M1010.00,550.50 H1124.00 A4.00,4.00 0 0 1 1128.00,554.50 V569.00 H1006.00 V554.50 A4.00,4.00 0 0 1 1010.00,550.50 Z" fill="url(#lg2)"/>
<text x="1013.5" y="562.8" font-size="11" fill="#ffffff" stroke="#ffffff" stroke-width="0.22" text-anchor="start" >Delete</text>
<path d="M1119,557.8 L1122,553.3 L1125,557.8 Z M1119,560.8 L1122,565.3 L1125,560.8 Z" fill="#c8c8c8" fill-opacity="0.8"/>
<path d="M1005.00,569.50 H1129.00 V590.00 H1005.00 V569.50 Z" fill="#1c1c1c"/>
<path d="M1006.00,570.50 H1128.00 V589.00 H1006.00 V570.50 Z" fill="url(#lg2)"/>
<text x="1013.5" y="582.8" font-size="11" fill="#ffffff" stroke="#ffffff" stroke-width="0.22" text-anchor="start" >Merge</text>
<path d="M1119,577.8 L1122,573.3 L1125,577.8 Z M1119,580.8 L1122,585.3 L1125,580.8 Z" fill="#c8c8c8" fill-opacity="0.8"/>
<path d="M1005.00,590.50 H1129.00 V605.50 A5.00,5.00 0 0 1 1124.00,610.50 H1010.00 A5.00,5.00 0 0 1 1005.00,605.50 V590.50 Z" fill="#ffffff" fill-opacity="0.1"/>
<path d="M1005.00,589.50 H1129.00 V604.50 A5.00,5.00 0 0 1 1124.00,609.50 H1010.00 A5.00,5.00 0 0 1 1005.00,604.50 V589.50 Z" fill="#262626"/>
<path d="M1006.00,590.50 H1128.00 V604.50 A4.00,4.00 0 0 1 1124.00,608.50 H1010.00 A4.00,4.00 0 0 1 1006.00,604.50 V590.50 Z" fill="url(#lg1)"/>
<text x="1013.5" y="602.8" font-size="11" fill="#000000" stroke="#000000" stroke-width="0.22" text-anchor="start" >Remove Doubles</text>
<rect x="1002" y="616" width="130" height="1" fill="#4a4a4a" />
<rect x="1002" y="617" width="130" height="1" fill="#888888" fill-opacity="0.6"/>
<path d="M1010,624.0 L1018,628.25 L1010,632.5 Z" fill="#1a1a1a"/>
<text x="1022" y="632.5" font-size="12" fill="#000" stroke="#000" stroke-width="0.22" text-anchor="start" >Weight Tools</text>
<rect x="1116" y="627" width="1" height="1" fill="#dcdcdc" />
<rect x="1116" y="628" width="1" height="1" fill="#1e1e1e" />
<rect x="1116" y="630" width="1" height="1" fill="#dcdcdc" />
<rect x="1116" y="631" width="1" height="1" fill="#1e1e1e" />
<rect x="1119" y="627" width="1" height="1" fill="#dcdcdc" />
<rect x="1119" y="628" width="1" height="1" fill="#1e1e1e" />
<rect x="1119" y="630" width="1" height="1" fill="#dcdcdc" />
<rect x="1119" y="631" width="1" height="1" fill="#1e1e1e" />
<rect x="1122" y="627" width="1" height="1" fill="#dcdcdc" />
<rect x="1122" y="628" width="1" height="1" fill="#1e1e1e" />
<rect x="1122" y="630" width="1" height="1" fill="#dcdcdc" />
<rect x="1122" y="631" width="1" height="1" fill="#1e1e1e" />
<rect x="1125" y="627" width="1" height="1" fill="#dcdcdc" />
<rect x="1125" y="628" width="1" height="1" fill="#1e1e1e" />
<rect x="1125" y="630" width="1" height="1" fill="#dcdcdc" />
<rect x="1125" y="631" width="1" height="1" fill="#1e1e1e" />
<rect x="1002" y="640" width="130" height="1" fill="#4a4a4a" />
<rect x="1002" y="641" width="130" height="1" fill="#888888" fill-opacity="0.6"/>
<path d="M1010,648.0 L1018,652.25 L1010,656.5 Z" fill="#1a1a1a"/>
<text x="1022" y="656.5" font-size="12" fill="#000" stroke="#000" stroke-width="0.22" text-anchor="start" >History</text>
<rect x="1116" y="651" width="1" height="1" fill="#dcdcdc" />
<rect x="1116" y="652" width="1" height="1" fill="#1e1e1e" />
<rect x="1116" y="654" width="1" height="1" fill="#dcdcdc" />
<rect x="1116" y="655" width="1" height="1" fill="#1e1e1e" />
<rect x="1119" y="651" width="1" height="1" fill="#dcdcdc" />
<rect x="1119" y="652" width="1" height="1" fill="#1e1e1e" />
<rect x="1119" y="654" width="1" height="1" fill="#dcdcdc" />
<rect x="1119" y="655" width="1" height="1" fill="#1e1e1e" />
<rect x="1122" y="651" width="1" height="1" fill="#dcdcdc" />
<rect x="1122" y="652" width="1" height="1" fill="#1e1e1e" />
<rect x="1122" y="654" width="1" height="1" fill="#dcdcdc" />
<rect x="1122" y="655" width="1" height="1" fill="#1e1e1e" />
<rect x="1125" y="651" width="1" height="1" fill="#dcdcdc" />
<rect x="1125" y="652" width="1" height="1" fill="#1e1e1e" />
<rect x="1125" y="654" width="1" height="1" fill="#dcdcdc" />
<rect x="1125" y="655" width="1" height="1" fill="#1e1e1e" />
<line x1="963" y1="28" x2="975.5" y2="40.5" stroke="#b0b0b0" stroke-width="1"/>
<line x1="964.5" y1="28" x2="975.5" y2="39" stroke="#111111" stroke-width="1" stroke-opacity="0.85"/>
<line x1="967" y1="28" x2="975.5" y2="36.5" stroke="#b0b0b0" stroke-width="1"/>
<line x1="968.5" y1="28" x2="975.5" y2="35" stroke="#111111" stroke-width="1" stroke-opacity="0.85"/>
<line x1="971" y1="28" x2="975.5" y2="32.5" stroke="#b0b0b0" stroke-width="1"/>
<line x1="972.5" y1="28" x2="975.5" y2="31" stroke="#111111" stroke-width="1" stroke-opacity="0.85"/>
<path d="M769,35 L777,35 L773,43 Z" fill="#1a1a1a"/>
<text x="781" y="43" font-size="12" fill="#000" stroke="#000" stroke-width="0.22" text-anchor="start" >UV Vertex</text>
<rect x="955" y="38" width="1" height="1" fill="#dcdcdc" />
<rect x="955" y="39" width="1" height="1" fill="#1e1e1e" />
<rect x="955" y="41" width="1" height="1" fill="#dcdcdc" />
<rect x="955" y="42" width="1" height="1" fill="#1e1e1e" />
<rect x="958" y="38" width="1" height="1" fill="#dcdcdc" />
<rect x="958" y="39" width="1" height="1" fill="#1e1e1e" />
<rect x="958" y="41" width="1" height="1" fill="#dcdcdc" />
<rect x="958" y="42" width="1" height="1" fill="#1e1e1e" />
<rect x="961" y="38" width="1" height="1" fill="#dcdcdc" />
<rect x="961" y="39" width="1" height="1" fill="#1e1e1e" />
<rect x="961" y="41" width="1" height="1" fill="#dcdcdc" />
<rect x="961" y="42" width="1" height="1" fill="#1e1e1e" />
<rect x="964" y="38" width="1" height="1" fill="#dcdcdc" />
<rect x="964" y="39" width="1" height="1" fill="#1e1e1e" />
<rect x="964" y="41" width="1" height="1" fill="#dcdcdc" />
<rect x="964" y="42" width="1" height="1" fill="#1e1e1e" />
<path d="M773.50,60.50 H866.00 V79.50 H773.50 A9.50,9.50 0 0 1 764.00,70.00 V70.00 A9.50,9.50 0 0 1 773.50,60.50 Z" fill="#ffffff" fill-opacity="0.1"/>
<path d="M773.50,59.50 H866.00 V78.50 H773.50 A9.50,9.50 0 0 1 764.00,69.00 V69.00 A9.50,9.50 0 0 1 773.50,59.50 Z" fill="#262626"/>
<path d="M773.50,60.50 H865.00 V77.50 H773.50 A8.50,8.50 0 0 1 765.00,69.00 V69.00 A8.50,8.50 0 0 1 773.50,60.50 Z" fill="url(#lg3)"/>
<path d="M865.50,60.50 H958.50 A9.50,9.50 0 0 1 968.00,70.00 V70.00 A9.50,9.50 0 0 1 958.50,79.50 H865.50 V60.50 Z" fill="#ffffff" fill-opacity="0.1"/>
<path d="M865.50,59.50 H958.50 A9.50,9.50 0 0 1 968.00,69.00 V69.00 A9.50,9.50 0 0 1 958.50,78.50 H865.50 V59.50 Z" fill="#262626"/>
<path d="M866.50,60.50 H958.50 A8.50,8.50 0 0 1 967.00,69.00 V69.00 A8.50,8.50 0 0 1 958.50,77.50 H866.50 V60.50 Z" fill="url(#lg3)"/>
<path d="M775,65.5 L772,69.0 L775,72.5 Z M854.5,65.5 L857.5,69.0 L854.5,72.5 Z" fill="#000" fill-opacity="0.3"/>
<path d="M876.5,65.5 L873.5,69.0 L876.5,72.5 Z M957,65.5 L960,69.0 L957,72.5 Z" fill="#000" fill-opacity="0.3"/>
<text x="780" y="73.5" font-size="11" fill="#000000" stroke="#000000" stroke-width="0.22" text-anchor="start" >X:</text>
<text x="849.5" y="73.5" font-size="11" fill="#000000" stroke="#000000" stroke-width="0.22" text-anchor="end" textLength="43.41" lengthAdjust="spacingAndGlyphs" >1031.12</text>
<text x="880.5" y="73.5" font-size="11" fill="#000000" stroke="#000000" stroke-width="0.22" text-anchor="start" >Y:</text>
<text x="951.5" y="73.5" font-size="11" fill="#000000" stroke="#000000" stroke-width="0.22" text-anchor="end" textLength="35.88" lengthAdjust="spacingAndGlyphs" >511.84</text>
<rect x="761" y="86" width="210" height="1" fill="#4a4a4a" />
<rect x="761" y="87" width="210" height="1" fill="#888888" fill-opacity="0.6"/>
<path d="M769,95.3 L777,95.3 L773,103.3 Z" fill="#1a1a1a"/>
<path d="M784.00,93.30 H792.00 A3.00,3.00 0 0 1 795.00,96.30 V104.30 A3.00,3.00 0 0 1 792.00,107.30 H784.00 A3.00,3.00 0 0 1 781.00,104.30 V96.30 A3.00,3.00 0 0 1 784.00,93.30 Z" fill="#fff" fill-opacity="0.08"/>
<path d="M784.00,92.30 H792.00 A3.00,3.00 0 0 1 795.00,95.30 V103.30 A3.00,3.00 0 0 1 792.00,106.30 H784.00 A3.00,3.00 0 0 1 781.00,103.30 V95.30 A3.00,3.00 0 0 1 784.00,92.30 Z" fill="#1e1e1e"/>
<path d="M784.00,93.30 H792.00 A2.00,2.00 0 0 1 794.00,95.30 V103.30 A2.00,2.00 0 0 1 792.00,105.30 H784.00 A2.00,2.00 0 0 1 782.00,103.30 V95.30 A2.00,2.00 0 0 1 784.00,93.30 Z" fill="url(#lg2)"/>
<path d="M783.5,98.8 L786.5,102.3 L793,91.8" fill="none" stroke="#f0f0f0" stroke-width="1.7"/>
<text x="801.5" y="103.3" font-size="12" fill="#000" stroke="#000" stroke-width="0.22" text-anchor="start" >Grease Pencil</text>
<rect x="955" y="98" width="1" height="1" fill="#dcdcdc" />
<rect x="955" y="99" width="1" height="1" fill="#1e1e1e" />
<rect x="955" y="101" width="1" height="1" fill="#dcdcdc" />
<rect x="955" y="102" width="1" height="1" fill="#1e1e1e" />
<rect x="958" y="98" width="1" height="1" fill="#dcdcdc" />
<rect x="958" y="99" width="1" height="1" fill="#1e1e1e" />
<rect x="958" y="101" width="1" height="1" fill="#dcdcdc" />
<rect x="958" y="102" width="1" height="1" fill="#1e1e1e" />
<rect x="961" y="98" width="1" height="1" fill="#dcdcdc" />
<rect x="961" y="99" width="1" height="1" fill="#1e1e1e" />
<rect x="961" y="101" width="1" height="1" fill="#dcdcdc" />
<rect x="961" y="102" width="1" height="1" fill="#1e1e1e" />
<rect x="964" y="98" width="1" height="1" fill="#dcdcdc" />
<rect x="964" y="99" width="1" height="1" fill="#1e1e1e" />
<rect x="964" y="101" width="1" height="1" fill="#dcdcdc" />
<rect x="964" y="102" width="1" height="1" fill="#1e1e1e" />
<path d="M769.00,125.50 H796.00 V144.50 H769.00 A5.00,5.00 0 0 1 764.00,139.50 V130.50 A5.00,5.00 0 0 1 769.00,125.50 Z" fill="#ffffff" fill-opacity="0.1"/>
<path d="M769.00,124.50 H796.00 V143.50 H769.00 A5.00,5.00 0 0 1 764.00,138.50 V129.50 A5.00,5.00 0 0 1 769.00,124.50 Z" fill="#1c1c1c"/>
<path d="M769.00,125.50 H795.00 V142.50 H769.00 A4.00,4.00 0 0 1 765.00,138.50 V129.50 A4.00,4.00 0 0 1 769.00,125.50 Z" fill="url(#lg2)"/>
<path d="M795.00,125.50 H963.00 A5.00,5.00 0 0 1 968.00,130.50 V139.50 A5.00,5.00 0 0 1 963.00,144.50 H795.00 V125.50 Z" fill="#ffffff" fill-opacity="0.1"/>
<path d="M795.00,124.50 H963.00 A5.00,5.00 0 0 1 968.00,129.50 V138.50 A5.00,5.00 0 0 1 963.00,143.50 H795.00 V124.50 Z" fill="#262626"/>
<path d="M796.00,125.50 H963.00 A4.00,4.00 0 0 1 967.00,129.50 V138.50 A4.00,4.00 0 0 1 963.00,142.50 H796.00 V125.50 Z" fill="url(#lg1)"/>
<path d="M769.5,141.0 L771,136.5 L779.5,128.0 L782.5,131.0 L774,139.5 Z" fill="#a8c848" stroke="#1a1a1a" stroke-width="0.8"/>
<path d="M779.5,128.0 L781,126.5 L784,129.5 L782.5,131.0 Z" fill="#e85050" stroke="#1a1a1a" stroke-width="0.6"/>
<path d="M769.5,141.0 L770.5,138.0 L772.5,140.0 Z" fill="#f0e0b0"/>
<path d="M786.5,132.5 L789.5,128.0 L792.5,132.5 Z M786.5,135.5 L789.5,140.0 L792.5,135.5 Z" fill="#c8c8c8" fill-opacity="0.8"/>
<path d="M805.5,128.5 h3 v4 h4 v3 h-4 v4 h-3 v-4 h-4 v-3 h4 Z" fill="#fff" stroke="#111" stroke-width="0.9"/>
<text x="889" y="139.0" font-size="11" fill="#000000" stroke="#000000" stroke-width="0.22" text-anchor="middle" >New</text>
<path d="M769.00,148.00 H963.00 A5.00,5.00 0 0 1 968.00,153.00 V162.00 A5.00,5.00 0 0 1 963.00,167.00 H769.00 A5.00,5.00 0 0 1 764.00,162.00 V153.00 A5.00,5.00 0 0 1 769.00,148.00 Z" fill="#ffffff" fill-opacity="0.1"/>
<path d="M769.00,147.00 H963.00 A5.00,5.00 0 0 1 968.00,152.00 V161.00 A5.00,5.00 0 0 1 963.00,166.00 H769.00 A5.00,5.00 0 0 1 764.00,161.00 V152.00 A5.00,5.00 0 0 1 769.00,147.00 Z" fill="#262626"/>
<path d="M769.00,148.00 H963.00 A4.00,4.00 0 0 1 967.00,152.00 V161.00 A4.00,4.00 0 0 1 963.00,165.00 H769.00 A4.00,4.00 0 0 1 765.00,161.00 V152.00 A4.00,4.00 0 0 1 769.00,148.00 Z" fill="url(#lg1)"/>
<text x="865.5" y="161" font-size="11" fill="#000000" stroke="#000000" stroke-width="0.22" text-anchor="middle" >New Layer</text>
<path d="M769.00,170.00 H866.00 V189.00 H769.00 A5.00,5.00 0 0 1 764.00,184.00 V175.00 A5.00,5.00 0 0 1 769.00,170.00 Z" fill="#ffffff" fill-opacity="0.1"/>
<path d="M769.00,169.00 H866.00 V188.00 H769.00 A5.00,5.00 0 0 1 764.00,183.00 V174.00 A5.00,5.00 0 0 1 769.00,169.00 Z" fill="#464646"/>
<path d="M769.00,170.00 H865.00 V187.00 H769.00 A4.00,4.00 0 0 1 765.00,183.00 V174.00 A4.00,4.00 0 0 1 769.00,170.00 Z" fill="url(#lg4)"/>
<path d="M865.50,170.00 H963.00 A5.00,5.00 0 0 1 968.00,175.00 V184.00 A5.00,5.00 0 0 1 963.00,189.00 H865.50 V170.00 Z" fill="#ffffff" fill-opacity="0.1"/>
<path d="M865.50,169.00 H963.00 A5.00,5.00 0 0 1 968.00,174.00 V183.00 A5.00,5.00 0 0 1 963.00,188.00 H865.50 V169.00 Z" fill="#464646"/>
<path d="M866.50,170.00 H963.00 A4.00,4.00 0 0 1 967.00,174.00 V183.00 A4.00,4.00 0 0 1 963.00,187.00 H866.50 V170.00 Z" fill="url(#lg4)"/>
<text x="815" y="183.3" font-size="11" fill="#393939" stroke="#393939" stroke-width="0.22" text-anchor="middle" >Delete Frame</text>
<text x="916" y="183.3" font-size="11" fill="#393939" stroke="#393939" stroke-width="0.22" text-anchor="middle" >Convert</text>
<rect x="761" y="195" width="210" height="1" fill="#4a4a4a" />
<rect x="761" y="196" width="210" height="1" fill="#888888" fill-opacity="0.6"/>
<path d="M769,204 L777,204 L773,212 Z" fill="#1a1a1a"/>
<text x="781" y="212" font-size="12" fill="#000" stroke="#000" stroke-width="0.22" text-anchor="start" >Image</text>
<rect x="955" y="207" width="1" height="1" fill="#dcdcdc" />
<rect x="955" y="208" width="1" height="1" fill="#1e1e1e" />
<rect x="955" y="210" width="1" height="1" fill="#dcdcdc" />
<rect x="955" y="211" width="1" height="1" fill="#1e1e1e" />
<rect x="958" y="207" width="1" height="1" fill="#dcdcdc" />
<rect x="958" y="208" width="1" height="1" fill="#1e1e1e" />
<rect x="958" y="210" width="1" height="1" fill="#dcdcdc" />
<rect x="958" y="211" width="1" height="1" fill="#1e1e1e" />
<rect x="961" y="207" width="1" height="1" fill="#dcdcdc" />
<rect x="961" y="208" width="1" height="1" fill="#1e1e1e" />
<rect x="961" y="210" width="1" height="1" fill="#dcdcdc" />
<rect x="961" y="211" width="1" height="1" fill="#1e1e1e" />
<rect x="964" y="207" width="1" height="1" fill="#dcdcdc" />
<rect x="964" y="208" width="1" height="1" fill="#1e1e1e" />
<rect x="964" y="210" width="1" height="1" fill="#dcdcdc" />
<rect x="964" y="211" width="1" height="1" fill="#1e1e1e" />
<path d="M769.00,230.00 H796.00 V249.00 H769.00 A5.00,5.00 0 0 1 764.00,244.00 V235.00 A5.00,5.00 0 0 1 769.00,230.00 Z" fill="#ffffff" fill-opacity="0.1"/>
<path d="M769.00,229.00 H796.00 V248.00 H769.00 A5.00,5.00 0 0 1 764.00,243.00 V234.00 A5.00,5.00 0 0 1 769.00,229.00 Z" fill="#1c1c1c"/>
<path d="M769.00,230.00 H795.00 V247.00 H769.00 A4.00,4.00 0 0 1 765.00,243.00 V234.00 A4.00,4.00 0 0 1 769.00,230.00 Z" fill="url(#lg2)"/>
<path d="M771,232.5 h7 l3,3 v9 h-10 Z" fill="#f4f4f4" stroke="#222" stroke-width="0.8"/>
<rect x="772" y="235.5" width="8" height="3.5" fill="#e8a0a0"/>
<rect x="772" y="239.0" width="8" height="1.2" fill="#222"/>
<rect x="772" y="240.2" width="8" height="3.5" fill="#9a9ad8"/>
<path d="M786.5,237.0 L789.5,232.5 L792.5,237.0 Z M786.5,240.0 L789.5,244.5 L792.5,240.0 Z" fill="#c8c8c8" fill-opacity="0.8"/>
<path d="M795.00,230.00 H888.50 V249.00 H795.00 V230.00 Z" fill="#ffffff" fill-opacity="0.1"/>
<path d="M795.00,229.00 H888.50 V248.00 H795.00 V229.00 Z" fill="#262626"/>
<path d="M796.00,230.00 H887.50 V247.00 H796.00 V230.00 Z" fill="url(#lg5)"/>
<text x="803.5" y="242.5" font-size="11" fill="#000000" stroke="#000000" stroke-width="0.22" text-anchor="start" >bluemarble.jpg</text>
<path d="M887.50,230.00 H908.00 V249.00 H887.50 V230.00 Z" fill="#ffffff" fill-opacity="0.1"/>
<path d="M887.50,229.00 H908.00 V248.00 H887.50 V229.00 Z" fill="#262626"/>
<path d="M888.50,230.00 H907.00 V247.00 H888.50 V230.00 Z" fill="url(#lg6)"/>
<text x="897.5" y="242.5" font-size="11" fill="#000000" stroke="#000000" stroke-width="0.22" text-anchor="middle" >F</text>
<path d="M907.00,230.00 H927.50 V249.00 H907.00 V230.00 Z" fill="#ffffff" fill-opacity="0.1"/>
<path d="M907.00,229.00 H927.50 V248.00 H907.00 V229.00 Z" fill="#262626"/>
<path d="M908.00,230.00 H926.50 V247.00 H908.00 V230.00 Z" fill="url(#lg1)"/>
<path d="M916.0,233.0 h3 v4 h4 v3 h-4 v4 h-3 v-4 h-4 v-3 h4 Z" fill="#fff" stroke="#111" stroke-width="0.9"/>
<path d="M927.00,230.00 H947.50 V249.00 H927.00 V230.00 Z" fill="#ffffff" fill-opacity="0.1"/>
<path d="M927.00,229.00 H947.50 V248.00 H927.00 V229.00 Z" fill="#262626"/>
<path d="M928.00,230.00 H946.50 V247.00 H928.00 V230.00 Z" fill="url(#lg1)"/>
<path d="M930.5,235.5 h4 l1,-1.5 h3 v1.5 h5 v9 h-13 Z" fill="#d9cf9c" stroke="#2a2410" stroke-width="0.9"/>
<rect x="935.5" y="232.0" width="6" height="5" fill="#f0f0f0" stroke="#333" stroke-width="0.7"/>
<path d="M930.5,244.5 l2,-6 h13 l-2,6 Z" fill="#e6dca8" stroke="#2a2410" stroke-width="0.9"/>
<path d="M947.00,230.00 H963.00 A5.00,5.00 0 0 1 968.00,235.00 V244.00 A5.00,5.00 0 0 1 963.00,249.00 H947.00 V230.00 Z" fill="#ffffff" fill-opacity="0.1"/>
<path d="M947.00,229.00 H963.00 A5.00,5.00 0 0 1 968.00,234.00 V243.00 A5.00,5.00 0 0 1 963.00,248.00 H947.00 V229.00 Z" fill="#262626"/>
<path d="M948.00,230.00 H963.00 A4.00,4.00 0 0 1 967.00,234.00 V243.00 A4.00,4.00 0 0 1 963.00,247.00 H948.00 V230.00 Z" fill="url(#lg1)"/>
<g transform="translate(957,238.5) rotate(45)"><path d="M-1.5,-6 h3 v4.5 h4.5 v3 h-4.5 v4.5 h-3 v-4.5 h-4.5 v-3 h4.5 Z" fill="#fff" stroke="#111" stroke-width="0.9"/></g>
<text x="771.5" y="267.5" font-size="11" fill="#000" stroke="#000" stroke-width="0.22" text-anchor="start" >Source:</text>
<path d="M841.00,254.50 H963.00 A5.00,5.00 0 0 1 968.00,259.50 V268.50 A5.00,5.00 0 0 1 963.00,273.50 H841.00 A5.00,5.00 0 0 1 836.00,268.50 V259.50 A5.00,5.00 0 0 1 841.00,254.50 Z" fill="#ffffff" fill-opacity="0.1"/>
<path d="M841.00,253.50 H963.00 A5.00,5.00 0 0 1 968.00,258.50 V267.50 A5.00,5.00 0 0 1 963.00,272.50 H841.00 A5.00,5.00 0 0 1 836.00,267.50 V258.50 A5.00,5.00 0 0 1 841.00,253.50 Z" fill="#1c1c1c"/>
<path d="M841.00,254.50 H963.00 A4.00,4.00 0 0 1 967.00,258.50 V267.50 A4.00,4.00 0 0 1 963.00,271.50 H841.00 A4.00,4.00 0 0 1 837.00,267.50 V258.50 A4.00,4.00 0 0 1 841.00,254.50 Z" fill="url(#lg2)"/>
<text x="844.5" y="267.5" font-size="11" fill="#ffffff" stroke="#ffffff" stroke-width="0.22" text-anchor="start" >Single Image</text>
<path d="M958,261.5 L961,257 L964,261.5 Z M958,264.5 L961,269 L964,264.5 Z" fill="#c8c8c8" fill-opacity="0.8"/>
<path d="M769.00,280.00 H784.00 V299.00 H769.00 A5.00,5.00 0 0 1 764.00,294.00 V285.00 A5.00,5.00 0 0 1 769.00,280.00 Z" fill="#ffffff" fill-opacity="0.1"/>
<path d="M769.00,279.00 H784.00 V298.00 H769.00 A5.00,5.00 0 0 1 764.00,293.00 V284.00 A5.00,5.00 0 0 1 769.00,279.00 Z" fill="#262626"/>
<path d="M769.00,280.00 H783.00 V297.00 H769.00 A4.00,4.00 0 0 1 765.00,293.00 V284.00 A4.00,4.00 0 0 1 769.00,280.00 Z" fill="url(#lg1)"/>
<path d="M768,288 l6,-4 l6,3 v4 l-6,4 l-6,-3 Z" fill="#d8cc90" stroke="#222" stroke-width="0.8"/>
<path d="M771,287.5 l3,-2 l3,1.5 l-3,2 Z" fill="#222"/>
<path d="M783.50,280.00 H927.50 V299.00 H783.50 V280.00 Z" fill="#ffffff" fill-opacity="0.1"/>
<path d="M783.50,279.00 H927.50 V298.00 H783.50 V279.00 Z" fill="#262626"/>
<path d="M784.50,280.00 H926.50 V297.00 H784.50 V280.00 Z" fill="url(#lg5)"/>
<text x="791.25" y="293" font-size="11" fill="#000000" stroke="#000000" stroke-width="0.22" text-anchor="start" >C:\Users\Os...emarble.jpg</text>
<path d="M927.00,280.00 H947.50 V299.00 H927.00 V280.00 Z" fill="#ffffff" fill-opacity="0.1"/>
<path d="M927.00,279.00 H947.50 V298.00 H927.00 V279.00 Z" fill="#262626"/>
<path d="M928.00,280.00 H946.50 V297.00 H928.00 V280.00 Z" fill="url(#lg1)"/>
<path d="M930.5,285.5 h4 l1,-1.5 h3 v1.5 h5 v9 h-13 Z" fill="#d9cf9c" stroke="#2a2410" stroke-width="0.9"/>
<rect x="935.5" y="282.0" width="6" height="5" fill="#f0f0f0" stroke="#333" stroke-width="0.7"/>
<path d="M930.5,294.5 l2,-6 h13 l-2,6 Z" fill="#e6dca8" stroke="#2a2410" stroke-width="0.9"/>
<path d="M947.00,280.00 H963.00 A5.00,5.00 0 0 1 968.00,285.00 V294.00 A5.00,5.00 0 0 1 963.00,299.00 H947.00 V280.00 Z" fill="#ffffff" fill-opacity="0.1"/>
<path d="M947.00,279.00 H963.00 A5.00,5.00 0 0 1 968.00,284.00 V293.00 A5.00,5.00 0 0 1 963.00,298.00 H947.00 V279.00 Z" fill="#262626"/>
<path d="M948.00,280.00 H963.00 A4.00,4.00 0 0 1 967.00,284.00 V293.00 A4.00,4.00 0 0 1 963.00,297.00 H948.00 V280.00 Z" fill="url(#lg1)"/>
<path d="M950.5,287 q1,-4.5 6.5,-4.5 q3.5,0 5,2 l1.5,-1.5 v4.5 h-4.5 l1.5,-1.5 q-1,-1.5 -3.5,-1.5 q-3.5,0 -4,2.5 Z M963.5,290 q-1,4.5 -6.5,4.5 q-3.5,0 -5,-2 l-1.5,1.5 v-4.5 h4.5 l-1.5,1.5 q1,1.5 3.5,1.5 q3.5,0 4,-2.5 Z" fill="#fff" stroke="#111" stroke-width="0.8"/>
<text x="771.5" y="318" font-size="11" fill="#000" stroke="#000" stroke-width="0.22" text-anchor="start" textLength="180" lengthAdjust="spacingAndGlyphs" >Image: size 4096 x 2048, RGB byte</text>
<text x="771.5" y="343" font-size="11" fill="#000" stroke="#000" stroke-width="0.22" text-anchor="start" >Input Color Space:</text>
<path d="M769.00,351.50 H963.00 A5.00,5.00 0 0 1 968.00,356.50 V365.50 A5.00,5.00 0 0 1 963.00,370.50 H769.00 A5.00,5.00 0 0 1 764.00,365.50 V356.50 A5.00,5.00 0 0 1 769.00,351.50 Z" fill="#ffffff" fill-opacity="0.1"/>
<path d="M769.00,350.50 H963.00 A5.00,5.00 0 0 1 968.00,355.50 V364.50 A5.00,5.00 0 0 1 963.00,369.50 H769.00 A5.00,5.00 0 0 1 764.00,364.50 V355.50 A5.00,5.00 0 0 1 769.00,350.50 Z" fill="#1c1c1c"/>
<path d="M769.00,351.50 H963.00 A4.00,4.00 0 0 1 967.00,355.50 V364.50 A4.00,4.00 0 0 1 963.00,368.50 H769.00 A4.00,4.00 0 0 1 765.00,364.50 V355.50 A4.00,4.00 0 0 1 769.00,351.50 Z" fill="url(#lg2)"/>
<text x="771.25" y="365" font-size="11" fill="#ffffff" stroke="#ffffff" stroke-width="0.22" text-anchor="start" >sRGB</text>
<path d="M958,358.5 L961,354 L964,358.5 Z M958,361.5 L961,366 L964,361.5 Z" fill="#c8c8c8" fill-opacity="0.8"/>
<path d="M770.00,376.00 H778.00 A3.00,3.00 0 0 1 781.00,379.00 V387.00 A3.00,3.00 0 0 1 778.00,390.00 H770.00 A3.00,3.00 0 0 1 767.00,387.00 V379.00 A3.00,3.00 0 0 1 770.00,376.00 Z" fill="#fff" fill-opacity="0.08"/>
<path d="M770.00,375.00 H778.00 A3.00,3.00 0 0 1 781.00,378.00 V386.00 A3.00,3.00 0 0 1 778.00,389.00 H770.00 A3.00,3.00 0 0 1 767.00,386.00 V378.00 A3.00,3.00 0 0 1 770.00,375.00 Z" fill="#1e1e1e"/>
<path d="M770.00,376.00 H778.00 A2.00,2.00 0 0 1 780.00,378.00 V386.00 A2.00,2.00 0 0 1 778.00,388.00 H770.00 A2.00,2.00 0 0 1 768.00,386.00 V378.00 A2.00,2.00 0 0 1 770.00,376.00 Z" fill="url(#lg2)"/>
<text x="789.4" y="387" font-size="11" fill="#000" stroke="#000" stroke-width="0.22" text-anchor="start" >View as Render</text>
<path d="M770.00,412.00 H778.00 A3.00,3.00 0 0 1 781.00,415.00 V423.00 A3.00,3.00 0 0 1 778.00,426.00 H770.00 A3.00,3.00 0 0 1 767.00,423.00 V415.00 A3.00,3.00 0 0 1 770.00,412.00 Z" fill="#fff" fill-opacity="0.08"/>
<path d="M770.00,411.00 H778.00 A3.00,3.00 0 0 1 781.00,414.00 V422.00 A3.00,3.00 0 0 1 778.00,425.00 H770.00 A3.00,3.00 0 0 1 767.00,422.00 V414.00 A3.00,3.00 0 0 1 770.00,411.00 Z" fill="#1e1e1e"/>
<path d="M770.00,412.00 H778.00 A2.00,2.00 0 0 1 780.00,414.00 V422.00 A2.00,2.00 0 0 1 778.00,424.00 H770.00 A2.00,2.00 0 0 1 768.00,422.00 V414.00 A2.00,2.00 0 0 1 770.00,412.00 Z" fill="url(#lg2)"/>
<text x="789.4" y="423" font-size="11" fill="#000" stroke="#000" stroke-width="0.22" text-anchor="start" >Fields</text>
<path d="M769.00,431.50 H866.00 V450.50 H769.00 A5.00,5.00 0 0 1 764.00,445.50 V436.50 A5.00,5.00 0 0 1 769.00,431.50 Z" fill="#ffffff" fill-opacity="0.1"/>
<path d="M769.00,430.50 H866.00 V449.50 H769.00 A5.00,5.00 0 0 1 764.00,444.50 V435.50 A5.00,5.00 0 0 1 769.00,430.50 Z" fill="#393939"/>
<path d="M769.00,431.50 H865.00 V448.50 H769.00 A4.00,4.00 0 0 1 765.00,444.50 V435.50 A4.00,4.00 0 0 1 769.00,431.50 Z" fill="url(#lg7)"/>
<path d="M865.50,431.50 H963.00 A5.00,5.00 0 0 1 968.00,436.50 V445.50 A5.00,5.00 0 0 1 963.00,450.50 H865.50 V431.50 Z" fill="#ffffff" fill-opacity="0.1"/>
<path d="M865.50,430.50 H963.00 A5.00,5.00 0 0 1 968.00,435.50 V444.50 A5.00,5.00 0 0 1 963.00,449.50 H865.50 V430.50 Z" fill="#393939"/>
<path d="M866.50,431.50 H963.00 A4.00,4.00 0 0 1 967.00,435.50 V444.50 A4.00,4.00 0 0 1 963.00,448.50 H866.50 V431.50 Z" fill="url(#lg8)"/>
<text x="815" y="444.5" font-size="11" fill="#393939" stroke="#393939" stroke-width="0.22" text-anchor="middle" >Upper First</text>
<text x="916.5" y="444.5" font-size="11" fill="#b8b8b8" stroke="#b8b8b8" stroke-width="0.22" text-anchor="middle" >Lower First</text>
<rect x="761" y="457" width="210" height="1" fill="#4a4a4a" />
<rect x="761" y="458" width="210" height="1" fill="#888888" fill-opacity="0.6"/>
<path d="M769,466 L777,466 L773,474 Z" fill="#1a1a1a"/>
<text x="781" y="474" font-size="12" fill="#000" stroke="#000" stroke-width="0.22" text-anchor="start" >Game Properties</text>
<rect x="955" y="469" width="1" height="1" fill="#dcdcdc" />
<rect x="955" y="470" width="1" height="1" fill="#1e1e1e" />
<rect x="955" y="472" width="1" height="1" fill="#dcdcdc" />
<rect x="955" y="473" width="1" height="1" fill="#1e1e1e" />
<rect x="958" y="469" width="1" height="1" fill="#dcdcdc" />
<rect x="958" y="470" width="1" height="1" fill="#1e1e1e" />
<rect x="958" y="472" width="1" height="1" fill="#dcdcdc" />
<rect x="958" y="473" width="1" height="1" fill="#1e1e1e" />
<rect x="961" y="469" width="1" height="1" fill="#dcdcdc" />
<rect x="961" y="470" width="1" height="1" fill="#1e1e1e" />
<rect x="961" y="472" width="1" height="1" fill="#dcdcdc" />
<rect x="961" y="473" width="1" height="1" fill="#1e1e1e" />
<rect x="964" y="469" width="1" height="1" fill="#dcdcdc" />
<rect x="964" y="470" width="1" height="1" fill="#1e1e1e" />
<rect x="964" y="472" width="1" height="1" fill="#dcdcdc" />
<rect x="964" y="473" width="1" height="1" fill="#1e1e1e" />
<path d="M770.00,494.00 H778.00 A3.00,3.00 0 0 1 781.00,497.00 V505.00 A3.00,3.00 0 0 1 778.00,508.00 H770.00 A3.00,3.00 0 0 1 767.00,505.00 V497.00 A3.00,3.00 0 0 1 770.00,494.00 Z" fill="#fff" fill-opacity="0.08"/>
<path d="M770.00,493.00 H778.00 A3.00,3.00 0 0 1 781.00,496.00 V504.00 A3.00,3.00 0 0 1 778.00,507.00 H770.00 A3.00,3.00 0 0 1 767.00,504.00 V496.00 A3.00,3.00 0 0 1 770.00,493.00 Z" fill="#1e1e1e"/>
<path d="M770.00,494.00 H778.00 A2.00,2.00 0 0 1 780.00,496.00 V504.00 A2.00,2.00 0 0 1 778.00,506.00 H770.00 A2.00,2.00 0 0 1 768.00,504.00 V496.00 A2.00,2.00 0 0 1 770.00,494.00 Z" fill="url(#lg2)"/>
<text x="789.4" y="504.4" font-size="11" fill="#000" stroke="#000" stroke-width="0.22" text-anchor="start" >Animated</text>
<text x="878.75" y="504.4" font-size="11" fill="#000" stroke="#000" stroke-width="0.22" text-anchor="start" >Clamp:</text>
<path d="M773.50,512.50 H852.00 A9.50,9.50 0 0 1 861.50,522.00 V532.50 H764.00 V522.00 A9.50,9.50 0 0 1 773.50,512.50 Z" fill="#464646"/>
<path d="M773.50,513.50 H852.00 A8.50,8.50 0 0 1 860.50,522.00 V531.50 H765.00 V522.00 A8.50,8.50 0 0 1 773.50,513.50 Z" fill="url(#lg9)"/>
<path d="M775,518.7 L772,522.2 L775,525.7 Z M850.5,518.7 L853.5,522.2 L850.5,525.7 Z" fill="#000" fill-opacity="0.15"/>
<text x="780" y="526.5" font-size="11" fill="#393939" stroke="#393939" stroke-width="0.22" text-anchor="start" >Start:</text>
<text x="845.5" y="526.5" font-size="11" fill="#393939" stroke="#393939" stroke-width="0.22" text-anchor="end" textLength="6.72" lengthAdjust="spacingAndGlyphs" >0</text>
<path d="M764.00,532.00 H861.50 V552.00 H764.00 V532.00 Z" fill="#464646"/>
<path d="M765.00,533.00 H860.50 V551.00 H765.00 V533.00 Z" fill="url(#lg9)"/>
<path d="M775,538.2 L772,541.7 L775,545.2 Z M850.5,538.2 L853.5,541.7 L850.5,545.2 Z" fill="#000" fill-opacity="0.15"/>
<text x="780" y="546.0" font-size="11" fill="#393939" stroke="#393939" stroke-width="0.22" text-anchor="start" >End:</text>
<text x="845.5" y="546.0" font-size="11" fill="#393939" stroke="#393939" stroke-width="0.22" text-anchor="end" textLength="6.72" lengthAdjust="spacingAndGlyphs" >0</text>
<path d="M764.00,552.50 H861.50 V562.50 A9.50,9.50 0 0 1 852.00,572.00 H773.50 A9.50,9.50 0 0 1 764.00,562.50 V552.50 Z" fill="#ffffff" fill-opacity="0.1"/>
<path d="M764.00,551.50 H861.50 V561.50 A9.50,9.50 0 0 1 852.00,571.00 H773.50 A9.50,9.50 0 0 1 764.00,561.50 V551.50 Z" fill="#464646"/>
<path d="M765.00,552.50 H860.50 V561.50 A8.50,8.50 0 0 1 852.00,570.00 H773.50 A8.50,8.50 0 0 1 765.00,561.50 V552.50 Z" fill="url(#lg9)"/>
<path d="M775,557.7 L772,561.2 L775,564.7 Z M850.5,557.7 L853.5,561.2 L850.5,564.7 Z" fill="#000" fill-opacity="0.15"/>
<text x="780" y="565.5" font-size="11" fill="#393939" stroke="#393939" stroke-width="0.22" text-anchor="start" >Speed:</text>
<text x="845.5" y="565.5" font-size="11" fill="#393939" stroke="#393939" stroke-width="0.22" text-anchor="end" textLength="6.72" lengthAdjust="spacingAndGlyphs" >1</text>
<path d="M876.00,516.00 H884.00 A3.00,3.00 0 0 1 887.00,519.00 V527.00 A3.00,3.00 0 0 1 884.00,530.00 H876.00 A3.00,3.00 0 0 1 873.00,527.00 V519.00 A3.00,3.00 0 0 1 876.00,516.00 Z" fill="#fff" fill-opacity="0.08"/>
<path d="M876.00,515.00 H884.00 A3.00,3.00 0 0 1 887.00,518.00 V526.00 A3.00,3.00 0 0 1 884.00,529.00 H876.00 A3.00,3.00 0 0 1 873.00,526.00 V518.00 A3.00,3.00 0 0 1 876.00,515.00 Z" fill="#1e1e1e"/>
<path d="M876.00,516.00 H884.00 A2.00,2.00 0 0 1 886.00,518.00 V526.00 A2.00,2.00 0 0 1 884.00,528.00 H876.00 A2.00,2.00 0 0 1 874.00,526.00 V518.00 A2.00,2.00 0 0 1 876.00,516.00 Z" fill="url(#lg2)"/>
<text x="895" y="526.3" font-size="11" fill="#000" stroke="#000" stroke-width="0.22" text-anchor="start" >X</text>
<path d="M876.00,538.00 H884.00 A3.00,3.00 0 0 1 887.00,541.00 V549.00 A3.00,3.00 0 0 1 884.00,552.00 H876.00 A3.00,3.00 0 0 1 873.00,549.00 V541.00 A3.00,3.00 0 0 1 876.00,538.00 Z" fill="#fff" fill-opacity="0.08"/>
<path d="M876.00,537.00 H884.00 A3.00,3.00 0 0 1 887.00,540.00 V548.00 A3.00,3.00 0 0 1 884.00,551.00 H876.00 A3.00,3.00 0 0 1 873.00,548.00 V540.00 A3.00,3.00 0 0 1 876.00,537.00 Z" fill="#1e1e1e"/>
<path d="M876.00,538.00 H884.00 A2.00,2.00 0 0 1 886.00,540.00 V548.00 A2.00,2.00 0 0 1 884.00,550.00 H876.00 A2.00,2.00 0 0 1 874.00,548.00 V540.00 A2.00,2.00 0 0 1 876.00,538.00 Z" fill="url(#lg2)"/>
<text x="895" y="548.3" font-size="11" fill="#000" stroke="#000" stroke-width="0.22" text-anchor="start" >Y</text>
<path d="M770.00,578.00 H778.00 A3.00,3.00 0 0 1 781.00,581.00 V589.00 A3.00,3.00 0 0 1 778.00,592.00 H770.00 A3.00,3.00 0 0 1 767.00,589.00 V581.00 A3.00,3.00 0 0 1 770.00,578.00 Z" fill="#fff" fill-opacity="0.08"/>
<path d="M770.00,577.00 H778.00 A3.00,3.00 0 0 1 781.00,580.00 V588.00 A3.00,3.00 0 0 1 778.00,591.00 H770.00 A3.00,3.00 0 0 1 767.00,588.00 V580.00 A3.00,3.00 0 0 1 770.00,577.00 Z" fill="#1e1e1e"/>
<path d="M770.00,578.00 H778.00 A2.00,2.00 0 0 1 780.00,580.00 V588.00 A2.00,2.00 0 0 1 778.00,590.00 H770.00 A2.00,2.00 0 0 1 768.00,588.00 V580.00 A2.00,2.00 0 0 1 770.00,578.00 Z" fill="url(#lg2)"/>
<text x="789.4" y="588.75" font-size="11" fill="#000" stroke="#000" stroke-width="0.22" text-anchor="start" >Tiles</text>
<path d="M773.50,597.00 H852.00 A9.50,9.50 0 0 1 861.50,606.50 V617.00 H764.00 V606.50 A9.50,9.50 0 0 1 773.50,597.00 Z" fill="#464646"/>
<path d="M773.50,598.00 H852.00 A8.50,8.50 0 0 1 860.50,606.50 V616.00 H765.00 V606.50 A8.50,8.50 0 0 1 773.50,598.00 Z" fill="url(#lg9)"/>
<path d="M775,603.2 L772,606.7 L775,610.2 Z M850.5,603.2 L853.5,606.7 L850.5,610.2 Z" fill="#000" fill-opacity="0.15"/>
<text x="780" y="611.0" font-size="11" fill="#393939" stroke="#393939" stroke-width="0.22" text-anchor="start" >X:</text>
<text x="845.5" y="611.0" font-size="11" fill="#393939" stroke="#393939" stroke-width="0.22" text-anchor="end" textLength="6.72" lengthAdjust="spacingAndGlyphs" >1</text>
<path d="M764.00,617.50 H861.50 V627.50 A9.50,9.50 0 0 1 852.00,637.00 H773.50 A9.50,9.50 0 0 1 764.00,627.50 V617.50 Z" fill="#ffffff" fill-opacity="0.1"/>
<path d="M764.00,616.50 H861.50 V626.50 A9.50,9.50 0 0 1 852.00,636.00 H773.50 A9.50,9.50 0 0 1 764.00,626.50 V616.50 Z" fill="#464646"/>
<path d="M765.00,617.50 H860.50 V626.50 A8.50,8.50 0 0 1 852.00,635.00 H773.50 A8.50,8.50 0 0 1 765.00,626.50 V617.50 Z" fill="url(#lg9)"/>
<path d="M775,622.7 L772,626.2 L775,629.7 Z M850.5,622.7 L853.5,626.2 L850.5,629.7 Z" fill="#000" fill-opacity="0.15"/>
<text x="780" y="630.5" font-size="11" fill="#393939" stroke="#393939" stroke-width="0.22" text-anchor="start" >Y:</text>
<text x="845.5" y="630.5" font-size="11" fill="#393939" stroke="#393939" stroke-width="0.22" text-anchor="end" textLength="6.72" lengthAdjust="spacingAndGlyphs" >1</text>
<path d="M875.00,564.50 H963.00 A5.00,5.00 0 0 1 968.00,569.50 V584.00 H870.00 V569.50 A5.00,5.00 0 0 1 875.00,564.50 Z" fill="#1c1c1c"/>
<path d="M875.00,565.50 H963.00 A4.00,4.00 0 0 1 967.00,569.50 V583.00 H871.00 V569.50 A4.00,4.00 0 0 1 875.00,565.50 Z" fill="url(#lg10)"/>
<path d="M870.00,584.50 H968.00 V599.50 A5.00,5.00 0 0 1 963.00,604.50 H875.00 A5.00,5.00 0 0 1 870.00,599.50 V584.50 Z" fill="#ffffff" fill-opacity="0.1"/>
<path d="M870.00,583.50 H968.00 V598.50 A5.00,5.00 0 0 1 963.00,603.50 H875.00 A5.00,5.00 0 0 1 870.00,598.50 V583.50 Z" fill="#1c1c1c"/>
<path d="M871.00,584.50 H967.00 V598.50 A4.00,4.00 0 0 1 963.00,602.50 H875.00 A4.00,4.00 0 0 1 871.00,598.50 V584.50 Z" fill="url(#lg2)"/>
<text x="878.5" y="578.8" font-size="11" fill="#000000" stroke="#000000" stroke-width="0.22" text-anchor="start" >UV Coordinates</text>
<text x="878.5" y="598.1" font-size="11" fill="#ffffff" stroke="#ffffff" stroke-width="0.22" text-anchor="start" >Reflection</text>
<rect x="761" y="643" width="210" height="1" fill="#4a4a4a" />
<rect x="761" y="644" width="210" height="1" fill="#888888" fill-opacity="0.6"/>
<path d="M769,652 L777,652 L773,660 Z" fill="#1a1a1a"/>
<text x="781" y="660" font-size="12" fill="#000" stroke="#000" stroke-width="0.22" text-anchor="start" >Display</text>
<rect x="955" y="655" width="1" height="1" fill="#dcdcdc" />
<rect x="955" y="656" width="1" height="1" fill="#1e1e1e" />
<rect x="955" y="658" width="1" height="1" fill="#dcdcdc" />
<rect x="955" y="659" width="1" height="1" fill="#1e1e1e" />
<rect x="958" y="655" width="1" height="1" fill="#dcdcdc" />
<rect x="958" y="656" width="1" height="1" fill="#1e1e1e" />
<rect x="958" y="658" width="1" height="1" fill="#dcdcdc" />
<rect x="958" y="659" width="1" height="1" fill="#1e1e1e" />
<rect x="961" y="655" width="1" height="1" fill="#dcdcdc" />
<rect x="961" y="656" width="1" height="1" fill="#1e1e1e" />
<rect x="961" y="658" width="1" height="1" fill="#dcdcdc" />
<rect x="961" y="659" width="1" height="1" fill="#1e1e1e" />
<rect x="964" y="655" width="1" height="1" fill="#dcdcdc" />
<rect x="964" y="656" width="1" height="1" fill="#1e1e1e" />
<rect x="964" y="658" width="1" height="1" fill="#dcdcdc" />
<rect x="964" y="659" width="1" height="1" fill="#1e1e1e" />
<text x="771.5" y="691" font-size="11" fill="#000" stroke="#000" stroke-width="0.22" text-anchor="start" >Aspect Ratio:</text>
<text x="878.5" y="691" font-size="11" fill="#000" stroke="#000" stroke-width="0.22" text-anchor="start" >Coordinates:</text>
<path d="M773.50,696.50 H852.00 A9.50,9.50 0 0 1 861.50,706.00 V716.50 H764.00 V706.00 A9.50,9.50 0 0 1 773.50,696.50 Z" fill="#262626"/>
<path d="M773.50,697.50 H852.00 A8.50,8.50 0 0 1 860.50,706.00 V715.50 H765.00 V706.00 A8.50,8.50 0 0 1 773.50,697.50 Z" fill="url(#lg3)"/>
<path d="M775,702.7 L772,706.2 L775,709.7 Z M850.5,702.7 L853.5,706.2 L850.5,709.7 Z" fill="#000" fill-opacity="0.3"/>
<text x="780" y="710.5" font-size="11" fill="#000000" stroke="#000000" stroke-width="0.22" text-anchor="start" >X:</text>
<text x="845.5" y="710.5" font-size="11" fill="#000000" stroke="#000000" stroke-width="0.22" text-anchor="end" textLength="23.24" lengthAdjust="spacingAndGlyphs" >1.00</text>
<path d="M764.00,717.00 H861.50 V727.00 A9.50,9.50 0 0 1 852.00,736.50 H773.50 A9.50,9.50 0 0 1 764.00,727.00 V717.00 Z" fill="#ffffff" fill-opacity="0.1"/>
<path d="M764.00,716.00 H861.50 V726.00 A9.50,9.50 0 0 1 852.00,735.50 H773.50 A9.50,9.50 0 0 1 764.00,726.00 V716.00 Z" fill="#262626"/>
<path d="M765.00,717.00 H860.50 V726.00 A8.50,8.50 0 0 1 852.00,734.50 H773.50 A8.50,8.50 0 0 1 765.00,726.00 V717.00 Z" fill="url(#lg3)"/>
<path d="M775,722.2 L772,725.7 L775,729.2 Z M850.5,722.2 L853.5,725.7 L850.5,729.2 Z" fill="#000" fill-opacity="0.3"/>
<text x="780" y="730.0" font-size="11" fill="#000000" stroke="#000000" stroke-width="0.22" text-anchor="start" >Y:</text>
<text x="845.5" y="730.0" font-size="11" fill="#000000" stroke="#000000" stroke-width="0.22" text-anchor="end" textLength="23.24" lengthAdjust="spacingAndGlyphs" >1.00</text>
<path d="M876.00,702.00 H884.00 A3.00,3.00 0 0 1 887.00,705.00 V713.00 A3.00,3.00 0 0 1 884.00,716.00 H876.00 A3.00,3.00 0 0 1 873.00,713.00 V705.00 A3.00,3.00 0 0 1 876.00,702.00 Z" fill="#fff" fill-opacity="0.08"/>
<path d="M876.00,701.00 H884.00 A3.00,3.00 0 0 1 887.00,704.00 V712.00 A3.00,3.00 0 0 1 884.00,715.00 H876.00 A3.00,3.00 0 0 1 873.00,712.00 V704.00 A3.00,3.00 0 0 1 876.00,701.00 Z" fill="#1e1e1e"/>
<path d="M876.00,702.00 H884.00 A2.00,2.00 0 0 1 886.00,704.00 V712.00 A2.00,2.00 0 0 1 884.00,714.00 H876.00 A2.00,2.00 0 0 1 874.00,712.00 V704.00 A2.00,2.00 0 0 1 876.00,702.00 Z" fill="url(#lg2)"/>
<text x="895" y="712.5" font-size="11" fill="#000" stroke="#000" stroke-width="0.22" text-anchor="start" >Repeat</text>
<path d="M876.00,724.00 H884.00 A3.00,3.00 0 0 1 887.00,727.00 V735.00 A3.00,3.00 0 0 1 884.00,738.00 H876.00 A3.00,3.00 0 0 1 873.00,735.00 V727.00 A3.00,3.00 0 0 1 876.00,724.00 Z" fill="#fff" fill-opacity="0.08"/>
<path d="M876.00,723.00 H884.00 A3.00,3.00 0 0 1 887.00,726.00 V734.00 A3.00,3.00 0 0 1 884.00,737.00 H876.00 A3.00,3.00 0 0 1 873.00,734.00 V726.00 A3.00,3.00 0 0 1 876.00,723.00 Z" fill="#1e1e1e"/>
<path d="M876.00,724.00 H884.00 A2.00,2.00 0 0 1 886.00,726.00 V734.00 A2.00,2.00 0 0 1 884.00,736.00 H876.00 A2.00,2.00 0 0 1 874.00,734.00 V726.00 A2.00,2.00 0 0 1 876.00,724.00 Z" fill="url(#lg2)"/>
<text x="895" y="734.6" font-size="11" fill="#000" stroke="#000" stroke-width="0.22" text-anchor="start" >Normalized</text>
<text x="771.5" y="760" font-size="11" fill="#000" stroke="#000" stroke-width="0.22" text-anchor="start" >Cursor Location:</text>
<path d="M773.50,768.50 H866.00 V787.50 H773.50 A9.50,9.50 0 0 1 764.00,778.00 V778.00 A9.50,9.50 0 0 1 773.50,768.50 Z" fill="#ffffff" fill-opacity="0.1"/>
<path d="M773.50,767.50 H866.00 V786.50 H773.50 A9.50,9.50 0 0 1 764.00,777.00 V777.00 A9.50,9.50 0 0 1 773.50,767.50 Z" fill="#262626"/>
<path d="M773.50,768.50 H865.00 V785.50 H773.50 A8.50,8.50 0 0 1 765.00,777.00 V777.00 A8.50,8.50 0 0 1 773.50,768.50 Z" fill="url(#lg3)"/>
<path d="M865.50,768.50 H958.50 A9.50,9.50 0 0 1 968.00,778.00 V778.00 A9.50,9.50 0 0 1 958.50,787.50 H865.50 V768.50 Z" fill="#ffffff" fill-opacity="0.1"/>
<path d="M865.50,767.50 H958.50 A9.50,9.50 0 0 1 968.00,777.00 V777.00 A9.50,9.50 0 0 1 958.50,786.50 H865.50 V767.50 Z" fill="#262626"/>
<path d="M866.50,768.50 H958.50 A8.50,8.50 0 0 1 967.00,777.00 V777.00 A8.50,8.50 0 0 1 958.50,785.50 H866.50 V768.50 Z" fill="url(#lg3)"/>
<path d="M775,773.5 L772,777.0 L775,780.5 Z M854.5,773.5 L857.5,777.0 L854.5,780.5 Z" fill="#000" fill-opacity="0.3"/>
<path d="M876.5,773.5 L873.5,777.0 L876.5,780.5 Z M957,773.5 L960,777.0 L957,780.5 Z" fill="#000" fill-opacity="0.3"/>
<text x="780" y="781.5" font-size="11" fill="#000000" stroke="#000000" stroke-width="0.22" text-anchor="start" >X:</text>
<text x="849.5" y="781.5" font-size="11" fill="#000000" stroke="#000000" stroke-width="0.22" text-anchor="end" textLength="50.14" lengthAdjust="spacingAndGlyphs" >2700.800</text>
<text x="880.5" y="781.5" font-size="11" fill="#000000" stroke="#000000" stroke-width="0.22" text-anchor="start" >Y:</text>
<text x="951.5" y="781.5" font-size="11" fill="#000000" stroke="#000000" stroke-width="0.22" text-anchor="end" textLength="49.33" lengthAdjust="spacingAndGlyphs" >1123.200</text>
<text x="771.5" y="812" font-size="11" fill="#000" stroke="#000" stroke-width="0.22" text-anchor="start" >UVs:</text>
<path d="M769.00,821.00 H815.00 V840.00 H769.00 A5.00,5.00 0 0 1 764.00,835.00 V826.00 A5.00,5.00 0 0 1 769.00,821.00 Z" fill="#ffffff" fill-opacity="0.1"/>
<path d="M769.00,820.00 H815.00 V839.00 H769.00 A5.00,5.00 0 0 1 764.00,834.00 V825.00 A5.00,5.00 0 0 1 769.00,820.00 Z" fill="#1c1c1c"/>
<path d="M769.00,821.00 H814.00 V838.00 H769.00 A4.00,4.00 0 0 1 765.00,834.00 V825.00 A4.00,4.00 0 0 1 769.00,821.00 Z" fill="url(#lg10)"/>
<text x="789.25" y="834" font-size="11" fill="#000000" stroke="#000000" stroke-width="0.22" text-anchor="middle" >Outline</text>
<path d="M814.50,821.00 H866.00 V840.00 H814.50 V821.00 Z" fill="#ffffff" fill-opacity="0.1"/>
<path d="M814.50,820.00 H866.00 V839.00 H814.50 V820.00 Z" fill="#1c1c1c"/>
<path d="M815.50,821.00 H865.00 V838.00 H815.50 V821.00 Z" fill="url(#lg2)"/>
<text x="840.0" y="834" font-size="11" fill="#ffffff" stroke="#ffffff" stroke-width="0.22" text-anchor="middle" >Dash</text>
<path d="M865.50,821.00 H917.00 V840.00 H865.50 V821.00 Z" fill="#ffffff" fill-opacity="0.1"/>
<path d="M865.50,820.00 H917.00 V839.00 H865.50 V820.00 Z" fill="#1c1c1c"/>
<path d="M866.50,821.00 H916.00 V838.00 H866.50 V821.00 Z" fill="url(#lg2)"/>
<text x="891.0" y="834" font-size="11" fill="#ffffff" stroke="#ffffff" stroke-width="0.22" text-anchor="middle" >Black</text>
<path d="M916.50,821.00 H963.00 A5.00,5.00 0 0 1 968.00,826.00 V835.00 A5.00,5.00 0 0 1 963.00,840.00 H916.50 V821.00 Z" fill="#ffffff" fill-opacity="0.1"/>
<path d="M916.50,820.00 H963.00 A5.00,5.00 0 0 1 968.00,825.00 V834.00 A5.00,5.00 0 0 1 963.00,839.00 H916.50 V820.00 Z" fill="#1c1c1c"/>
<path d="M917.50,821.00 H963.00 A4.00,4.00 0 0 1 967.00,825.00 V834.00 A4.00,4.00 0 0 1 963.00,838.00 H917.50 V821.00 Z" fill="url(#lg2)"/>
<text x="942.25" y="834" font-size="11" fill="#ffffff" stroke="#ffffff" stroke-width="0.22" text-anchor="middle" >White</text>
<path d="M770.00,848.00 H778.00 A3.00,3.00 0 0 1 781.00,851.00 V859.00 A3.00,3.00 0 0 1 778.00,862.00 H770.00 A3.00,3.00 0 0 1 767.00,859.00 V851.00 A3.00,3.00 0 0 1 770.00,848.00 Z" fill="#fff" fill-opacity="0.08"/>
<path d="M770.00,847.00 H778.00 A3.00,3.00 0 0 1 781.00,850.00 V858.00 A3.00,3.00 0 0 1 778.00,861.00 H770.00 A3.00,3.00 0 0 1 767.00,858.00 V850.00 A3.00,3.00 0 0 1 770.00,847.00 Z" fill="#1e1e1e"/>
<path d="M770.00,848.00 H778.00 A2.00,2.00 0 0 1 780.00,850.00 V858.00 A2.00,2.00 0 0 1 778.00,860.00 H770.00 A2.00,2.00 0 0 1 768.00,858.00 V850.00 A2.00,2.00 0 0 1 770.00,848.00 Z" fill="url(#lg2)"/>
<path d="M769.5,853.5 L772.5,857 L779,846.5" fill="none" stroke="#f0f0f0" stroke-width="1.7"/>
<text x="789.4" y="858.5" font-size="11" fill="#ffffff" stroke="#ffffff" stroke-width="0.22" text-anchor="start" >Draw Faces</text>
<path d="M876.00,848.00 H884.00 A3.00,3.00 0 0 1 887.00,851.00 V859.00 A3.00,3.00 0 0 1 884.00,862.00 H876.00 A3.00,3.00 0 0 1 873.00,859.00 V851.00 A3.00,3.00 0 0 1 876.00,848.00 Z" fill="#fff" fill-opacity="0.08"/>
<path d="M876.00,847.00 H884.00 A3.00,3.00 0 0 1 887.00,850.00 V858.00 A3.00,3.00 0 0 1 884.00,861.00 H876.00 A3.00,3.00 0 0 1 873.00,858.00 V850.00 A3.00,3.00 0 0 1 876.00,847.00 Z" fill="#1e1e1e"/>
<path d="M876.00,848.00 H884.00 A2.00,2.00 0 0 1 886.00,850.00 V858.00 A2.00,2.00 0 0 1 884.00,860.00 H876.00 A2.00,2.00 0 0 1 874.00,858.00 V850.00 A2.00,2.00 0 0 1 876.00,848.00 Z" fill="url(#lg2)"/>
<text x="895" y="858.5" font-size="11" fill="#000" stroke="#000" stroke-width="0.22" text-anchor="start" >Stretch</text>
<path d="M770.00,870.00 H778.00 A3.00,3.00 0 0 1 781.00,873.00 V881.00 A3.00,3.00 0 0 1 778.00,884.00 H770.00 A3.00,3.00 0 0 1 767.00,881.00 V873.00 A3.00,3.00 0 0 1 770.00,870.00 Z" fill="#fff" fill-opacity="0.08"/>
<path d="M770.00,869.00 H778.00 A3.00,3.00 0 0 1 781.00,872.00 V880.00 A3.00,3.00 0 0 1 778.00,883.00 H770.00 A3.00,3.00 0 0 1 767.00,880.00 V872.00 A3.00,3.00 0 0 1 770.00,869.00 Z" fill="#1e1e1e"/>
<path d="M770.00,870.00 H778.00 A2.00,2.00 0 0 1 780.00,872.00 V880.00 A2.00,2.00 0 0 1 778.00,882.00 H770.00 A2.00,2.00 0 0 1 768.00,880.00 V872.00 A2.00,2.00 0 0 1 770.00,870.00 Z" fill="url(#lg2)"/>
<text x="789.4" y="880.6" font-size="11" fill="#000" stroke="#000" stroke-width="0.22" text-anchor="start" >Smooth</text>
<path d="M875.00,867.50 H919.00 V886.50 H875.00 A5.00,5.00 0 0 1 870.00,881.50 V872.50 A5.00,5.00 0 0 1 875.00,867.50 Z" fill="#ffffff" fill-opacity="0.1"/>
<path d="M875.00,866.50 H919.00 V885.50 H875.00 A5.00,5.00 0 0 1 870.00,880.50 V871.50 A5.00,5.00 0 0 1 875.00,866.50 Z" fill="#393939"/>
<path d="M875.00,867.50 H918.00 V884.50 H875.00 A4.00,4.00 0 0 1 871.00,880.50 V871.50 A4.00,4.00 0 0 1 875.00,867.50 Z" fill="url(#lg7)"/>
<path d="M918.50,867.50 H963.00 A5.00,5.00 0 0 1 968.00,872.50 V881.50 A5.00,5.00 0 0 1 963.00,886.50 H918.50 V867.50 Z" fill="#ffffff" fill-opacity="0.1"/>
<path d="M918.50,866.50 H963.00 A5.00,5.00 0 0 1 968.00,871.50 V880.50 A5.00,5.00 0 0 1 963.00,885.50 H918.50 V866.50 Z" fill="#393939"/>
<path d="M919.50,867.50 H963.00 A4.00,4.00 0 0 1 967.00,871.50 V880.50 A4.00,4.00 0 0 1 963.00,884.50 H919.50 V867.50 Z" fill="url(#lg8)"/>
<text x="894" y="880.6" font-size="11" fill="#393939" stroke="#393939" stroke-width="0.22" text-anchor="middle" >Angle</text>
<text x="942.5" y="880.6" font-size="11" fill="#b8b8b8" stroke="#b8b8b8" stroke-width="0.22" text-anchor="middle" >Area</text>
<path d="M770.00,892.00 H778.00 A3.00,3.00 0 0 1 781.00,895.00 V903.00 A3.00,3.00 0 0 1 778.00,906.00 H770.00 A3.00,3.00 0 0 1 767.00,903.00 V895.00 A3.00,3.00 0 0 1 770.00,892.00 Z" fill="#fff" fill-opacity="0.08"/>
<path d="M770.00,891.00 H778.00 A3.00,3.00 0 0 1 781.00,894.00 V902.00 A3.00,3.00 0 0 1 778.00,905.00 H770.00 A3.00,3.00 0 0 1 767.00,902.00 V894.00 A3.00,3.00 0 0 1 770.00,891.00 Z" fill="#1e1e1e"/>
<path d="M770.00,892.00 H778.00 A2.00,2.00 0 0 1 780.00,894.00 V902.00 A2.00,2.00 0 0 1 778.00,904.00 H770.00 A2.00,2.00 0 0 1 768.00,902.00 V894.00 A2.00,2.00 0 0 1 770.00,892.00 Z" fill="url(#lg2)"/>
<text x="789.4" y="902.5" font-size="11" fill="#000" stroke="#000" stroke-width="0.22" text-anchor="start" >Modified</text>
<line x1="0" y1="13" x2="13" y2="26" stroke="#a0a0a0" stroke-width="1" stroke-opacity="0.7"/>
<line x1="0" y1="14" x2="12" y2="26" stroke="#333" stroke-width="0.8" stroke-opacity="0.5"/>
<line x1="0" y1="17" x2="9" y2="26" stroke="#a0a0a0" stroke-width="1" stroke-opacity="0.7"/>
<line x1="0" y1="18" x2="8" y2="26" stroke="#333" stroke-width="0.8" stroke-opacity="0.5"/>
<line x1="0" y1="21" x2="5" y2="26" stroke="#a0a0a0" stroke-width="1" stroke-opacity="0.7"/>
<line x1="0" y1="22" x2="4" y2="26" stroke="#333" stroke-width="0.8" stroke-opacity="0.5"/>
<path d="M14.00,4.00 H34.00 A5.00,5.00 0 0 1 39.00,9.00 V18.50 A5.00,5.00 0 0 1 34.00,23.50 H14.00 A5.00,5.00 0 0 1 9.00,18.50 V9.00 A5.00,5.00 0 0 1 14.00,4.00 Z" fill="#ffffff" fill-opacity="0.1"/>
<path d="M14.00,3.00 H34.00 A5.00,5.00 0 0 1 39.00,8.00 V17.50 A5.00,5.00 0 0 1 34.00,22.50 H14.00 A5.00,5.00 0 0 1 9.00,17.50 V8.00 A5.00,5.00 0 0 1 14.00,3.00 Z" fill="#1c1c1c"/>
<path d="M14.00,4.00 H34.00 A4.00,4.00 0 0 1 38.00,8.00 V17.50 A4.00,4.00 0 0 1 34.00,21.50 H14.00 A4.00,4.00 0 0 1 10.00,17.50 V8.00 A4.00,4.00 0 0 1 14.00,4.00 Z" fill="url(#lg2)"/>
<circle cx="20" cy="12.75" r="6.3" fill="#0e1a33"/>
<circle cx="20" cy="12.75" r="5.5" fill="url(#lg11)"/>
<path d="M18.5,11.25 h2.6 v4.2 h1 v1.3 h-4 v-1.3 h1 v-2.9 h-0.6 Z" fill="#fff"/>
<circle cx="20.2" cy="9.15" r="1.2" fill="#fff"/>
<path d="M29.5,11.25 L32.5,6.75 L35.5,11.25 Z M29.5,14.25 L32.5,18.75 L35.5,14.25 Z" fill="#c8c8c8" fill-opacity="0.8"/>
<text x="51.5" y="18" font-size="11" fill="#000" stroke="#000" stroke-width="0.22" text-anchor="start" >File</text>
<text x="89.4" y="18" font-size="11" fill="#000" stroke="#000" stroke-width="0.22" text-anchor="start" >Render</text>
<text x="145" y="18" font-size="11" fill="#000" stroke="#000" stroke-width="0.22" text-anchor="start" >Window</text>
<text x="204.4" y="18" font-size="11" fill="#000" stroke="#000" stroke-width="0.22" text-anchor="start" >Help</text>
<path d="M246.00,4.00 H272.50 V23.50 H246.00 A5.00,5.00 0 0 1 241.00,18.50 V9.00 A5.00,5.00 0 0 1 246.00,4.00 Z" fill="#ffffff" fill-opacity="0.1"/>
<path d="M246.00,3.00 H272.50 V22.50 H246.00 A5.00,5.00 0 0 1 241.00,17.50 V8.00 A5.00,5.00 0 0 1 246.00,3.00 Z" fill="#1c1c1c"/>
<path d="M246.00,4.00 H271.50 V21.50 H246.00 A4.00,4.00 0 0 1 242.00,17.50 V8.00 A4.00,4.00 0 0 1 246.00,4.00 Z" fill="url(#lg2)"/>
<rect x="245" y="6.75" width="5" height="5" fill="#e8e8e8" stroke="#111" stroke-width="0.8"/>
<rect x="245" y="12.75" width="5" height="6" fill="#e8e8e8" stroke="#111" stroke-width="0.8"/>
<rect x="251" y="6.75" width="6" height="12" fill="#d0d0d0" stroke="#111" stroke-width="0.8"/>
<path d="M262,11.25 L265,6.75 L268,11.25 Z M262,14.25 L265,18.75 L268,14.25 Z" fill="#c8c8c8" fill-opacity="0.8"/>
<path d="M272.00,4.00 H391.50 V23.50 H272.00 V4.00 Z" fill="#ffffff" fill-opacity="0.1"/>
<path d="M272.00,3.00 H391.50 V22.50 H272.00 V3.00 Z" fill="#262626"/>
<path d="M273.00,4.00 H390.50 V21.50 H273.00 V4.00 Z" fill="url(#lg5)"/>
<text x="279.4" y="18" font-size="11" fill="#000000" stroke="#000000" stroke-width="0.22" text-anchor="start" >UV Editing</text>
<path d="M391.00,4.00 H412.00 V23.50 H391.00 V4.00 Z" fill="#ffffff" fill-opacity="0.1"/>
<path d="M391.00,3.00 H412.00 V22.50 H391.00 V3.00 Z" fill="#262626"/>
<path d="M392.00,4.00 H411.00 V21.50 H392.00 V4.00 Z" fill="url(#lg1)"/>
<path d="M400.0,7.25 h3 v4 h4 v3 h-4 v4 h-3 v-4 h-4 v-3 h4 Z" fill="#fff" stroke="#111" stroke-width="0.9"/>
<path d="M411.50,4.00 H426.50 A5.00,5.00 0 0 1 431.50,9.00 V18.50 A5.00,5.00 0 0 1 426.50,23.50 H411.50 V4.00 Z" fill="#ffffff" fill-opacity="0.1"/>
<path d="M411.50,3.00 H426.50 A5.00,5.00 0 0 1 431.50,8.00 V17.50 A5.00,5.00 0 0 1 426.50,22.50 H411.50 V3.00 Z" fill="#262626"/>
<path d="M412.50,4.00 H426.50 A4.00,4.00 0 0 1 430.50,8.00 V17.50 A4.00,4.00 0 0 1 426.50,21.50 H412.50 V4.00 Z" fill="url(#lg1)"/>
<g transform="translate(421.5,12.75) rotate(45)"><path d="M-1.5,-6 h3 v4.5 h4.5 v3 h-4.5 v4.5 h-3 v-4.5 h-4.5 v-3 h4.5 Z" fill="#fff" stroke="#111" stroke-width="0.9"/></g>
<path d="M442.00,4.00 H468.50 V23.50 H442.00 A5.00,5.00 0 0 1 437.00,18.50 V9.00 A5.00,5.00 0 0 1 442.00,4.00 Z" fill="#ffffff" fill-opacity="0.1"/>
<path d="M442.00,3.00 H468.50 V22.50 H442.00 A5.00,5.00 0 0 1 437.00,17.50 V8.00 A5.00,5.00 0 0 1 442.00,3.00 Z" fill="#1c1c1c"/>
<path d="M442.00,4.00 H467.50 V21.50 H442.00 A4.00,4.00 0 0 1 438.00,17.50 V8.00 A4.00,4.00 0 0 1 442.00,4.00 Z" fill="url(#lg2)"/>
<circle cx="444.5" cy="7.75" r="2" fill="#f0f060"/>
<rect x="448" y="7.75" width="5" height="9" rx="2.5" fill="#5080d0" stroke="#111" stroke-width="0.7"/>
<circle cx="446.5" cy="15.75" r="3.3" fill="url(#lg12)" stroke="#111" stroke-width="0.7"/>
<path d="M458.5,11.25 L461.5,6.75 L464.5,11.25 Z M458.5,14.25 L461.5,18.75 L464.5,14.25 Z" fill="#c8c8c8" fill-opacity="0.8"/>
<path d="M468.00,4.00 H588.50 V23.50 H468.00 V4.00 Z" fill="#ffffff" fill-opacity="0.1"/>
<path d="M468.00,3.00 H588.50 V22.50 H468.00 V3.00 Z" fill="#262626"/>
<path d="M469.00,4.00 H587.50 V21.50 H469.00 V4.00 Z" fill="url(#lg5)"/>
<text x="476" y="18" font-size="11" fill="#000000" stroke="#000000" stroke-width="0.22" text-anchor="start" >Scene</text>
<path d="M588.00,4.00 H608.50 V23.50 H588.00 V4.00 Z" fill="#ffffff" fill-opacity="0.1"/>
<path d="M588.00,3.00 H608.50 V22.50 H588.00 V3.00 Z" fill="#262626"/>
<path d="M589.00,4.00 H607.50 V21.50 H589.00 V4.00 Z" fill="url(#lg1)"/>
<path d="M597.0,7.25 h3 v4 h4 v3 h-4 v4 h-3 v-4 h-4 v-3 h4 Z" fill="#fff" stroke="#111" stroke-width="0.9"/>
<path d="M608.00,4.00 H623.50 A5.00,5.00 0 0 1 628.50,9.00 V18.50 A5.00,5.00 0 0 1 623.50,23.50 H608.00 V4.00 Z" fill="#ffffff" fill-opacity="0.1"/>
<path d="M608.00,3.00 H623.50 A5.00,5.00 0 0 1 628.50,8.00 V17.50 A5.00,5.00 0 0 1 623.50,22.50 H608.00 V3.00 Z" fill="#262626"/>
<path d="M609.00,4.00 H623.50 A4.00,4.00 0 0 1 627.50,8.00 V17.50 A4.00,4.00 0 0 1 623.50,21.50 H609.00 V4.00 Z" fill="url(#lg1)"/>
<g transform="translate(618.5,12.75) rotate(45)"><path d="M-1.5,-6 h3 v4.5 h4.5 v3 h-4.5 v4.5 h-3 v-4.5 h-4.5 v-3 h4.5 Z" fill="#fff" stroke="#111" stroke-width="0.9"/></g>
<path d="M650.00,4.00 H751.00 A5.00,5.00 0 0 1 756.00,9.00 V18.50 A5.00,5.00 0 0 1 751.00,23.50 H650.00 A5.00,5.00 0 0 1 645.00,18.50 V9.00 A5.00,5.00 0 0 1 650.00,4.00 Z" fill="#ffffff" fill-opacity="0.1"/>
<path d="M650.00,3.00 H751.00 A5.00,5.00 0 0 1 756.00,8.00 V17.50 A5.00,5.00 0 0 1 751.00,22.50 H650.00 A5.00,5.00 0 0 1 645.00,17.50 V8.00 A5.00,5.00 0 0 1 650.00,3.00 Z" fill="#1c1c1c"/>
<path d="M650.00,4.00 H751.00 A4.00,4.00 0 0 1 755.00,8.00 V17.50 A4.00,4.00 0 0 1 751.00,21.50 H650.00 A4.00,4.00 0 0 1 646.00,17.50 V8.00 A4.00,4.00 0 0 1 650.00,4.00 Z" fill="url(#lg2)"/>
<text x="653.5" y="18" font-size="11" fill="#ffffff" stroke="#ffffff" stroke-width="0.22" text-anchor="start" >Blender Render</text>
<path d="M746.5,11.25 L749.5,6.75 L752.5,11.25 Z M746.5,14.25 L749.5,18.75 L752.5,14.25 Z" fill="#c8c8c8" fill-opacity="0.8"/>
<path d="M773,14 L778,10 L776,8 L782,8 L785,7 L788,10 Z" fill="#f08020" stroke="#3a2000" stroke-width="0.6"/>
<circle cx="783" cy="14" r="5.3" fill="#f08020" stroke="#3a2000" stroke-width="0.6"/>
<circle cx="783.5" cy="13.7" r="3" fill="#ffffff"/>
<circle cx="783.5" cy="13.7" r="1.7" fill="#2060c0"/>
<text x="800.2" y="18" font-size="11" fill="#000" stroke="#000" stroke-width="0.22" text-anchor="start" textLength="455" lengthAdjust="spacingAndGlyphs" >v2.72 | Verts:482/482 | Edges:992/992 | Faces:512/512 | Tris:960 | Mem:43.58M | Sphere</text>
<line x1="1907" y1="1" x2="1919" y2="13" stroke="#a0a0a0" stroke-width="1" stroke-opacity="0.7"/>
<line x1="1911" y1="1" x2="1919" y2="9" stroke="#a0a0a0" stroke-width="1" stroke-opacity="0.7"/>
<line x1="1915" y1="1" x2="1919" y2="5" stroke="#a0a0a0" stroke-width="1" stroke-opacity="0.7"/>
<line x1="0" y1="1067" x2="13" y2="1080" stroke="#a0a0a0" stroke-width="1" stroke-opacity="0.7"/>
<line x1="0" y1="1068" x2="12" y2="1080" stroke="#333" stroke-width="0.8" stroke-opacity="0.5"/>
<line x1="0" y1="1071" x2="9" y2="1080" stroke="#a0a0a0" stroke-width="1" stroke-opacity="0.7"/>
<line x1="0" y1="1072" x2="8" y2="1080" stroke="#333" stroke-width="0.8" stroke-opacity="0.5"/>
<line x1="0" y1="1075" x2="5" y2="1080" stroke="#a0a0a0" stroke-width="1" stroke-opacity="0.7"/>
<line x1="0" y1="1076" x2="4" y2="1080" stroke="#333" stroke-width="0.8" stroke-opacity="0.5"/>
<path d="M14.00,1058.50 H34.00 A5.00,5.00 0 0 1 39.00,1063.50 V1073.00 A5.00,5.00 0 0 1 34.00,1078.00 H14.00 A5.00,5.00 0 0 1 9.00,1073.00 V1063.50 A5.00,5.00 0 0 1 14.00,1058.50 Z" fill="#ffffff" fill-opacity="0.1"/>
<path d="M14.00,1057.50 H34.00 A5.00,5.00 0 0 1 39.00,1062.50 V1072.00 A5.00,5.00 0 0 1 34.00,1077.00 H14.00 A5.00,5.00 0 0 1 9.00,1072.00 V1062.50 A5.00,5.00 0 0 1 14.00,1057.50 Z" fill="#1c1c1c"/>
<path d="M14.00,1058.50 H34.00 A4.00,4.00 0 0 1 38.00,1062.50 V1072.00 A4.00,4.00 0 0 1 34.00,1076.00 H14.00 A4.00,4.00 0 0 1 10.00,1072.00 V1062.50 A4.00,4.00 0 0 1 14.00,1058.50 Z" fill="url(#lg2)"/>
<rect x="13" y="1061.25" width="14" height="12" fill="#f4f4f4" stroke="#111" stroke-width="0.8"/>
<rect x="14" y="1062.25" width="12" height="5" fill="#e8a8a0"/>
<rect x="14" y="1067.25" width="12" height="1.3" fill="#222"/>
<rect x="14" y="1068.55" width="12" height="2.5" fill="#9c9cd6"/>
<circle cx="15" cy="1072.05" r="0.8" fill="#d00"/>
<path d="M29.5,1065.75 L32.5,1061.25 L35.5,1065.75 Z M29.5,1068.75 L32.5,1073.25 L35.5,1068.75 Z" fill="#c8c8c8" fill-opacity="0.8"/>
<text x="51.9" y="1072" font-size="11" fill="#000" stroke="#000" stroke-width="0.22" text-anchor="start" >View</text>
<text x="96.25" y="1072" font-size="11" fill="#000" stroke="#000" stroke-width="0.22" text-anchor="start" >Select</text>
<text x="147.25" y="1072" font-size="11" fill="#000" stroke="#000" stroke-width="0.22" text-anchor="start" >Image</text>
<text x="198.5" y="1072" font-size="11" fill="#000" stroke="#000" stroke-width="0.22" text-anchor="start" >UVs</text>
<path d="M236.00,1058.50 H263.00 V1077.50 H236.00 A5.00,5.00 0 0 1 231.00,1072.50 V1063.50 A5.00,5.00 0 0 1 236.00,1058.50 Z" fill="#ffffff" fill-opacity="0.1"/>
<path d="M236.00,1057.50 H263.00 V1076.50 H236.00 A5.00,5.00 0 0 1 231.00,1071.50 V1062.50 A5.00,5.00 0 0 1 236.00,1057.50 Z" fill="#1c1c1c"/>
<path d="M236.00,1058.50 H262.00 V1075.50 H236.00 A4.00,4.00 0 0 1 232.00,1071.50 V1062.50 A4.00,4.00 0 0 1 236.00,1058.50 Z" fill="url(#lg2)"/>
<path d="M238.5,1061.0 h7 l3,3 v9 h-10 Z" fill="#f4f4f4" stroke="#222" stroke-width="0.8"/>
<rect x="239.5" y="1064.0" width="8" height="3.5" fill="#e8a0a0"/>
<rect x="239.5" y="1067.5" width="8" height="1.2" fill="#222"/>
<rect x="239.5" y="1068.7" width="8" height="3.5" fill="#9a9ad8"/>
<path d="M253.5,1065.5 L256.5,1061.0 L259.5,1065.5 Z M253.5,1068.5 L256.5,1073.0 L259.5,1068.5 Z" fill="#c8c8c8" fill-opacity="0.8"/>
<path d="M262.50,1058.50 H383.00 V1077.50 H262.50 V1058.50 Z" fill="#ffffff" fill-opacity="0.1"/>
<path d="M262.50,1057.50 H383.00 V1076.50 H262.50 V1057.50 Z" fill="#262626"/>
<path d="M263.50,1058.50 H382.00 V1075.50 H263.50 V1058.50 Z" fill="url(#lg5)"/>
<text x="270.6" y="1071.6" font-size="11" fill="#000000" stroke="#000000" stroke-width="0.22" text-anchor="start" >bluemarble.jpg</text>
<path d="M382.50,1058.50 H403.00 V1077.50 H382.50 V1058.50 Z" fill="#ffffff" fill-opacity="0.1"/>
<path d="M382.50,1057.50 H403.00 V1076.50 H382.50 V1057.50 Z" fill="#262626"/>
<path d="M383.50,1058.50 H402.00 V1075.50 H383.50 V1058.50 Z" fill="url(#lg6)"/>
<text x="392.5" y="1071.6" font-size="11" fill="#000000" stroke="#000000" stroke-width="0.22" text-anchor="middle" >F</text>
<path d="M402.50,1058.50 H423.00 V1077.50 H402.50 V1058.50 Z" fill="#ffffff" fill-opacity="0.1"/>
<path d="M402.50,1057.50 H423.00 V1076.50 H402.50 V1057.50 Z" fill="#262626"/>
<path d="M403.50,1058.50 H422.00 V1075.50 H403.50 V1058.50 Z" fill="url(#lg1)"/>
<path d="M411.25,1061.5 h3 v4 h4 v3 h-4 v4 h-3 v-4 h-4 v-3 h4 Z" fill="#fff" stroke="#111" stroke-width="0.9"/>
<path d="M422.50,1058.50 H443.00 V1077.50 H422.50 V1058.50 Z" fill="#ffffff" fill-opacity="0.1"/>
<path d="M422.50,1057.50 H443.00 V1076.50 H422.50 V1057.50 Z" fill="#262626"/>
<path d="M423.50,1058.50 H442.00 V1075.50 H423.50 V1058.50 Z" fill="url(#lg1)"/>
<path d="M425.5,1064.0 h4 l1,-1.5 h3 v1.5 h5 v9 h-13 Z" fill="#d9cf9c" stroke="#2a2410" stroke-width="0.9"/>
<rect x="430.5" y="1060.5" width="6" height="5" fill="#f0f0f0" stroke="#333" stroke-width="0.7"/>
<path d="M425.5,1073.0 l2,-6 h13 l-2,6 Z" fill="#e6dca8" stroke="#2a2410" stroke-width="0.9"/>
<path d="M442.50,1058.50 H457.50 A5.00,5.00 0 0 1 462.50,1063.50 V1072.50 A5.00,5.00 0 0 1 457.50,1077.50 H442.50 V1058.50 Z" fill="#ffffff" fill-opacity="0.1"/>
<path d="M442.50,1057.50 H457.50 A5.00,5.00 0 0 1 462.50,1062.50 V1071.50 A5.00,5.00 0 0 1 457.50,1076.50 H442.50 V1057.50 Z" fill="#262626"/>
<path d="M443.50,1058.50 H457.50 A4.00,4.00 0 0 1 461.50,1062.50 V1071.50 A4.00,4.00 0 0 1 457.50,1075.50 H443.50 V1058.50 Z" fill="url(#lg1)"/>
<g transform="translate(452.5,1067.0) rotate(45)"><path d="M-1.5,-6 h3 v4.5 h4.5 v3 h-4.5 v4.5 h-3 v-4.5 h-4.5 v-3 h4.5 Z" fill="#fff" stroke="#111" stroke-width="0.9"/></g>
<path d="M473.50,1058.50 H482.50 A5.00,5.00 0 0 1 487.50,1063.50 V1072.50 A5.00,5.00 0 0 1 482.50,1077.50 H473.50 A5.00,5.00 0 0 1 468.50,1072.50 V1063.50 A5.00,5.00 0 0 1 473.50,1058.50 Z" fill="#ffffff" fill-opacity="0.1"/>
<path d="M473.50,1057.50 H482.50 A5.00,5.00 0 0 1 487.50,1062.50 V1071.50 A5.00,5.00 0 0 1 482.50,1076.50 H473.50 A5.00,5.00 0 0 1 468.50,1071.50 V1062.50 A5.00,5.00 0 0 1 473.50,1057.50 Z" fill="#262626"/>
<path d="M473.50,1058.50 H482.50 A4.00,4.00 0 0 1 486.50,1062.50 V1071.50 A4.00,4.00 0 0 1 482.50,1075.50 H473.50 A4.00,4.00 0 0 1 469.50,1071.50 V1062.50 A4.00,4.00 0 0 1 473.50,1058.50 Z" fill="url(#lg6)"/>
<g transform="translate(478,1067.0) rotate(45)"><rect x="-2.5" y="-7" width="5" height="6" fill="#e0e0e0" stroke="#111" stroke-width="0.8"/><rect x="-4" y="-2" width="8" height="2" fill="#ccc" stroke="#111" stroke-width="0.8"/><line x1="0" y1="0" x2="0" y2="7" stroke="#111" stroke-width="1.2"/></g>
<path d="M498.50,1058.50 H553.50 A5.00,5.00 0 0 1 558.50,1063.50 V1072.50 A5.00,5.00 0 0 1 553.50,1077.50 H498.50 A5.00,5.00 0 0 1 493.50,1072.50 V1063.50 A5.00,5.00 0 0 1 498.50,1058.50 Z" fill="#ffffff" fill-opacity="0.1"/>
<path d="M498.50,1057.50 H553.50 A5.00,5.00 0 0 1 558.50,1062.50 V1071.50 A5.00,5.00 0 0 1 553.50,1076.50 H498.50 A5.00,5.00 0 0 1 493.50,1071.50 V1062.50 A5.00,5.00 0 0 1 498.50,1057.50 Z" fill="#1c1c1c"/>
<path d="M498.50,1058.50 H553.50 A4.00,4.00 0 0 1 557.50,1062.50 V1071.50 A4.00,4.00 0 0 1 553.50,1075.50 H498.50 A4.00,4.00 0 0 1 494.50,1071.50 V1062.50 A4.00,4.00 0 0 1 498.50,1058.50 Z" fill="url(#lg2)"/>
<path d="M500,1061.0 h7 l3,3 v9 h-10 Z" fill="#f4f4f4" stroke="#222" stroke-width="0.8"/>
<rect x="501" y="1064.0" width="8" height="3.5" fill="#e8a0a0"/>
<rect x="501" y="1067.5" width="8" height="1.2" fill="#222"/>
<rect x="501" y="1068.7" width="8" height="3.5" fill="#9a9ad8"/>
<text x="516.9" y="1071.6" font-size="11" fill="#ffffff" stroke="#ffffff" stroke-width="0.22" text-anchor="start" >View</text>
<path d="M549.5,1065.5 L552.5,1061.0 L555.5,1065.5 Z M549.5,1068.5 L552.5,1073.0 L555.5,1068.5 Z" fill="#c8c8c8" fill-opacity="0.8"/>
<path d="M569.50,1058.50 H593.50 A5.00,5.00 0 0 1 598.50,1063.50 V1072.50 A5.00,5.00 0 0 1 593.50,1077.50 H569.50 A5.00,5.00 0 0 1 564.50,1072.50 V1063.50 A5.00,5.00 0 0 1 569.50,1058.50 Z" fill="#ffffff" fill-opacity="0.1"/>
<path d="M569.50,1057.50 H593.50 A5.00,5.00 0 0 1 598.50,1062.50 V1071.50 A5.00,5.00 0 0 1 593.50,1076.50 H569.50 A5.00,5.00 0 0 1 564.50,1071.50 V1062.50 A5.00,5.00 0 0 1 569.50,1057.50 Z" fill="#1c1c1c"/>
<path d="M569.50,1058.50 H593.50 A4.00,4.00 0 0 1 597.50,1062.50 V1071.50 A4.00,4.00 0 0 1 593.50,1075.50 H569.50 A4.00,4.00 0 0 1 565.50,1071.50 V1062.50 A4.00,4.00 0 0 1 569.50,1058.50 Z" fill="url(#lg2)"/>
<path d="M570,1063.5 v-2.5 h2.5 M580,1061.0 h2.5 v2.5 M582.5,1070.5 v2.5 h-2.5 M572.5,1073.0 h-2.5 v-2.5" stroke="#fff" stroke-width="1.3" fill="none"/>
<rect x="574" y="1065.0" width="4.5" height="4.5" fill="#3070ff" stroke="#fff" stroke-width="1"/>
<path d="M589.5,1065.5 L592.5,1061.0 L595.5,1065.5 Z M589.5,1068.5 L592.5,1073.0 L595.5,1068.5 Z" fill="#c8c8c8" fill-opacity="0.8"/>
<path d="M609.50,1058.50 H618.50 A5.00,5.00 0 0 1 623.50,1063.50 V1072.50 A5.00,5.00 0 0 1 618.50,1077.50 H609.50 A5.00,5.00 0 0 1 604.50,1072.50 V1063.50 A5.00,5.00 0 0 1 609.50,1058.50 Z" fill="#ffffff" fill-opacity="0.1"/>
<path d="M609.50,1057.50 H618.50 A5.00,5.00 0 0 1 623.50,1062.50 V1071.50 A5.00,5.00 0 0 1 618.50,1076.50 H609.50 A5.00,5.00 0 0 1 604.50,1071.50 V1062.50 A5.00,5.00 0 0 1 609.50,1057.50 Z" fill="#262626"/>
<path d="M609.50,1058.50 H618.50 A4.00,4.00 0 0 1 622.50,1062.50 V1071.50 A4.00,4.00 0 0 1 618.50,1075.50 H609.50 A4.00,4.00 0 0 1 605.50,1071.50 V1062.50 A4.00,4.00 0 0 1 609.50,1058.50 Z" fill="url(#lg6)"/>
<path d="M609,1061.5 h6 l3,3 v7 h-6 l-3,-3 Z" fill="#bbb" stroke="#333" stroke-width="0.6"/>
<rect x="607.5" y="1060.5" width="3" height="3" fill="#f0a040" stroke="#222" stroke-width="0.6"/><rect x="607.5" y="1069.5" width="3" height="3" fill="#f0a040" stroke="#222" stroke-width="0.6"/>
<path d="M615,1065.5 l6,6 h-3 l1.5,3 -1.5,0.7 -1.5,-3 -2,2 Z" fill="#fff" stroke="#111" stroke-width="0.7"/>
<path d="M634.75,1058.50 H648.75 V1077.50 H634.75 A5.00,5.00 0 0 1 629.75,1072.50 V1063.50 A5.00,5.00 0 0 1 634.75,1058.50 Z" fill="#ffffff" fill-opacity="0.1"/>
<path d="M634.75,1057.50 H648.75 V1076.50 H634.75 A5.00,5.00 0 0 1 629.75,1071.50 V1062.50 A5.00,5.00 0 0 1 634.75,1057.50 Z" fill="#1c1c1c"/>
<path d="M634.75,1058.50 H647.75 V1075.50 H634.75 A4.00,4.00 0 0 1 630.75,1071.50 V1062.50 A4.00,4.00 0 0 1 634.75,1058.50 Z" fill="url(#lg10)"/>
<path d="M648.50,1058.50 H668.50 V1077.50 H648.50 V1058.50 Z" fill="#ffffff" fill-opacity="0.1"/>
<path d="M648.50,1057.50 H668.50 V1076.50 H648.50 V1057.50 Z" fill="#1c1c1c"/>
<path d="M649.50,1058.50 H667.50 V1075.50 H649.50 V1058.50 Z" fill="url(#lg2)"/>
<path d="M668.50,1058.50 H688.50 V1077.50 H668.50 V1058.50 Z" fill="#ffffff" fill-opacity="0.1"/>
<path d="M668.50,1057.50 H688.50 V1076.50 H668.50 V1057.50 Z" fill="#1c1c1c"/>
<path d="M669.50,1058.50 H687.50 V1075.50 H669.50 V1058.50 Z" fill="url(#lg2)"/>
<path d="M688.50,1058.50 H703.50 A5.00,5.00 0 0 1 708.50,1063.50 V1072.50 A5.00,5.00 0 0 1 703.50,1077.50 H688.50 V1058.50 Z" fill="#ffffff" fill-opacity="0.1"/>
<path d="M688.50,1057.50 H703.50 A5.00,5.00 0 0 1 708.50,1062.50 V1071.50 A5.00,5.00 0 0 1 703.50,1076.50 H688.50 V1057.50 Z" fill="#1c1c1c"/>
<path d="M689.50,1058.50 H703.50 A4.00,4.00 0 0 1 707.50,1062.50 V1071.50 A4.00,4.00 0 0 1 703.50,1075.50 H689.50 V1058.50 Z" fill="url(#lg2)"/>
<rect x="633" y="1061.0" width="12" height="12" fill="#8aaee0" fill-opacity="0.6" stroke="#c0d4f0" stroke-width="0.6"/>
<rect x="632" y="1060.0" width="3.5" height="3.5" fill="#f0a040" stroke="#222" stroke-width="0.7"/>
<rect x="639" y="1060.0" width="3.5" height="3.5" fill="#f0a040" stroke="#222" stroke-width="0.7"/>
<rect x="632" y="1067.0" width="3.5" height="3.5" fill="#f0a040" stroke="#222" stroke-width="0.7"/>
<rect x="639" y="1067.0" width="3.5" height="3.5" fill="#f0a040" stroke="#222" stroke-width="0.7"/>
<rect x="652" y="1061.0" width="13" height="12" fill="none" stroke="#666" stroke-width="0.8"/>
<rect x="651.5" y="1060.0" width="2.2" height="10" fill="#c09060" stroke="#333" stroke-width="0.4"/>
<rect x="657.0" y="1060.0" width="2.2" height="10" fill="#c09060" stroke="#333" stroke-width="0.4"/>
<rect x="662.5" y="1060.0" width="2.2" height="10" fill="#c09060" stroke="#333" stroke-width="0.4"/>
<rect x="672" y="1061.0" width="13" height="12" fill="none" stroke="#666" stroke-width="0.8"/>
<rect x="672" y="1060.5" width="7" height="6" fill="#c09060"/>
<rect x="692" y="1061.0" width="4" height="12" fill="none" stroke="#666" stroke-width="0.8"/>
<rect x="699" y="1060.0" width="6" height="13" fill="#c09060"/>
<path d="M719.50,1058.50 H744.00 A5.00,5.00 0 0 1 749.00,1063.50 V1072.50 A5.00,5.00 0 0 1 744.00,1077.50 H719.50 A5.00,5.00 0 0 1 714.50,1072.50 V1063.50 A5.00,5.00 0 0 1 719.50,1058.50 Z" fill="#ffffff" fill-opacity="0.1"/>
<path d="M719.50,1057.50 H744.00 A5.00,5.00 0 0 1 749.00,1062.50 V1071.50 A5.00,5.00 0 0 1 744.00,1076.50 H719.50 A5.00,5.00 0 0 1 714.50,1071.50 V1062.50 A5.00,5.00 0 0 1 719.50,1057.50 Z" fill="#1c1c1c"/>
<path d="M719.50,1058.50 H744.00 A4.00,4.00 0 0 1 748.00,1062.50 V1071.50 A4.00,4.00 0 0 1 744.00,1075.50 H719.50 A4.00,4.00 0 0 1 715.50,1071.50 V1062.50 A4.00,4.00 0 0 1 719.50,1058.50 Z" fill="url(#lg2)"/>
<rect x="719" y="1061.0" width="12" height="12" fill="none" stroke="#fff" stroke-width="1" stroke-dasharray="1,1"/>
<circle cx="725" cy="1064.5" r="1.8" fill="#fff" stroke="#000" stroke-width="0.7"/>
<circle cx="723" cy="1068.5" r="1.8" fill="#fff" stroke="#000" stroke-width="0.7"/>
<circle cx="727" cy="1068.5" r="1.8" fill="#fff" stroke="#000" stroke-width="0.7"/>
<path d="M739.5,1065.5 L742.5,1061.0 L745.5,1065.5 Z M739.5,1068.5 L742.5,1073.0 L745.5,1068.5 Z" fill="#c8c8c8" fill-opacity="0.8"/>
<path d="M759.50,1058.50 H783.50 A5.00,5.00 0 0 1 788.50,1063.50 V1072.50 A5.00,5.00 0 0 1 783.50,1077.50 H759.50 A5.00,5.00 0 0 1 754.50,1072.50 V1063.50 A5.00,5.00 0 0 1 759.50,1058.50 Z" fill="#ffffff" fill-opacity="0.1"/>
<path d="M759.50,1057.50 H783.50 A5.00,5.00 0 0 1 788.50,1062.50 V1071.50 A5.00,5.00 0 0 1 783.50,1076.50 H759.50 A5.00,5.00 0 0 1 754.50,1071.50 V1062.50 A5.00,5.00 0 0 1 759.50,1057.50 Z" fill="#1c1c1c"/>
<path d="M759.50,1058.50 H783.50 A4.00,4.00 0 0 1 787.50,1062.50 V1071.50 A4.00,4.00 0 0 1 783.50,1075.50 H759.50 A4.00,4.00 0 0 1 755.50,1071.50 V1062.50 A4.00,4.00 0 0 1 759.50,1058.50 Z" fill="url(#lg2)"/>
<circle cx="766" cy="1067.0" r="5" fill="#5a5a5a" stroke="#777" stroke-width="1"/><circle cx="766" cy="1067.0" r="2.5" fill="#666"/>
<path d="M779.5,1065.5 L782.5,1061.0 L785.5,1065.5 Z M779.5,1068.5 L782.5,1073.0 L785.5,1068.5 Z" fill="#c8c8c8" fill-opacity="0.8"/>
<path d="M799.50,1058.50 H813.50 V1077.50 H799.50 A5.00,5.00 0 0 1 794.50,1072.50 V1063.50 A5.00,5.00 0 0 1 799.50,1058.50 Z" fill="#ffffff" fill-opacity="0.1"/>
<path d="M799.50,1057.50 H813.50 V1076.50 H799.50 A5.00,5.00 0 0 1 794.50,1071.50 V1062.50 A5.00,5.00 0 0 1 799.50,1057.50 Z" fill="#262626"/>
<path d="M799.50,1058.50 H812.50 V1075.50 H799.50 A4.00,4.00 0 0 1 795.50,1071.50 V1062.50 A4.00,4.00 0 0 1 799.50,1058.50 Z" fill="url(#lg6)"/>
<g transform="translate(804,1067.0) rotate(-45)"><path d="M-4,-5 V1 A4,4 0 0 0 4,1 V-5" fill="none" stroke="#555" stroke-width="3.6"/><path d="M-4,-5 V1 A4,4 0 0 0 4,1 V-5" fill="none" stroke="#d0d0d0" stroke-width="2.2"/></g>
<path d="M813.00,1058.50 H844.00 A5.00,5.00 0 0 1 849.00,1063.50 V1072.50 A5.00,5.00 0 0 1 844.00,1077.50 H813.00 V1058.50 Z" fill="#ffffff" fill-opacity="0.1"/>
<path d="M813.00,1057.50 H844.00 A5.00,5.00 0 0 1 849.00,1062.50 V1071.50 A5.00,5.00 0 0 1 844.00,1076.50 H813.00 V1057.50 Z" fill="#1c1c1c"/>
<path d="M814.00,1058.50 H844.00 A4.00,4.00 0 0 1 848.00,1062.50 V1071.50 A4.00,4.00 0 0 1 844.00,1075.50 H814.00 V1058.50 Z" fill="url(#lg2)"/>
<path d="M818,1066.5 h12 M818,1071.5 h12 M822,1061.5 v13 M827,1061.5 v13" stroke="#fff" stroke-width="1"/>
<circle cx="823.5" cy="1062.5" r="3" fill="#fff" stroke="#2050d0" stroke-width="1"/><circle cx="823.5" cy="1062.5" r="1.2" fill="#2050d0"/>
<path d="M839.5,1065.5 L842.5,1061.0 L845.5,1065.5 Z M839.5,1068.5 L842.5,1073.0 L845.5,1068.5 Z" fill="#c8c8c8" fill-opacity="0.8"/>
<clipPath id="clipImgHdr"><rect x="0" y="1054" width="976" height="26"/></clipPath><g clip-path="url(#clipImgHdr)">
<path d="M859.50,1058.50 H984.50 V1077.50 H859.50 A5.00,5.00 0 0 1 854.50,1072.50 V1063.50 A5.00,5.00 0 0 1 859.50,1058.50 Z" fill="#ffffff" fill-opacity="0.1"/>
<path d="M859.50,1057.50 H984.50 V1076.50 H859.50 A5.00,5.00 0 0 1 854.50,1071.50 V1062.50 A5.00,5.00 0 0 1 859.50,1057.50 Z" fill="#262626"/>
<path d="M859.50,1058.50 H983.50 V1075.50 H859.50 A4.00,4.00 0 0 1 855.50,1071.50 V1062.50 A4.00,4.00 0 0 1 859.50,1058.50 Z" fill="url(#lg5)"/>
<circle cx="866" cy="1067.0" r="6" fill="#e0e0d0" stroke="#111" stroke-width="0.8"/>
<path d="M866,1061.0 v6 h-6 a6,6 0 0 1 6,-6 Z M866,1073.0 v-6 h6 a6,6 0 0 1 -6,6 Z" fill="#222"/>
<text x="878.1" y="1071.6" font-size="11" fill="#000000" stroke="#000000" stroke-width="0.22" text-anchor="start" >UVMap</text>
</g>
<rect x="976" y="1054" width="1" height="26" fill="#000" />
<line x1="977" y1="1067" x2="990" y2="1080" stroke="#a0a0a0" stroke-width="1" stroke-opacity="0.7"/>
<line x1="977" y1="1068" x2="989" y2="1080" stroke="#333" stroke-width="0.8" stroke-opacity="0.5"/>
<line x1="977" y1="1071" x2="986" y2="1080" stroke="#a0a0a0" stroke-width="1" stroke-opacity="0.7"/>
<line x1="977" y1="1072" x2="985" y2="1080" stroke="#333" stroke-width="0.8" stroke-opacity="0.5"/>
<line x1="977" y1="1075" x2="982" y2="1080" stroke="#a0a0a0" stroke-width="1" stroke-opacity="0.7"/>
<line x1="977" y1="1076" x2="981" y2="1080" stroke="#333" stroke-width="0.8" stroke-opacity="0.5"/>
<path d="M991.00,1058.50 H1011.00 A5.00,5.00 0 0 1 1016.00,1063.50 V1073.00 A5.00,5.00 0 0 1 1011.00,1078.00 H991.00 A5.00,5.00 0 0 1 986.00,1073.00 V1063.50 A5.00,5.00 0 0 1 991.00,1058.50 Z" fill="#ffffff" fill-opacity="0.1"/>
<path d="M991.00,1057.50 H1011.00 A5.00,5.00 0 0 1 1016.00,1062.50 V1072.00 A5.00,5.00 0 0 1 1011.00,1077.00 H991.00 A5.00,5.00 0 0 1 986.00,1072.00 V1062.50 A5.00,5.00 0 0 1 991.00,1057.50 Z" fill="#1c1c1c"/>
<path d="M991.00,1058.50 H1011.00 A4.00,4.00 0 0 1 1015.00,1062.50 V1072.00 A4.00,4.00 0 0 1 1011.00,1076.00 H991.00 A4.00,4.00 0 0 1 987.00,1072.00 V1062.50 A4.00,4.00 0 0 1 991.00,1058.50 Z" fill="url(#lg2)"/>
<path d="M991,1063.25 L997,1060.25 L1003,1063.25 V1070.25 L997,1074.25 L991,1070.25 Z" fill="#222"/>
<path d="M992,1063.75 L997,1061.25 L1002,1063.75 L997,1066.25 Z" fill="#f4f4f4"/>
<path d="M992,1064.25 L996.5,1066.75 V1073.25 L992,1070.25 Z" fill="#e0e0e0"/>
<path d="M1002,1064.25 L997.5,1066.75 V1073.25 L1002,1070.25 Z" fill="#8a8a8a"/>
<path d="M1006.5,1065.75 L1009.5,1061.25 L1012.5,1065.75 Z M1006.5,1068.75 L1009.5,1073.25 L1012.5,1068.75 Z" fill="#c8c8c8" fill-opacity="0.8"/>
<text x="1029" y="1072" font-size="11" fill="#000" stroke="#000" stroke-width="0.22" text-anchor="start" >View</text>
<text x="1073.5" y="1072" font-size="11" fill="#000" stroke="#000" stroke-width="0.22" text-anchor="start" >Select</text>
<text x="1124" y="1072" font-size="11" fill="#000" stroke="#000" stroke-width="0.22" text-anchor="start" >Add</text>
<text x="1163.5" y="1072" font-size="11" fill="#000" stroke="#000" stroke-width="0.22" text-anchor="start" >Mesh</text>
<path d="M1207.00,1058.50 H1296.00 A5.00,5.00 0 0 1 1301.00,1063.50 V1072.50 A5.00,5.00 0 0 1 1296.00,1077.50 H1207.00 A5.00,5.00 0 0 1 1202.00,1072.50 V1063.50 A5.00,5.00 0 0 1 1207.00,1058.50 Z" fill="#ffffff" fill-opacity="0.1"/>
<path d="M1207.00,1057.50 H1296.00 A5.00,5.00 0 0 1 1301.00,1062.50 V1071.50 A5.00,5.00 0 0 1 1296.00,1076.50 H1207.00 A5.00,5.00 0 0 1 1202.00,1071.50 V1062.50 A5.00,5.00 0 0 1 1207.00,1057.50 Z" fill="#1c1c1c"/>
<path d="M1207.00,1058.50 H1296.00 A4.00,4.00 0 0 1 1300.00,1062.50 V1071.50 A4.00,4.00 0 0 1 1296.00,1075.50 H1207.00 A4.00,4.00 0 0 1 1203.00,1071.50 V1062.50 A4.00,4.00 0 0 1 1207.00,1058.50 Z" fill="url(#lg2)"/>
<path d="M1208,1063.0 L1214,1060.0 L1220,1063.0 V1070.0 L1214,1074.0 L1208,1070.0 Z" fill="#222"/>
<path d="M1209,1063.5 L1214,1061.0 L1219,1063.5 L1214,1066.0 Z" fill="#f4f4f4"/>
<path d="M1209,1064.0 L1213.5,1066.5 V1073.0 L1209,1070.0 Z" fill="#e0e0e0"/>
<path d="M1219,1064.0 L1214.5,1066.5 V1073.0 L1219,1070.0 Z" fill="#8a8a8a"/>
<rect x="1207.5" y="1060.5" width="3.5" height="3.5" fill="#f0a040" stroke="#222" stroke-width="0.7"/>
<rect x="1214.5" y="1062.5" width="3.5" height="3.5" fill="#f0a040" stroke="#222" stroke-width="0.7"/>
<rect x="1207.5" y="1067.5" width="3.5" height="3.5" fill="#f0a040" stroke="#222" stroke-width="0.7"/>
<rect x="1214.5" y="1070.5" width="3.5" height="3.5" fill="#f0a040" stroke="#222" stroke-width="0.7"/>
<text x="1226.5" y="1071.6" font-size="11" fill="#ffffff" stroke="#ffffff" stroke-width="0.22" text-anchor="start" >Edit Mode</text>
<path d="M1291.5,1065.5 L1294.5,1061.0 L1297.5,1065.5 Z M1291.5,1068.5 L1294.5,1073.0 L1297.5,1068.5 Z" fill="#c8c8c8" fill-opacity="0.8"/>
<path d="M1311.00,1058.50 H1336.00 A5.00,5.00 0 0 1 1341.00,1063.50 V1072.50 A5.00,5.00 0 0 1 1336.00,1077.50 H1311.00 A5.00,5.00 0 0 1 1306.00,1072.50 V1063.50 A5.00,5.00 0 0 1 1311.00,1058.50 Z" fill="#ffffff" fill-opacity="0.1"/>
<path d="M1311.00,1057.50 H1336.00 A5.00,5.00 0 0 1 1341.00,1062.50 V1071.50 A5.00,5.00 0 0 1 1336.00,1076.50 H1311.00 A5.00,5.00 0 0 1 1306.00,1071.50 V1062.50 A5.00,5.00 0 0 1 1311.00,1057.50 Z" fill="#1c1c1c"/>
<path d="M1311.00,1058.50 H1336.00 A4.00,4.00 0 0 1 1340.00,1062.50 V1071.50 A4.00,4.00 0 0 1 1336.00,1075.50 H1311.00 A4.00,4.00 0 0 1 1307.00,1071.50 V1062.50 A4.00,4.00 0 0 1 1311.00,1058.50 Z" fill="url(#lg2)"/>
<circle cx="1318" cy="1067.0" r="6" fill="url(#lg13)"/>
<path d="M1331.5,1065.5 L1334.5,1061.0 L1337.5,1065.5 Z M1331.5,1068.5 L1334.5,1073.0 L1337.5,1068.5 Z" fill="#c8c8c8" fill-opacity="0.8"/>
<path d="M1351.00,1058.50 H1376.00 A5.00,5.00 0 0 1 1381.00,1063.50 V1072.50 A5.00,5.00 0 0 1 1376.00,1077.50 H1351.00 A5.00,5.00 0 0 1 1346.00,1072.50 V1063.50 A5.00,5.00 0 0 1 1351.00,1058.50 Z" fill="#ffffff" fill-opacity="0.1"/>
<path d="M1351.00,1057.50 H1376.00 A5.00,5.00 0 0 1 1381.00,1062.50 V1071.50 A5.00,5.00 0 0 1 1376.00,1076.50 H1351.00 A5.00,5.00 0 0 1 1346.00,1071.50 V1062.50 A5.00,5.00 0 0 1 1351.00,1057.50 Z" fill="#1c1c1c"/>
<path d="M1351.00,1058.50 H1376.00 A4.00,4.00 0 0 1 1380.00,1062.50 V1071.50 A4.00,4.00 0 0 1 1376.00,1075.50 H1351.00 A4.00,4.00 0 0 1 1347.00,1071.50 V1062.50 A4.00,4.00 0 0 1 1351.00,1058.50 Z" fill="url(#lg2)"/>
<circle cx="1355" cy="1063.5" r="4" fill="url(#lg13)"/><circle cx="1360" cy="1069.5" r="4" fill="url(#lg13)"/>
<rect x="1355" y="1064.5" width="4" height="4" fill="none" stroke="#2050d0" stroke-width="1.2"/>
<path d="M1371.5,1065.5 L1374.5,1061.0 L1377.5,1065.5 Z M1371.5,1068.5 L1374.5,1073.0 L1377.5,1068.5 Z" fill="#c8c8c8" fill-opacity="0.8"/>
<path d="M1391.00,1058.50 H1406.00 V1077.50 H1391.00 A5.00,5.00 0 0 1 1386.00,1072.50 V1063.50 A5.00,5.00 0 0 1 1391.00,1058.50 Z" fill="#ffffff" fill-opacity="0.1"/>
<path d="M1391.00,1057.50 H1406.00 V1076.50 H1391.00 A5.00,5.00 0 0 1 1386.00,1071.50 V1062.50 A5.00,5.00 0 0 1 1391.00,1057.50 Z" fill="#1c1c1c"/>
<path d="M1391.00,1058.50 H1405.00 V1075.50 H1391.00 A4.00,4.00 0 0 1 1387.00,1071.50 V1062.50 A4.00,4.00 0 0 1 1391.00,1058.50 Z" fill="url(#lg2)"/>
<path d="M1396,1067.5 V1060.5" stroke="#3060ff" stroke-width="2"/><path d="M1396,1067.5 L1389,1072.5" stroke="#e03030" stroke-width="2"/><path d="M1396,1067.5 L1403,1072.5" stroke="#30c030" stroke-width="2"/>
<path d="M1405.50,1058.50 H1426.00 V1077.50 H1405.50 V1058.50 Z" fill="#ffffff" fill-opacity="0.1"/>
<path d="M1405.50,1057.50 H1426.00 V1076.50 H1405.50 V1057.50 Z" fill="#1c1c1c"/>
<path d="M1406.50,1058.50 H1425.00 V1075.50 H1406.50 V1058.50 Z" fill="url(#lg10)"/>
<path d="M1409,1072.5 L1419,1062.5" stroke="#1a3060" stroke-width="3"/><path d="M1409,1072.5 L1419,1062.5" stroke="#b0d0ff" stroke-width="1.5"/><path d="M1414,1061.5 h6.5 v6.5 Z" fill="#b0d0ff" stroke="#1a3060" stroke-width="0.8"/>
<path d="M1425.50,1058.50 H1446.00 V1077.50 H1425.50 V1058.50 Z" fill="#ffffff" fill-opacity="0.1"/>
<path d="M1425.50,1057.50 H1446.00 V1076.50 H1425.50 V1057.50 Z" fill="#1c1c1c"/>
<path d="M1426.50,1058.50 H1445.00 V1075.50 H1426.50 V1058.50 Z" fill="url(#lg2)"/>
<path d="M1429,1073.5 q0,-10 10,-11" fill="none" stroke="#5a7ab0" stroke-width="2.2"/>
<path d="M1445.50,1058.50 H1466.00 V1077.50 H1445.50 V1058.50 Z" fill="#ffffff" fill-opacity="0.1"/>
<path d="M1445.50,1057.50 H1466.00 V1076.50 H1445.50 V1057.50 Z" fill="#1c1c1c"/>
<path d="M1446.50,1058.50 H1465.00 V1075.50 H1446.50 V1058.50 Z" fill="url(#lg2)"/>
<path d="M1449,1073.5 L1456,1066.5" stroke="#5a7ab0" stroke-width="2.2"/><rect x="1454" y="1060.5" width="6" height="6" fill="#5a7ab0" stroke="#333" stroke-width="0.6"/>
<path d="M1465.50,1058.50 H1533.00 A5.00,5.00 0 0 1 1538.00,1063.50 V1072.50 A5.00,5.00 0 0 1 1533.00,1077.50 H1465.50 V1058.50 Z" fill="#ffffff" fill-opacity="0.1"/>
<path d="M1465.50,1057.50 H1533.00 A5.00,5.00 0 0 1 1538.00,1062.50 V1071.50 A5.00,5.00 0 0 1 1533.00,1076.50 H1465.50 V1057.50 Z" fill="#1c1c1c"/>
<path d="M1466.50,1058.50 H1533.00 A4.00,4.00 0 0 1 1537.00,1062.50 V1071.50 A4.00,4.00 0 0 1 1533.00,1075.50 H1466.50 V1058.50 Z" fill="url(#lg2)"/>
<text x="1473" y="1071.6" font-size="11" fill="#ffffff" stroke="#ffffff" stroke-width="0.22" text-anchor="start" >Global</text>
<path d="M1528.5,1065.5 L1531.5,1061.0 L1534.5,1065.5 Z M1528.5,1068.5 L1531.5,1073.0 L1534.5,1068.5 Z" fill="#c8c8c8" fill-opacity="0.8"/>
<path d="M1548.50,1058.50 H1563.00 V1077.50 H1548.50 A5.00,5.00 0 0 1 1543.50,1072.50 V1063.50 A5.00,5.00 0 0 1 1548.50,1058.50 Z" fill="#ffffff" fill-opacity="0.1"/>
<path d="M1548.50,1057.50 H1563.00 V1076.50 H1548.50 A5.00,5.00 0 0 1 1543.50,1071.50 V1062.50 A5.00,5.00 0 0 1 1548.50,1057.50 Z" fill="#262626"/>
<path d="M1548.50,1058.50 H1562.00 V1075.50 H1548.50 A4.00,4.00 0 0 1 1544.50,1071.50 V1062.50 A4.00,4.00 0 0 1 1548.50,1058.50 Z" fill="url(#lg14)"/>
<path d="M1562.50,1058.50 H1583.00 V1077.50 H1562.50 V1058.50 Z" fill="#ffffff" fill-opacity="0.1"/>
<path d="M1562.50,1057.50 H1583.00 V1076.50 H1562.50 V1057.50 Z" fill="#262626"/>
<path d="M1563.50,1058.50 H1582.00 V1075.50 H1563.50 V1058.50 Z" fill="url(#lg6)"/>
<path d="M1582.50,1058.50 H1598.00 A5.00,5.00 0 0 1 1603.00,1063.50 V1072.50 A5.00,5.00 0 0 1 1598.00,1077.50 H1582.50 V1058.50 Z" fill="#ffffff" fill-opacity="0.1"/>
<path d="M1582.50,1057.50 H1598.00 A5.00,5.00 0 0 1 1603.00,1062.50 V1071.50 A5.00,5.00 0 0 1 1598.00,1076.50 H1582.50 V1057.50 Z" fill="#262626"/>
<path d="M1583.50,1058.50 H1598.00 A4.00,4.00 0 0 1 1602.00,1062.50 V1071.50 A4.00,4.00 0 0 1 1598.00,1075.50 H1583.50 V1058.50 Z" fill="url(#lg6)"/>
<path d="M1547,1063.5 L1553,1060.5 L1559,1063.5 V1070.5 L1553,1073.5 L1547,1070.5 Z" fill="#2a2a2a"/>
<path d="M1548,1063.5 L1553,1061.2 L1558,1063.5 L1553,1065.8 Z" fill="#d8d8d8"/>
<path d="M1548,1064.2 L1552.6,1066.5 V1072.6 L1548,1070.0 Z" fill="#b4b4b4"/>
<path d="M1558,1064.2 L1553.4,1066.5 V1072.6 L1558,1070.0 Z" fill="#8c8c8c"/>
<path d="M1566.5,1063.5 L1572.5,1060.5 L1578.5,1063.5 V1070.5 L1572.5,1073.5 L1566.5,1070.5 Z" fill="#2a2a2a"/>
<path d="M1567.5,1063.5 L1572.5,1061.2 L1577.5,1063.5 L1572.5,1065.8 Z" fill="#d8d8d8"/>
<path d="M1567.5,1064.2 L1572.1,1066.5 V1072.6 L1567.5,1070.0 Z" fill="#b4b4b4"/>
<path d="M1577.5,1064.2 L1572.9,1066.5 V1072.6 L1577.5,1070.0 Z" fill="#8c8c8c"/>
<path d="M1586.5,1063.5 L1592.5,1060.5 L1598.5,1063.5 V1070.5 L1592.5,1073.5 L1586.5,1070.5 Z" fill="#2a2a2a"/>
<path d="M1587.5,1063.5 L1592.5,1061.2 L1597.5,1063.5 L1592.5,1065.8 Z" fill="#d8d8d8"/>
<path d="M1587.5,1064.2 L1592.1,1066.5 V1072.6 L1587.5,1070.0 Z" fill="#b4b4b4"/>
<path d="M1597.5,1064.2 L1592.9,1066.5 V1072.6 L1597.5,1070.0 Z" fill="#8c8c8c"/>
<circle cx="1547.5" cy="1061.5" r="2.2" fill="#f0a040" stroke="#222" stroke-width="0.7"/>
<rect x="1565" y="1061.5" width="2.5" height="11" fill="#d8a878" stroke="#333" stroke-width="0.6"/>
<path d="M1587,1064.0 L1592,1066.5 V1073.5 L1587,1071.0 Z" fill="#d8a878" stroke="#333" stroke-width="0.6"/>
<path d="M1613.50,1058.50 H1622.50 A5.00,5.00 0 0 1 1627.50,1063.50 V1072.50 A5.00,5.00 0 0 1 1622.50,1077.50 H1613.50 A5.00,5.00 0 0 1 1608.50,1072.50 V1063.50 A5.00,5.00 0 0 1 1613.50,1058.50 Z" fill="#ffffff" fill-opacity="0.1"/>
<path d="M1613.50,1057.50 H1622.50 A5.00,5.00 0 0 1 1627.50,1062.50 V1071.50 A5.00,5.00 0 0 1 1622.50,1076.50 H1613.50 A5.00,5.00 0 0 1 1608.50,1071.50 V1062.50 A5.00,5.00 0 0 1 1613.50,1057.50 Z" fill="#262626"/>
<path d="M1613.50,1058.50 H1622.50 A4.00,4.00 0 0 1 1626.50,1062.50 V1071.50 A4.00,4.00 0 0 1 1622.50,1075.50 H1613.50 A4.00,4.00 0 0 1 1609.50,1071.50 V1062.50 A4.00,4.00 0 0 1 1613.50,1058.50 Z" fill="url(#lg6)"/>
<rect x="1612" y="1062.5" width="10" height="9" fill="#ccc" stroke="#111" stroke-width="0.9"/>
<circle cx="1612" cy="1062.5" r="1.7" fill="#fff" stroke="#000" stroke-width="0.8"/>
<circle cx="1620" cy="1062.5" r="1.7" fill="#fff" stroke="#000" stroke-width="0.8"/>
<circle cx="1612" cy="1071.5" r="1.7" fill="#fff" stroke="#000" stroke-width="0.8"/>
<circle cx="1620" cy="1071.5" r="1.7" fill="#fff" stroke="#000" stroke-width="0.8"/>
<path d="M1638.50,1058.50 H1662.50 A5.00,5.00 0 0 1 1667.50,1063.50 V1072.50 A5.00,5.00 0 0 1 1662.50,1077.50 H1638.50 A5.00,5.00 0 0 1 1633.50,1072.50 V1063.50 A5.00,5.00 0 0 1 1638.50,1058.50 Z" fill="#ffffff" fill-opacity="0.1"/>
<path d="M1638.50,1057.50 H1662.50 A5.00,5.00 0 0 1 1667.50,1062.50 V1071.50 A5.00,5.00 0 0 1 1662.50,1076.50 H1638.50 A5.00,5.00 0 0 1 1633.50,1071.50 V1062.50 A5.00,5.00 0 0 1 1638.50,1057.50 Z" fill="#1c1c1c"/>
<path d="M1638.50,1058.50 H1662.50 A4.00,4.00 0 0 1 1666.50,1062.50 V1071.50 A4.00,4.00 0 0 1 1662.50,1075.50 H1638.50 A4.00,4.00 0 0 1 1634.50,1071.50 V1062.50 A4.00,4.00 0 0 1 1638.50,1058.50 Z" fill="url(#lg2)"/>
<circle cx="1645" cy="1067.0" r="5" fill="#5a5a5a" stroke="#777" stroke-width="1"/><circle cx="1645" cy="1067.0" r="2.5" fill="#666"/>
<path d="M1658.5,1065.5 L1661.5,1061.0 L1664.5,1065.5 Z M1658.5,1068.5 L1661.5,1073.0 L1664.5,1068.5 Z" fill="#c8c8c8" fill-opacity="0.8"/>
<path d="M1678.50,1058.50 H1693.00 V1077.50 H1678.50 A5.00,5.00 0 0 1 1673.50,1072.50 V1063.50 A5.00,5.00 0 0 1 1678.50,1058.50 Z" fill="#ffffff" fill-opacity="0.1"/>
<path d="M1678.50,1057.50 H1693.00 V1076.50 H1678.50 A5.00,5.00 0 0 1 1673.50,1071.50 V1062.50 A5.00,5.00 0 0 1 1678.50,1057.50 Z" fill="#262626"/>
<path d="M1678.50,1058.50 H1692.00 V1075.50 H1678.50 A4.00,4.00 0 0 1 1674.50,1071.50 V1062.50 A4.00,4.00 0 0 1 1678.50,1058.50 Z" fill="url(#lg6)"/>
<g transform="translate(1683,1067.0) rotate(-45)"><path d="M-4,-5 V1 A4,4 0 0 0 4,1 V-5" fill="none" stroke="#555" stroke-width="3.6"/><path d="M-4,-5 V1 A4,4 0 0 0 4,1 V-5" fill="none" stroke="#d0d0d0" stroke-width="2.2"/></g>
<path d="M1692.50,1058.50 H1722.50 A5.00,5.00 0 0 1 1727.50,1063.50 V1072.50 A5.00,5.00 0 0 1 1722.50,1077.50 H1692.50 V1058.50 Z" fill="#ffffff" fill-opacity="0.1"/>
<path d="M1692.50,1057.50 H1722.50 A5.00,5.00 0 0 1 1727.50,1062.50 V1071.50 A5.00,5.00 0 0 1 1722.50,1076.50 H1692.50 V1057.50 Z" fill="#1c1c1c"/>
<path d="M1693.50,1058.50 H1722.50 A4.00,4.00 0 0 1 1726.50,1062.50 V1071.50 A4.00,4.00 0 0 1 1722.50,1075.50 H1693.50 V1058.50 Z" fill="url(#lg2)"/>
<path d="M1698,1066.5 h12 M1698,1071.5 h12 M1702,1061.5 v13 M1707,1061.5 v13" stroke="#fff" stroke-width="1"/>
<circle cx="1702.5" cy="1062.5" r="3" fill="#fff" stroke="#2050d0" stroke-width="1"/><circle cx="1702.5" cy="1062.5" r="1.2" fill="#2050d0"/>
<path d="M1718.5,1065.5 L1721.5,1061.0 L1724.5,1065.5 Z M1718.5,1068.5 L1721.5,1073.0 L1724.5,1068.5 Z" fill="#c8c8c8" fill-opacity="0.8"/>
<path d="M1738.50,1058.50 H1747.50 A5.00,5.00 0 0 1 1752.50,1063.50 V1072.50 A5.00,5.00 0 0 1 1747.50,1077.50 H1738.50 A5.00,5.00 0 0 1 1733.50,1072.50 V1063.50 A5.00,5.00 0 0 1 1738.50,1058.50 Z" fill="#ffffff" fill-opacity="0.1"/>
<path d="M1738.50,1057.50 H1747.50 A5.00,5.00 0 0 1 1752.50,1062.50 V1071.50 A5.00,5.00 0 0 1 1747.50,1076.50 H1738.50 A5.00,5.00 0 0 1 1733.50,1071.50 V1062.50 A5.00,5.00 0 0 1 1738.50,1057.50 Z" fill="#262626"/>
<path d="M1738.50,1058.50 H1747.50 A4.00,4.00 0 0 1 1751.50,1062.50 V1071.50 A4.00,4.00 0 0 1 1747.50,1075.50 H1738.50 A4.00,4.00 0 0 1 1734.50,1071.50 V1062.50 A4.00,4.00 0 0 1 1738.50,1058.50 Z" fill="url(#lg6)"/>
<path d="M1737,1073.5 L1741.5,1069.0 M1749,1060.5 L1744.5,1065.0" stroke="#222" stroke-width="3"/><path d="M1737,1073.5 L1741.5,1069.0 M1749,1060.5 L1744.5,1065.0" stroke="#fff" stroke-width="1.6"/>
<path d="M1739,1067.5 h4 v4 Z M1747,1066.5 h-4 v-4 Z" fill="#fff" stroke="#222" stroke-width="0.6"/>
<circle cx="1736.5" cy="1074.0" r="1.6" fill="#f0a040"/><circle cx="1749.5" cy="1060.0" r="1.6" fill="#f0a040"/>
<path d="M1763.50,1058.50 H1777.50 V1077.50 H1763.50 A5.00,5.00 0 0 1 1758.50,1072.50 V1063.50 A5.00,5.00 0 0 1 1763.50,1058.50 Z" fill="#ffffff" fill-opacity="0.1"/>
<path d="M1763.50,1057.50 H1777.50 V1076.50 H1763.50 A5.00,5.00 0 0 1 1758.50,1071.50 V1062.50 A5.00,5.00 0 0 1 1763.50,1057.50 Z" fill="#262626"/>
<path d="M1763.50,1058.50 H1776.50 V1075.50 H1763.50 A4.00,4.00 0 0 1 1759.50,1071.50 V1062.50 A4.00,4.00 0 0 1 1763.50,1058.50 Z" fill="url(#lg1)"/>
<rect x="1761" y="1063.5" width="13" height="9" rx="1" fill="#e4e4e4" stroke="#111" stroke-width="0.8"/><rect x="1763" y="1062.0" width="4" height="2" fill="#ccc" stroke="#111" stroke-width="0.6"/><circle cx="1768" cy="1068.0" r="3.2" fill="#3a3a3a" stroke="#111" stroke-width="0.8"/><circle cx="1768" cy="1068.0" r="1.5" fill="#a03030"/><circle cx="1763" cy="1065.5" r="0.8" fill="#e02020"/>
<circle cx="1773.5" cy="1062.0" r="3.2" fill="#f0d040" stroke="#806010" stroke-width="0.6"/><path d="M1771.5,1062.0 h4 M1773.5,1060.0 v4" stroke="#fff" stroke-width="1.2"/>
<path d="M1777.25,1058.50 H1792.50 A5.00,5.00 0 0 1 1797.50,1063.50 V1072.50 A5.00,5.00 0 0 1 1792.50,1077.50 H1777.25 V1058.50 Z" fill="#ffffff" fill-opacity="0.1"/>
<path d="M1777.25,1057.50 H1792.50 A5.00,5.00 0 0 1 1797.50,1062.50 V1071.50 A5.00,5.00 0 0 1 1792.50,1076.50 H1777.25 V1057.50 Z" fill="#262626"/>
<path d="M1778.25,1058.50 H1792.50 A4.00,4.00 0 0 1 1796.50,1062.50 V1071.50 A4.00,4.00 0 0 1 1792.50,1075.50 H1778.25 V1058.50 Z" fill="url(#lg1)"/>
<rect x="1781" y="1066.5" width="12" height="7" fill="#3a3a3a" stroke="#111" stroke-width="0.8"/><path d="M1782,1069.5 h10" stroke="#bbb" stroke-width="0.8" stroke-dasharray="2,1"/><path d="M1781,1065.5 l11,-4.5 l0.9,2.6 l-11,4.5 Z" fill="#eee" stroke="#111" stroke-width="0.6"/><path d="M1783,1064.3 l2,-0.8 M1787,1062.8 l2,-0.8" stroke="#111" stroke-width="1"/><path d="M1779.5,1063.5 v5" stroke="#4070d0" stroke-width="1.6"/>
</svg>
</body></html>
